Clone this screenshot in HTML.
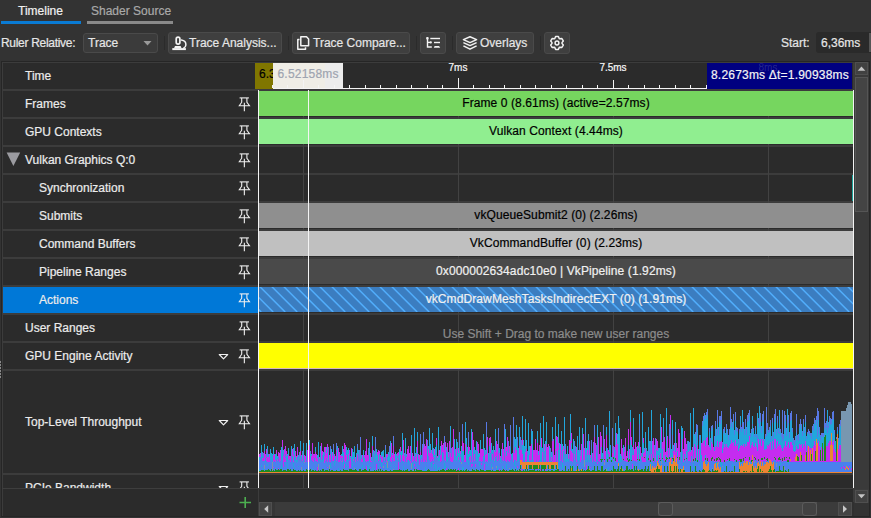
<!DOCTYPE html><html><head><meta charset="utf-8"><style>
*{margin:0;padding:0;box-sizing:border-box}
html,body{width:871px;height:518px;overflow:hidden;background:#333333;font-family:"Liberation Sans", sans-serif;font-size:12px;color:#e6e6e6}
.abs{position:absolute}
.t{position:absolute;white-space:nowrap;line-height:14px;-webkit-text-stroke:0.2px currentColor}
.btn{position:absolute;background:#3f3f3f;border:1px solid #4a4a4a;border-radius:3px}
.sep{position:absolute;width:1px;background:#2b2b2b}
svg{position:absolute;overflow:visible}
</style></head><body>

<div class="t" style="left:18px;top:4px;color:#f0f0f0">Timeline</div>
<div class="abs" style="left:1px;top:21px;width:80px;height:3px;background:#0a7bd4"></div>
<div class="t" style="left:91px;top:4px;color:#a9a9a9">Shader Source</div>
<div class="abs" style="left:87px;top:21px;width:86px;height:3px;background:#8a8a8a"></div>
<div class="t" style="left:1px;top:36px;letter-spacing:-0.3px">Ruler Relative:</div>
<div class="btn" style="left:83px;top:33px;width:75px;height:20px;background:#3b3b3b"></div>
<div class="t" style="left:88px;top:36px">Trace</div>
<svg style="left:0;top:0" width="1" height="1"><path d="M143.5,41 H151.5 L147.5,45.5 Z" fill="#9a9a9a"/></svg>
<div class="sep" style="left:164px;top:36px;height:14px"></div>
<div class="btn" style="left:168px;top:32px;width:114px;height:22px"></div>
<div class="t" style="left:189px;top:36px">Trace Analysis...</div>
<div class="sep" style="left:288px;top:36px;height:14px"></div>
<div class="btn" style="left:292px;top:32px;width:118px;height:22px"></div>
<div class="t" style="left:313px;top:36px">Trace Compare...</div>
<div class="sep" style="left:416px;top:36px;height:14px"></div>
<div class="btn" style="left:420px;top:32px;width:26px;height:22px"></div>
<div class="sep" style="left:452px;top:36px;height:14px"></div>
<div class="btn" style="left:456px;top:32px;width:78px;height:22px"></div>
<div class="t" style="left:480px;top:36px">Overlays</div>
<div class="sep" style="left:540px;top:36px;height:14px"></div>
<div class="btn" style="left:544px;top:32px;width:26px;height:22px"></div>
<div class="t" style="left:781px;top:36px">Start:</div>
<div class="abs" style="left:816px;top:32px;width:60px;height:21px;background:#2a2a2a;border-radius:3px"></div>
<div class="abs" style="left:869px;top:33px;width:2px;height:19px;background:#555"></div>
<div class="t" style="left:821px;top:36px">6,36ms</div>
<svg style="left:0;top:0" width="1" height="1"><g fill="none" stroke="#f4f4f4" stroke-width="1.7"><rect x="176.2" y="37.2" width="3.7" height="7" rx="1.85"/><path d="M181.4,40 C184.3,40.4 186,42.6 185.9,45 C185.8,46.6 184.8,47.6 183.6,48.2" stroke-width="1.5" stroke-linecap="round"/></g><path d="M172.3,48.1 H185.9 V50.1 H172.3 Z" fill="#f4f4f4"/><path d="M175,46 H180.6 L181.6,48.2 H174 Z" fill="#f4f4f4"/><g fill="none" stroke="#f4f4f4" stroke-width="1.5" stroke-linejoin="round"><path d="M300.8,36.8 H306.5 L308.6,39 V45.8 H300.8 Z"/><path d="M299.5,39.5 H297.8 V49.2 H305.5 V47.2"/></g><g fill="none" stroke="#f4f4f4" stroke-width="1.4"><path d="M427.5,37.8 V47 H431.8"/><path d="M427.5,42.4 H431.2"/><path d="M430.3,38.5 H440"/><path d="M434,42.5 H440"/></g><path d="M434.6,46 H439 L440.2,47.8 H433.8 Z" fill="#f4f4f4"/><rect x="426.2" y="36.9" width="2.4" height="2.6" rx="0.8" fill="#f4f4f4"/><circle cx="430.8" cy="42.4" r="1.1" fill="#f4f4f4"/><g fill="none" stroke="#f2f2f2" stroke-width="1.5" stroke-linejoin="round"><path d="M470,36.7 L476.6,39.6 L470,42.6 L463.4,39.6 Z"/><path d="M463.4,42.6 L470,45.6 L476.6,42.6"/><path d="M463.4,45.9 L470,49.2 L476.6,45.9"/></g><g fill="none" stroke="#f2f2f2" stroke-width="1.5" stroke-linejoin="round"><path d="M561.99,43.35 L563.28,45.04 L561.90,47.42 L559.80,47.15 L559.19,47.49 L558.37,49.46 L555.63,49.46 L554.81,47.49 L554.20,47.15 L552.10,47.42 L550.72,45.04 L552.01,43.35 L552.01,42.65 L550.72,40.96 L552.10,38.58 L554.20,38.85 L554.81,38.51 L555.63,36.54 L558.37,36.54 L559.19,38.51 L559.80,38.85 L561.90,38.58 L563.28,40.96 L561.99,42.65 Z"/><circle cx="557" cy="43" r="1.9"/></g></svg>
<div class="abs" style="left:1px;top:61px;width:869px;height:456px;background:#262626"></div>
<div class="abs" style="left:2px;top:62px;width:867px;height:454px;background:#3c3c3c"></div>
<div class="abs" style="left:0;top:0;width:871px;height:518px;">
<div class="abs" style="left:0;top:63px;width:871px;height:425px;overflow:hidden">
<div class="abs" style="left:3px;top:0px;width:255px;height:26px;background:#2b2b2b"></div>
<div class="abs" style="left:259px;top:0px;width:594px;height:26px;background:#2b2b2b"></div>
<div class="t" style="left:25px;top:5.5px;color:#ececec">Time</div>
<div class="abs" style="left:3px;top:28px;width:255px;height:26px;background:#2b2b2b"></div>
<div class="abs" style="left:259px;top:28px;width:594px;height:26px;background:#2b2b2b"></div>
<div class="t" style="left:25px;top:33.5px;color:#ececec">Frames</div>
<div class="abs" style="left:3px;top:56px;width:255px;height:26px;background:#2b2b2b"></div>
<div class="abs" style="left:259px;top:56px;width:594px;height:26px;background:#2b2b2b"></div>
<div class="t" style="left:25px;top:61.5px;color:#ececec">GPU Contexts</div>
<div class="abs" style="left:3px;top:84px;width:255px;height:26px;background:#2b2b2b"></div>
<div class="abs" style="left:259px;top:84px;width:594px;height:26px;background:#2b2b2b"></div>
<div class="t" style="left:25px;top:89.5px;color:#ececec">Vulkan Graphics Q:0</div>
<div class="abs" style="left:3px;top:112px;width:255px;height:26px;background:#2b2b2b"></div>
<div class="abs" style="left:259px;top:112px;width:594px;height:26px;background:#2b2b2b"></div>
<div class="t" style="left:39px;top:117.5px;color:#ececec">Synchronization</div>
<div class="abs" style="left:3px;top:140px;width:255px;height:26px;background:#2b2b2b"></div>
<div class="abs" style="left:259px;top:140px;width:594px;height:26px;background:#2b2b2b"></div>
<div class="t" style="left:39px;top:145.5px;color:#ececec">Submits</div>
<div class="abs" style="left:3px;top:168px;width:255px;height:26px;background:#2b2b2b"></div>
<div class="abs" style="left:259px;top:168px;width:594px;height:26px;background:#2b2b2b"></div>
<div class="t" style="left:39px;top:173.5px;color:#ececec">Command Buffers</div>
<div class="abs" style="left:3px;top:196px;width:255px;height:26px;background:#2b2b2b"></div>
<div class="abs" style="left:259px;top:196px;width:594px;height:26px;background:#2b2b2b"></div>
<div class="t" style="left:39px;top:201.5px;color:#ececec">Pipeline Ranges</div>
<div class="abs" style="left:3px;top:224px;width:255px;height:26px;background:#0078d7"></div>
<div class="abs" style="left:259px;top:224px;width:594px;height:26px;background:#2b2b2b"></div>
<div class="t" style="left:39px;top:229.5px;color:#ececec">Actions</div>
<div class="abs" style="left:3px;top:252px;width:255px;height:26px;background:#2b2b2b"></div>
<div class="abs" style="left:259px;top:252px;width:594px;height:26px;background:#2b2b2b"></div>
<div class="t" style="left:25px;top:257.5px;color:#ececec">User Ranges</div>
<div class="abs" style="left:3px;top:280px;width:255px;height:26px;background:#2b2b2b"></div>
<div class="abs" style="left:259px;top:280px;width:594px;height:26px;background:#2b2b2b"></div>
<div class="t" style="left:25px;top:285.5px;color:#ececec">GPU Engine Activity</div>
<div class="abs" style="left:3px;top:308px;width:255px;height:102px;background:#2b2b2b"></div>
<div class="abs" style="left:259px;top:308px;width:594px;height:102px;background:#2b2b2b"></div>
<div class="t" style="left:25px;top:351.5px;color:#ececec">Top-Level Throughput</div>
<div class="abs" style="left:3px;top:412px;width:255px;height:26px;background:#2b2b2b"></div>
<div class="abs" style="left:259px;top:412px;width:594px;height:26px;background:#2b2b2b"></div>
<div class="t" style="left:25px;top:417.5px;color:#ececec">PCIe Bandwidth</div>
<svg style="left:0;top:0" width="1" height="1"><g transform="translate(238,33.5)" fill="none" stroke="#f0f0f0" stroke-width="1.1"><path d="M1.6,1.4 H10.9"/><path d="M3.7,1.6 V5.7 L1.3,9.3 H11.5 L8.9,5.7 V1.6"/><path d="M6.35,6.2 V14.8"/></g><g transform="translate(238,61.5)" fill="none" stroke="#f0f0f0" stroke-width="1.1"><path d="M1.6,1.4 H10.9"/><path d="M3.7,1.6 V5.7 L1.3,9.3 H11.5 L8.9,5.7 V1.6"/><path d="M6.35,6.2 V14.8"/></g><g transform="translate(238,89.5)" fill="none" stroke="#f0f0f0" stroke-width="1.1"><path d="M1.6,1.4 H10.9"/><path d="M3.7,1.6 V5.7 L1.3,9.3 H11.5 L8.9,5.7 V1.6"/><path d="M6.35,6.2 V14.8"/></g><path d="M6.6,89.4 H20.2 L13.4,103 Z" fill="#9b9ba0"/><g transform="translate(238,117.5)" fill="none" stroke="#f0f0f0" stroke-width="1.1"><path d="M1.6,1.4 H10.9"/><path d="M3.7,1.6 V5.7 L1.3,9.3 H11.5 L8.9,5.7 V1.6"/><path d="M6.35,6.2 V14.8"/></g><g transform="translate(238,145.5)" fill="none" stroke="#f0f0f0" stroke-width="1.1"><path d="M1.6,1.4 H10.9"/><path d="M3.7,1.6 V5.7 L1.3,9.3 H11.5 L8.9,5.7 V1.6"/><path d="M6.35,6.2 V14.8"/></g><g transform="translate(238,173.5)" fill="none" stroke="#f0f0f0" stroke-width="1.1"><path d="M1.6,1.4 H10.9"/><path d="M3.7,1.6 V5.7 L1.3,9.3 H11.5 L8.9,5.7 V1.6"/><path d="M6.35,6.2 V14.8"/></g><g transform="translate(238,201.5)" fill="none" stroke="#f0f0f0" stroke-width="1.1"><path d="M1.6,1.4 H10.9"/><path d="M3.7,1.6 V5.7 L1.3,9.3 H11.5 L8.9,5.7 V1.6"/><path d="M6.35,6.2 V14.8"/></g><g transform="translate(238,229.5)" fill="none" stroke="#f0f0f0" stroke-width="1.1"><path d="M1.6,1.4 H10.9"/><path d="M3.7,1.6 V5.7 L1.3,9.3 H11.5 L8.9,5.7 V1.6"/><path d="M6.35,6.2 V14.8"/></g><g transform="translate(238,257.5)" fill="none" stroke="#f0f0f0" stroke-width="1.1"><path d="M1.6,1.4 H10.9"/><path d="M3.7,1.6 V5.7 L1.3,9.3 H11.5 L8.9,5.7 V1.6"/><path d="M6.35,6.2 V14.8"/></g><g transform="translate(238,285.5)" fill="none" stroke="#f0f0f0" stroke-width="1.1"><path d="M1.6,1.4 H10.9"/><path d="M3.7,1.6 V5.7 L1.3,9.3 H11.5 L8.9,5.7 V1.6"/><path d="M6.35,6.2 V14.8"/></g><path d="M219.3,291.5 H227.7 L223.5,295.8 Z" fill="none" stroke="#f0f0f0" stroke-width="1.2" stroke-linejoin="round"/><g transform="translate(238,351.5)" fill="none" stroke="#f0f0f0" stroke-width="1.1"><path d="M1.6,1.4 H10.9"/><path d="M3.7,1.6 V5.7 L1.3,9.3 H11.5 L8.9,5.7 V1.6"/><path d="M6.35,6.2 V14.8"/></g><path d="M219.3,357.5 H227.7 L223.5,361.8 Z" fill="none" stroke="#f0f0f0" stroke-width="1.2" stroke-linejoin="round"/><g transform="translate(238,417.5)" fill="none" stroke="#f0f0f0" stroke-width="1.1"><path d="M1.6,1.4 H10.9"/><path d="M3.7,1.6 V5.7 L1.3,9.3 H11.5 L8.9,5.7 V1.6"/><path d="M6.35,6.2 V14.8"/></g><path d="M219.3,423.5 H227.7 L223.5,427.8 Z" fill="none" stroke="#f0f0f0" stroke-width="1.2" stroke-linejoin="round"/></svg>
</div>
</div>
<div class="abs" style="left:303px;top:91px;width:1px;height:397px;background:#424242"></div>
<div class="abs" style="left:458px;top:91px;width:1px;height:397px;background:#424242"></div>
<div class="abs" style="left:613px;top:91px;width:1px;height:397px;background:#424242"></div>
<div class="abs" style="left:768px;top:91px;width:1px;height:397px;background:#424242"></div>
<div class="abs" style="left:259px;top:91px;width:594px;height:25px;background:#76d65f;"></div>
<div class="t" style="left:259px;width:594px;text-align:center;top:95.5px;color:#000;letter-spacing:0.1px">Frame 0 (8.61ms) (active=2.57ms)</div>
<div class="abs" style="left:259px;top:119px;width:594px;height:25px;background:#90ee90;"></div>
<div class="t" style="left:259px;width:594px;text-align:center;top:123.5px;color:#000;letter-spacing:0.1px">Vulkan Context (4.44ms)</div>
<div class="abs" style="left:852px;top:175px;width:1px;height:26px;background:#1aa39a"></div>
<div class="abs" style="left:259px;top:203px;width:594px;height:25px;background:#8f8f8f;"></div>
<div class="t" style="left:259px;width:594px;text-align:center;top:207.5px;color:#000;letter-spacing:0.1px">vkQueueSubmit2 (0) (2.26ms)</div>
<div class="abs" style="left:259px;top:231px;width:594px;height:25px;background:#c0c0c0;"></div>
<div class="t" style="left:259px;width:594px;text-align:center;top:235.5px;color:#000;letter-spacing:0.1px">VkCommandBuffer (0) (2.23ms)</div>
<div class="abs" style="left:259px;top:259px;width:594px;height:25px;background:#4a4a4a;"></div>
<div class="t" style="left:259px;width:594px;text-align:center;top:263.5px;color:#f0f0f0;letter-spacing:0.1px">0x000002634adc10e0 | VkPipeline (1.92ms)</div>
<div class="abs" style="left:259px;top:287px;width:594px;height:25px;background:#3b7dc0;"></div>
<svg style="left:259px;top:287px;overflow:hidden" width="594" height="25" viewBox="259 287 594 25"><g stroke="#52aefc" stroke-width="1.5"><path d="M223.7,286.5 L249.2,312" /><path d="M235.7,286.5 L261.2,312" /><path d="M247.7,286.5 L273.2,312" /><path d="M259.7,286.5 L285.2,312" /><path d="M271.7,286.5 L297.2,312" /><path d="M283.7,286.5 L309.2,312" /><path d="M295.7,286.5 L321.2,312" /><path d="M307.7,286.5 L333.2,312" /><path d="M319.7,286.5 L345.2,312" /><path d="M331.7,286.5 L357.2,312" /><path d="M343.7,286.5 L369.2,312" /><path d="M355.7,286.5 L381.2,312" /><path d="M367.7,286.5 L393.2,312" /><path d="M379.7,286.5 L405.2,312" /><path d="M391.7,286.5 L417.2,312" /><path d="M403.7,286.5 L429.2,312" /><path d="M415.7,286.5 L441.2,312" /><path d="M427.7,286.5 L453.2,312" /><path d="M439.7,286.5 L465.2,312" /><path d="M451.7,286.5 L477.2,312" /><path d="M463.7,286.5 L489.2,312" /><path d="M475.7,286.5 L501.2,312" /><path d="M487.7,286.5 L513.2,312" /><path d="M499.7,286.5 L525.2,312" /><path d="M511.7,286.5 L537.2,312" /><path d="M523.7,286.5 L549.2,312" /><path d="M535.7,286.5 L561.2,312" /><path d="M547.7,286.5 L573.2,312" /><path d="M559.7,286.5 L585.2,312" /><path d="M571.7,286.5 L597.2,312" /><path d="M583.7,286.5 L609.2,312" /><path d="M595.7,286.5 L621.2,312" /><path d="M607.7,286.5 L633.2,312" /><path d="M619.7,286.5 L645.2,312" /><path d="M631.7,286.5 L657.2,312" /><path d="M643.7,286.5 L669.2,312" /><path d="M655.7,286.5 L681.2,312" /><path d="M667.7,286.5 L693.2,312" /><path d="M679.7,286.5 L705.2,312" /><path d="M691.7,286.5 L717.2,312" /><path d="M703.7,286.5 L729.2,312" /><path d="M715.7,286.5 L741.2,312" /><path d="M727.7,286.5 L753.2,312" /><path d="M739.7,286.5 L765.2,312" /><path d="M751.7,286.5 L777.2,312" /><path d="M763.7,286.5 L789.2,312" /><path d="M775.7,286.5 L801.2,312" /><path d="M787.7,286.5 L813.2,312" /><path d="M799.7,286.5 L825.2,312" /><path d="M811.7,286.5 L837.2,312" /><path d="M823.7,286.5 L849.2,312" /><path d="M835.7,286.5 L861.2,312" /><path d="M847.7,286.5 L873.2,312" /><path d="M859.7,286.5 L885.2,312" /><path d="M871.7,286.5 L897.2,312" /></g></svg>
<div class="t" style="left:259px;width:594px;text-align:center;top:291.5px;color:#f0f0f0;letter-spacing:0.1px">vkCmdDrawMeshTasksIndirectEXT (0) (1.91ms)</div>
<div class="t" style="left:259px;width:594px;text-align:center;top:326.5px;color:#8c8c8c">Use Shift + Drag to make new user ranges</div>
<div class="abs" style="left:259px;top:343px;width:594px;height:25px;background:#ffff00;"></div>
<div class="abs" style="left:259px;top:368px;width:594px;height:1px;background:#d8b8c0"></div>
<div class="abs" style="left:259px;top:63px;width:594px;height:26px;background:#2b2b2b"></div>
<div class="abs" style="left:255px;top:63px;width:18px;height:26px;background:#807600;overflow:hidden"><div class="t" style="left:4px;top:4.3px;color:#000">6.3</div></div>
<div class="abs" style="left:273px;top:63px;width:52px;height:25px;background:#efede6"></div>
<div class="abs" style="left:325px;top:63px;width:18px;height:25px;background:#ececec"></div>
<div class="t" style="left:277.5px;top:67.3px;color:#9ea4b0;letter-spacing:0.2px">6.52158ms</div>
<div class="abs" style="left:273px;top:88px;width:434px;height:1px;background:#f4f4f4"></div>
<div class="abs" style="left:272px;top:85px;width:1px;height:3px;background:#f4f4f4"></div><div class="abs" style="left:287px;top:85px;width:1px;height:3px;background:#f4f4f4"></div><div class="abs" style="left:303px;top:80px;width:1px;height:8px;background:#f4f4f4"></div><div class="abs" style="left:318px;top:85px;width:1px;height:3px;background:#f4f4f4"></div><div class="abs" style="left:334px;top:85px;width:1px;height:3px;background:#f4f4f4"></div><div class="abs" style="left:349px;top:85px;width:1px;height:3px;background:#f4f4f4"></div><div class="abs" style="left:365px;top:85px;width:1px;height:3px;background:#f4f4f4"></div><div class="abs" style="left:380px;top:85px;width:1px;height:3px;background:#f4f4f4"></div><div class="abs" style="left:396px;top:85px;width:1px;height:3px;background:#f4f4f4"></div><div class="abs" style="left:411px;top:85px;width:1px;height:3px;background:#f4f4f4"></div><div class="abs" style="left:427px;top:85px;width:1px;height:3px;background:#f4f4f4"></div><div class="abs" style="left:442px;top:85px;width:1px;height:3px;background:#f4f4f4"></div><div class="abs" style="left:458px;top:78px;width:1px;height:10px;background:#f4f4f4"></div><div class="abs" style="left:473px;top:85px;width:1px;height:3px;background:#f4f4f4"></div><div class="abs" style="left:489px;top:85px;width:1px;height:3px;background:#f4f4f4"></div><div class="abs" style="left:504px;top:85px;width:1px;height:3px;background:#f4f4f4"></div><div class="abs" style="left:520px;top:85px;width:1px;height:3px;background:#f4f4f4"></div><div class="abs" style="left:535px;top:85px;width:1px;height:3px;background:#f4f4f4"></div><div class="abs" style="left:551px;top:85px;width:1px;height:3px;background:#f4f4f4"></div><div class="abs" style="left:566px;top:85px;width:1px;height:3px;background:#f4f4f4"></div><div class="abs" style="left:582px;top:85px;width:1px;height:3px;background:#f4f4f4"></div><div class="abs" style="left:597px;top:85px;width:1px;height:3px;background:#f4f4f4"></div><div class="abs" style="left:613px;top:80px;width:1px;height:8px;background:#f4f4f4"></div><div class="abs" style="left:628px;top:85px;width:1px;height:3px;background:#f4f4f4"></div><div class="abs" style="left:644px;top:85px;width:1px;height:3px;background:#f4f4f4"></div><div class="abs" style="left:659px;top:85px;width:1px;height:3px;background:#f4f4f4"></div><div class="abs" style="left:675px;top:85px;width:1px;height:3px;background:#f4f4f4"></div><div class="abs" style="left:690px;top:85px;width:1px;height:3px;background:#f4f4f4"></div><div class="abs" style="left:706px;top:85px;width:1px;height:3px;background:#f4f4f4"></div><div class="abs" style="left:721px;top:85px;width:1px;height:3px;background:rgba(255,255,255,0.18)"></div><div class="abs" style="left:737px;top:85px;width:1px;height:3px;background:rgba(255,255,255,0.18)"></div><div class="abs" style="left:752px;top:85px;width:1px;height:3px;background:rgba(255,255,255,0.18)"></div><div class="abs" style="left:768px;top:85px;width:1px;height:3px;background:rgba(255,255,255,0.18)"></div><div class="abs" style="left:783px;top:85px;width:1px;height:3px;background:rgba(255,255,255,0.18)"></div><div class="abs" style="left:799px;top:85px;width:1px;height:3px;background:rgba(255,255,255,0.18)"></div><div class="abs" style="left:814px;top:85px;width:1px;height:3px;background:rgba(255,255,255,0.18)"></div><div class="abs" style="left:830px;top:85px;width:1px;height:3px;background:rgba(255,255,255,0.18)"></div><div class="abs" style="left:845px;top:85px;width:1px;height:3px;background:rgba(255,255,255,0.18)"></div>
<div class="t" style="left:438px;width:40px;text-align:center;top:60.5px;font-size:10px;color:#f8f8f8">7ms</div>
<div class="t" style="left:593px;width:40px;text-align:center;top:60.5px;font-size:10px;color:#f8f8f8">7.5ms</div>
<div class="abs" style="left:707px;top:63px;width:145px;height:26px;background:#000080"></div>
<div class="t" style="left:748px;width:40px;text-align:center;top:60.5px;font-size:10px;color:rgba(255,255,255,0.13)">8ms</div>
<div class="t" style="left:711px;top:67.5px;color:#f4f4f4;letter-spacing:0.2px">8.2673ms Δt=1.90938ms</div>
<svg style="left:0;top:0" width="871" height="518" shape-rendering="crispEdges"><rect x="259" y="472" width="593" height="1" fill="#ec8434"/><rect x="259" y="471" width="1" height="1" fill="#1f8a1f"/><rect x="259" y="460" width="1" height="11" fill="#4a80ee"/><rect x="259" y="469" width="1" height="2" fill="#22a6dc"/><rect x="259" y="457" width="1" height="3" fill="#22a6dc"/><rect x="259" y="454" width="1" height="3" fill="#c42cf0"/><rect x="260" y="471" width="1" height="1" fill="#1f8a1f"/><rect x="260" y="460" width="1" height="11" fill="#4a80ee"/><rect x="260" y="457" width="1" height="3" fill="#5878e4"/><rect x="260" y="453" width="1" height="4" fill="#c42cf0"/><rect x="261" y="470" width="1" height="2" fill="#1f8a1f"/><rect x="261" y="460" width="1" height="10" fill="#4a80ee"/><rect x="261" y="465" width="1" height="2" fill="#22a6dc"/><rect x="261" y="456" width="1" height="4" fill="#22a6dc"/><rect x="261" y="451" width="1" height="5" fill="#22a6dc"/><rect x="261" y="445" width="1" height="6" fill="#22a6dc"/><rect x="262" y="470" width="1" height="2" fill="#1f8a1f"/><rect x="262" y="461" width="1" height="9" fill="#4a80ee"/><rect x="262" y="458" width="1" height="3" fill="#c42cf0"/><rect x="262" y="456" width="1" height="2" fill="#22a6dc"/><rect x="262" y="452" width="1" height="4" fill="#5878e4"/><rect x="263" y="470" width="1" height="2" fill="#1f8a1f"/><rect x="263" y="461" width="1" height="9" fill="#4a80ee"/><rect x="263" y="468" width="1" height="2" fill="#22a6dc"/><rect x="263" y="458" width="1" height="3" fill="#c42cf0"/><rect x="263" y="453" width="1" height="5" fill="#5878e4"/><rect x="264" y="471" width="1" height="1" fill="#1f8a1f"/><rect x="264" y="461" width="1" height="10" fill="#4a80ee"/><rect x="264" y="465" width="1" height="4" fill="#8090a8"/><rect x="264" y="451" width="1" height="10" fill="#c42cf0"/><rect x="264" y="444" width="1" height="7" fill="#22a6dc"/><rect x="265" y="470" width="1" height="2" fill="#1f8a1f"/><rect x="265" y="462" width="1" height="8" fill="#4a80ee"/><rect x="265" y="458" width="1" height="4" fill="#22a6dc"/><rect x="265" y="454" width="1" height="4" fill="#c42cf0"/><rect x="266" y="470" width="1" height="2" fill="#1f8a1f"/><rect x="266" y="461" width="1" height="9" fill="#4a80ee"/><rect x="266" y="458" width="1" height="3" fill="#c42cf0"/><rect x="266" y="453" width="1" height="5" fill="#5878e4"/><rect x="266" y="449" width="1" height="4" fill="#c42cf0"/><rect x="267" y="470" width="1" height="2" fill="#1f8a1f"/><rect x="267" y="462" width="1" height="8" fill="#4a80ee"/><rect x="267" y="464" width="1" height="2" fill="#22a6dc"/><rect x="267" y="457" width="1" height="5" fill="#c42cf0"/><rect x="267" y="451" width="1" height="6" fill="#5878e4"/><rect x="267" y="446" width="1" height="5" fill="#22a6dc"/><rect x="268" y="469" width="1" height="3" fill="#1f8a1f"/><rect x="268" y="462" width="1" height="7" fill="#4a80ee"/><rect x="268" y="457" width="1" height="5" fill="#c42cf0"/><rect x="268" y="454" width="1" height="3" fill="#22a6dc"/><rect x="269" y="470" width="1" height="2" fill="#1f8a1f"/><rect x="269" y="462" width="1" height="8" fill="#4a80ee"/><rect x="269" y="458" width="1" height="4" fill="#c42cf0"/><rect x="269" y="454" width="1" height="4" fill="#c42cf0"/><rect x="270" y="471" width="1" height="1" fill="#1f8a1f"/><rect x="270" y="460" width="1" height="11" fill="#4a80ee"/><rect x="270" y="453" width="1" height="7" fill="#22a6dc"/><rect x="270" y="449" width="1" height="4" fill="#22a6dc"/><rect x="271" y="469" width="1" height="3" fill="#1f8a1f"/><rect x="271" y="460" width="1" height="9" fill="#4a80ee"/><rect x="271" y="458" width="1" height="2" fill="#22a6dc"/><rect x="271" y="453" width="1" height="5" fill="#22a6dc"/><rect x="272" y="471" width="1" height="1" fill="#1f8a1f"/><rect x="272" y="462" width="1" height="9" fill="#4a80ee"/><rect x="272" y="462" width="1" height="9" fill="#8090a8"/><rect x="272" y="454" width="1" height="8" fill="#22a6dc"/><rect x="273" y="470" width="1" height="2" fill="#1f8a1f"/><rect x="273" y="462" width="1" height="8" fill="#4a80ee"/><rect x="273" y="467" width="1" height="1" fill="#c42cf0"/><rect x="273" y="455" width="1" height="7" fill="#c42cf0"/><rect x="273" y="447" width="1" height="8" fill="#22a6dc"/><rect x="274" y="471" width="1" height="1" fill="#1f8a1f"/><rect x="274" y="461" width="1" height="10" fill="#4a80ee"/><rect x="274" y="454" width="1" height="7" fill="#c42cf0"/><rect x="275" y="469" width="1" height="3" fill="#1f8a1f"/><rect x="275" y="462" width="1" height="7" fill="#4a80ee"/><rect x="275" y="460" width="1" height="2" fill="#c42cf0"/><rect x="275" y="457" width="1" height="3" fill="#22a6dc"/><rect x="275" y="454" width="1" height="3" fill="#22a6dc"/><rect x="276" y="470" width="1" height="2" fill="#1f8a1f"/><rect x="276" y="461" width="1" height="9" fill="#4a80ee"/><rect x="276" y="454" width="1" height="7" fill="#22a6dc"/><rect x="276" y="450" width="1" height="4" fill="#c42cf0"/><rect x="277" y="470" width="1" height="2" fill="#1f8a1f"/><rect x="277" y="461" width="1" height="9" fill="#4a80ee"/><rect x="277" y="459" width="1" height="2" fill="#c42cf0"/><rect x="277" y="457" width="1" height="2" fill="#22a6dc"/><rect x="277" y="456" width="1" height="1" fill="#22a6dc"/><rect x="278" y="469" width="1" height="3" fill="#1f8a1f"/><rect x="278" y="461" width="1" height="8" fill="#4a80ee"/><rect x="278" y="468" width="1" height="1" fill="#c42cf0"/><rect x="278" y="457" width="1" height="4" fill="#5878e4"/><rect x="278" y="452" width="1" height="5" fill="#c42cf0"/><rect x="279" y="470" width="1" height="2" fill="#1f8a1f"/><rect x="279" y="462" width="1" height="8" fill="#4a80ee"/><rect x="279" y="453" width="1" height="9" fill="#c42cf0"/><rect x="280" y="469" width="1" height="3" fill="#1f8a1f"/><rect x="280" y="461" width="1" height="8" fill="#4a80ee"/><rect x="280" y="450" width="1" height="11" fill="#c42cf0"/><rect x="281" y="469" width="1" height="3" fill="#1f8a1f"/><rect x="281" y="461" width="1" height="8" fill="#4a80ee"/><rect x="281" y="465" width="1" height="4" fill="#22a6dc"/><rect x="281" y="447" width="1" height="14" fill="#22a6dc"/><rect x="282" y="471" width="1" height="1" fill="#1f8a1f"/><rect x="282" y="460" width="1" height="11" fill="#4a80ee"/><rect x="282" y="453" width="1" height="7" fill="#22a6dc"/><rect x="282" y="447" width="1" height="6" fill="#5878e4"/><rect x="282" y="440" width="1" height="7" fill="#c42cf0"/><rect x="283" y="470" width="1" height="2" fill="#1f8a1f"/><rect x="283" y="460" width="1" height="10" fill="#4a80ee"/><rect x="283" y="460" width="1" height="7" fill="#c42cf0"/><rect x="283" y="456" width="1" height="4" fill="#c42cf0"/><rect x="283" y="453" width="1" height="3" fill="#5878e4"/><rect x="283" y="450" width="1" height="3" fill="#22a6dc"/><rect x="284" y="470" width="1" height="2" fill="#1f8a1f"/><rect x="284" y="462" width="1" height="8" fill="#4a80ee"/><rect x="284" y="462" width="1" height="2" fill="#22a6dc"/><rect x="284" y="455" width="1" height="7" fill="#c42cf0"/><rect x="284" y="449" width="1" height="6" fill="#c42cf0"/><rect x="285" y="470" width="1" height="2" fill="#1f8a1f"/><rect x="285" y="462" width="1" height="8" fill="#4a80ee"/><rect x="285" y="458" width="1" height="4" fill="#c42cf0"/><rect x="285" y="454" width="1" height="4" fill="#5878e4"/><rect x="285" y="446" width="1" height="8" fill="#c42cf0"/><rect x="286" y="471" width="1" height="1" fill="#1f8a1f"/><rect x="286" y="461" width="1" height="10" fill="#4a80ee"/><rect x="286" y="456" width="1" height="5" fill="#22a6dc"/><rect x="286" y="451" width="1" height="5" fill="#c42cf0"/><rect x="287" y="469" width="1" height="3" fill="#1f8a1f"/><rect x="287" y="461" width="1" height="8" fill="#4a80ee"/><rect x="287" y="462" width="1" height="6" fill="#22a6dc"/><rect x="287" y="454" width="1" height="7" fill="#22a6dc"/><rect x="288" y="469" width="1" height="3" fill="#1f8a1f"/><rect x="288" y="460" width="1" height="9" fill="#4a80ee"/><rect x="288" y="455" width="1" height="5" fill="#c42cf0"/><rect x="288" y="448" width="1" height="7" fill="#22a6dc"/><rect x="289" y="470" width="1" height="2" fill="#1f8a1f"/><rect x="289" y="461" width="1" height="9" fill="#4a80ee"/><rect x="289" y="459" width="1" height="2" fill="#5878e4"/><rect x="289" y="456" width="1" height="3" fill="#c42cf0"/><rect x="290" y="469" width="1" height="3" fill="#1f8a1f"/><rect x="290" y="462" width="1" height="7" fill="#4a80ee"/><rect x="290" y="459" width="1" height="3" fill="#c42cf0"/><rect x="290" y="456" width="1" height="3" fill="#c42cf0"/><rect x="291" y="471" width="1" height="1" fill="#1f8a1f"/><rect x="291" y="461" width="1" height="10" fill="#4a80ee"/><rect x="291" y="452" width="1" height="9" fill="#5878e4"/><rect x="291" y="446" width="1" height="6" fill="#22a6dc"/><rect x="292" y="471" width="1" height="1" fill="#1f8a1f"/><rect x="292" y="460" width="1" height="11" fill="#4a80ee"/><rect x="292" y="456" width="1" height="4" fill="#22a6dc"/><rect x="292" y="452" width="1" height="4" fill="#c42cf0"/><rect x="292" y="449" width="1" height="3" fill="#c42cf0"/><rect x="293" y="469" width="1" height="3" fill="#1f8a1f"/><rect x="293" y="462" width="1" height="7" fill="#4a80ee"/><rect x="293" y="463" width="1" height="4" fill="#22a6dc"/><rect x="293" y="455" width="1" height="7" fill="#c42cf0"/><rect x="293" y="448" width="1" height="7" fill="#5878e4"/><rect x="294" y="470" width="1" height="2" fill="#1f8a1f"/><rect x="294" y="461" width="1" height="9" fill="#4a80ee"/><rect x="294" y="467" width="1" height="2" fill="#22a6dc"/><rect x="294" y="454" width="1" height="7" fill="#22a6dc"/><rect x="294" y="444" width="1" height="10" fill="#22a6dc"/><rect x="295" y="470" width="1" height="2" fill="#1f8a1f"/><rect x="295" y="461" width="1" height="9" fill="#4a80ee"/><rect x="295" y="457" width="1" height="4" fill="#22a6dc"/><rect x="295" y="451" width="1" height="6" fill="#c42cf0"/><rect x="296" y="471" width="1" height="1" fill="#1f8a1f"/><rect x="296" y="462" width="1" height="9" fill="#4a80ee"/><rect x="296" y="462" width="1" height="1" fill="#22a6dc"/><rect x="296" y="460" width="1" height="2" fill="#22a6dc"/><rect x="296" y="456" width="1" height="4" fill="#c42cf0"/><rect x="297" y="471" width="1" height="1" fill="#1f8a1f"/><rect x="297" y="462" width="1" height="9" fill="#4a80ee"/><rect x="297" y="457" width="1" height="5" fill="#22a6dc"/><rect x="297" y="453" width="1" height="4" fill="#c42cf0"/><rect x="297" y="447" width="1" height="6" fill="#c42cf0"/><rect x="298" y="470" width="1" height="2" fill="#1f8a1f"/><rect x="298" y="462" width="1" height="8" fill="#4a80ee"/><rect x="298" y="466" width="1" height="1" fill="#22a6dc"/><rect x="298" y="458" width="1" height="4" fill="#5878e4"/><rect x="298" y="455" width="1" height="3" fill="#22a6dc"/><rect x="299" y="471" width="1" height="1" fill="#1f8a1f"/><rect x="299" y="461" width="1" height="10" fill="#4a80ee"/><rect x="299" y="452" width="1" height="9" fill="#5878e4"/><rect x="300" y="470" width="1" height="2" fill="#1f8a1f"/><rect x="300" y="462" width="1" height="8" fill="#4a80ee"/><rect x="300" y="456" width="1" height="6" fill="#5878e4"/><rect x="300" y="451" width="1" height="5" fill="#c42cf0"/><rect x="300" y="441" width="1" height="10" fill="#22a6dc"/><rect x="301" y="471" width="1" height="1" fill="#1f8a1f"/><rect x="301" y="462" width="1" height="9" fill="#4a80ee"/><rect x="301" y="467" width="1" height="3" fill="#8090a8"/><rect x="301" y="459" width="1" height="3" fill="#5878e4"/><rect x="301" y="455" width="1" height="4" fill="#22a6dc"/><rect x="302" y="471" width="1" height="1" fill="#1f8a1f"/><rect x="302" y="461" width="1" height="10" fill="#4a80ee"/><rect x="302" y="464" width="1" height="1" fill="#22a6dc"/><rect x="302" y="457" width="1" height="4" fill="#c42cf0"/><rect x="302" y="455" width="1" height="2" fill="#c42cf0"/><rect x="302" y="451" width="1" height="4" fill="#5878e4"/><rect x="303" y="470" width="1" height="2" fill="#1f8a1f"/><rect x="303" y="461" width="1" height="9" fill="#4a80ee"/><rect x="303" y="469" width="1" height="1" fill="#22a6dc"/><rect x="303" y="447" width="1" height="14" fill="#22a6dc"/><rect x="303" y="443" width="1" height="4" fill="#22a6dc"/><rect x="304" y="471" width="1" height="1" fill="#1f8a1f"/><rect x="304" y="462" width="1" height="9" fill="#4a80ee"/><rect x="304" y="462" width="1" height="1" fill="#8090a8"/><rect x="304" y="460" width="1" height="2" fill="#5878e4"/><rect x="304" y="458" width="1" height="2" fill="#c42cf0"/><rect x="304" y="455" width="1" height="3" fill="#c42cf0"/><rect x="305" y="471" width="1" height="1" fill="#1f8a1f"/><rect x="305" y="462" width="1" height="9" fill="#4a80ee"/><rect x="305" y="460" width="1" height="2" fill="#c42cf0"/><rect x="305" y="456" width="1" height="4" fill="#c42cf0"/><rect x="306" y="469" width="1" height="3" fill="#1f8a1f"/><rect x="306" y="461" width="1" height="8" fill="#4a80ee"/><rect x="306" y="452" width="1" height="9" fill="#22a6dc"/><rect x="306" y="443" width="1" height="9" fill="#22a6dc"/><rect x="307" y="470" width="1" height="2" fill="#1f8a1f"/><rect x="307" y="462" width="1" height="8" fill="#4a80ee"/><rect x="307" y="455" width="1" height="7" fill="#c42cf0"/><rect x="307" y="450" width="1" height="5" fill="#c42cf0"/><rect x="308" y="470" width="1" height="2" fill="#1f8a1f"/><rect x="308" y="462" width="1" height="8" fill="#4a80ee"/><rect x="308" y="466" width="1" height="4" fill="#22a6dc"/><rect x="308" y="458" width="1" height="4" fill="#22a6dc"/><rect x="308" y="455" width="1" height="3" fill="#c42cf0"/><rect x="309" y="470" width="1" height="2" fill="#1f8a1f"/><rect x="309" y="462" width="1" height="8" fill="#4a80ee"/><rect x="309" y="456" width="1" height="6" fill="#c42cf0"/><rect x="309" y="451" width="1" height="5" fill="#c42cf0"/><rect x="309" y="445" width="1" height="6" fill="#c42cf0"/><rect x="309" y="440" width="1" height="5" fill="#22a6dc"/><rect x="310" y="469" width="1" height="3" fill="#1f8a1f"/><rect x="310" y="460" width="1" height="9" fill="#4a80ee"/><rect x="310" y="454" width="1" height="6" fill="#22a6dc"/><rect x="310" y="451" width="1" height="3" fill="#5878e4"/><rect x="311" y="471" width="1" height="1" fill="#1f8a1f"/><rect x="311" y="460" width="1" height="11" fill="#4a80ee"/><rect x="311" y="458" width="1" height="2" fill="#c42cf0"/><rect x="311" y="456" width="1" height="2" fill="#c42cf0"/><rect x="311" y="454" width="1" height="2" fill="#22a6dc"/><rect x="312" y="470" width="1" height="2" fill="#1f8a1f"/><rect x="312" y="461" width="1" height="9" fill="#4a80ee"/><rect x="312" y="469" width="1" height="1" fill="#22a6dc"/><rect x="312" y="443" width="1" height="18" fill="#c42cf0"/><rect x="313" y="470" width="1" height="2" fill="#1f8a1f"/><rect x="313" y="462" width="1" height="8" fill="#4a80ee"/><rect x="313" y="468" width="1" height="1" fill="#22a6dc"/><rect x="313" y="458" width="1" height="4" fill="#c42cf0"/><rect x="313" y="454" width="1" height="4" fill="#c42cf0"/><rect x="314" y="471" width="1" height="1" fill="#1f8a1f"/><rect x="314" y="461" width="1" height="10" fill="#4a80ee"/><rect x="314" y="458" width="1" height="3" fill="#22a6dc"/><rect x="314" y="454" width="1" height="4" fill="#c42cf0"/><rect x="315" y="470" width="1" height="2" fill="#1f8a1f"/><rect x="315" y="461" width="1" height="9" fill="#4a80ee"/><rect x="315" y="458" width="1" height="3" fill="#c42cf0"/><rect x="315" y="452" width="1" height="6" fill="#c42cf0"/><rect x="315" y="447" width="1" height="5" fill="#22a6dc"/><rect x="316" y="471" width="1" height="1" fill="#1f8a1f"/><rect x="316" y="461" width="1" height="10" fill="#4a80ee"/><rect x="316" y="454" width="1" height="7" fill="#c42cf0"/><rect x="317" y="471" width="1" height="1" fill="#1f8a1f"/><rect x="317" y="462" width="1" height="9" fill="#4a80ee"/><rect x="317" y="467" width="1" height="4" fill="#c42cf0"/><rect x="317" y="458" width="1" height="4" fill="#c42cf0"/><rect x="317" y="455" width="1" height="3" fill="#22a6dc"/><rect x="318" y="470" width="1" height="2" fill="#1f8a1f"/><rect x="318" y="461" width="1" height="9" fill="#4a80ee"/><rect x="318" y="464" width="1" height="6" fill="#8090a8"/><rect x="318" y="442" width="1" height="19" fill="#22a6dc"/><rect x="319" y="471" width="1" height="1" fill="#1f8a1f"/><rect x="319" y="461" width="1" height="10" fill="#4a80ee"/><rect x="319" y="459" width="1" height="2" fill="#5878e4"/><rect x="319" y="457" width="1" height="2" fill="#c42cf0"/><rect x="320" y="470" width="1" height="2" fill="#1f8a1f"/><rect x="320" y="462" width="1" height="8" fill="#4a80ee"/><rect x="320" y="446" width="1" height="16" fill="#22a6dc"/><rect x="321" y="471" width="1" height="1" fill="#1f8a1f"/><rect x="321" y="460" width="1" height="11" fill="#4a80ee"/><rect x="321" y="450" width="1" height="10" fill="#c42cf0"/><rect x="321" y="443" width="1" height="7" fill="#c42cf0"/><rect x="322" y="469" width="1" height="3" fill="#1f8a1f"/><rect x="322" y="462" width="1" height="7" fill="#4a80ee"/><rect x="322" y="459" width="1" height="3" fill="#22a6dc"/><rect x="322" y="455" width="1" height="4" fill="#5878e4"/><rect x="322" y="451" width="1" height="4" fill="#c42cf0"/><rect x="323" y="469" width="1" height="3" fill="#1f8a1f"/><rect x="323" y="461" width="1" height="8" fill="#4a80ee"/><rect x="323" y="452" width="1" height="9" fill="#22a6dc"/><rect x="324" y="471" width="1" height="1" fill="#1f8a1f"/><rect x="324" y="461" width="1" height="10" fill="#4a80ee"/><rect x="324" y="461" width="1" height="2" fill="#c42cf0"/><rect x="324" y="456" width="1" height="5" fill="#c42cf0"/><rect x="324" y="452" width="1" height="4" fill="#5878e4"/><rect x="324" y="447" width="1" height="5" fill="#c42cf0"/><rect x="325" y="470" width="1" height="2" fill="#1f8a1f"/><rect x="325" y="461" width="1" height="9" fill="#4a80ee"/><rect x="325" y="455" width="1" height="6" fill="#c42cf0"/><rect x="325" y="447" width="1" height="8" fill="#c42cf0"/><rect x="326" y="470" width="1" height="2" fill="#1f8a1f"/><rect x="326" y="462" width="1" height="8" fill="#4a80ee"/><rect x="326" y="458" width="1" height="4" fill="#5878e4"/><rect x="326" y="453" width="1" height="5" fill="#c42cf0"/><rect x="326" y="447" width="1" height="6" fill="#22a6dc"/><rect x="327" y="470" width="1" height="2" fill="#1f8a1f"/><rect x="327" y="462" width="1" height="8" fill="#4a80ee"/><rect x="327" y="467" width="1" height="1" fill="#c42cf0"/><rect x="327" y="455" width="1" height="7" fill="#c42cf0"/><rect x="327" y="444" width="1" height="11" fill="#c42cf0"/><rect x="328" y="471" width="1" height="1" fill="#1f8a1f"/><rect x="328" y="460" width="1" height="11" fill="#4a80ee"/><rect x="328" y="453" width="1" height="7" fill="#22a6dc"/><rect x="328" y="447" width="1" height="6" fill="#5878e4"/><rect x="329" y="469" width="1" height="3" fill="#1f8a1f"/><rect x="329" y="462" width="1" height="7" fill="#4a80ee"/><rect x="329" y="465" width="1" height="4" fill="#8090a8"/><rect x="329" y="458" width="1" height="4" fill="#c42cf0"/><rect x="329" y="455" width="1" height="3" fill="#c42cf0"/><rect x="330" y="471" width="1" height="1" fill="#1f8a1f"/><rect x="330" y="462" width="1" height="9" fill="#4a80ee"/><rect x="330" y="463" width="1" height="5" fill="#22a6dc"/><rect x="330" y="454" width="1" height="8" fill="#c42cf0"/><rect x="330" y="446" width="1" height="8" fill="#5878e4"/><rect x="331" y="470" width="1" height="2" fill="#1f8a1f"/><rect x="331" y="460" width="1" height="10" fill="#4a80ee"/><rect x="331" y="467" width="1" height="1" fill="#22a6dc"/><rect x="331" y="449" width="1" height="11" fill="#22a6dc"/><rect x="332" y="470" width="1" height="2" fill="#1f8a1f"/><rect x="332" y="461" width="1" height="9" fill="#4a80ee"/><rect x="332" y="457" width="1" height="4" fill="#c42cf0"/><rect x="332" y="454" width="1" height="3" fill="#c42cf0"/><rect x="332" y="452" width="1" height="2" fill="#c42cf0"/><rect x="333" y="471" width="1" height="1" fill="#1f8a1f"/><rect x="333" y="461" width="1" height="10" fill="#4a80ee"/><rect x="333" y="456" width="1" height="5" fill="#c42cf0"/><rect x="333" y="450" width="1" height="6" fill="#22a6dc"/><rect x="333" y="444" width="1" height="6" fill="#5878e4"/><rect x="334" y="471" width="1" height="1" fill="#1f8a1f"/><rect x="334" y="461" width="1" height="10" fill="#4a80ee"/><rect x="334" y="462" width="1" height="4" fill="#22a6dc"/><rect x="334" y="459" width="1" height="2" fill="#5878e4"/><rect x="334" y="454" width="1" height="5" fill="#c42cf0"/><rect x="335" y="471" width="1" height="1" fill="#1f8a1f"/><rect x="335" y="462" width="1" height="9" fill="#4a80ee"/><rect x="335" y="456" width="1" height="6" fill="#22a6dc"/><rect x="336" y="470" width="1" height="2" fill="#1f8a1f"/><rect x="336" y="461" width="1" height="9" fill="#4a80ee"/><rect x="336" y="450" width="1" height="11" fill="#c42cf0"/><rect x="336" y="443" width="1" height="7" fill="#5878e4"/><rect x="337" y="471" width="1" height="1" fill="#1f8a1f"/><rect x="337" y="460" width="1" height="11" fill="#4a80ee"/><rect x="337" y="451" width="1" height="9" fill="#22a6dc"/><rect x="337" y="446" width="1" height="5" fill="#22a6dc"/><rect x="338" y="471" width="1" height="1" fill="#1f8a1f"/><rect x="338" y="462" width="1" height="9" fill="#4a80ee"/><rect x="338" y="468" width="1" height="2" fill="#22a6dc"/><rect x="338" y="448" width="1" height="14" fill="#c42cf0"/><rect x="339" y="471" width="1" height="1" fill="#1f8a1f"/><rect x="339" y="462" width="1" height="9" fill="#4a80ee"/><rect x="339" y="452" width="1" height="10" fill="#c42cf0"/><rect x="340" y="470" width="1" height="2" fill="#1f8a1f"/><rect x="340" y="461" width="1" height="9" fill="#4a80ee"/><rect x="340" y="458" width="1" height="3" fill="#c42cf0"/><rect x="340" y="455" width="1" height="3" fill="#c42cf0"/><rect x="341" y="471" width="1" height="1" fill="#1f8a1f"/><rect x="341" y="461" width="1" height="10" fill="#4a80ee"/><rect x="341" y="461" width="1" height="1" fill="#8090a8"/><rect x="341" y="458" width="1" height="3" fill="#22a6dc"/><rect x="341" y="456" width="1" height="2" fill="#c42cf0"/><rect x="341" y="454" width="1" height="2" fill="#22a6dc"/><rect x="342" y="471" width="1" height="1" fill="#1f8a1f"/><rect x="342" y="462" width="1" height="9" fill="#4a80ee"/><rect x="342" y="456" width="1" height="6" fill="#c42cf0"/><rect x="342" y="452" width="1" height="4" fill="#22a6dc"/><rect x="342" y="446" width="1" height="6" fill="#22a6dc"/><rect x="343" y="469" width="1" height="3" fill="#1f8a1f"/><rect x="343" y="462" width="1" height="7" fill="#4a80ee"/><rect x="343" y="462" width="1" height="4" fill="#22a6dc"/><rect x="343" y="457" width="1" height="5" fill="#22a6dc"/><rect x="343" y="452" width="1" height="5" fill="#22a6dc"/><rect x="343" y="449" width="1" height="3" fill="#c42cf0"/><rect x="344" y="470" width="1" height="2" fill="#1f8a1f"/><rect x="344" y="461" width="1" height="9" fill="#4a80ee"/><rect x="344" y="464" width="1" height="4" fill="#c42cf0"/><rect x="344" y="443" width="1" height="18" fill="#c42cf0"/><rect x="345" y="470" width="1" height="2" fill="#1f8a1f"/><rect x="345" y="462" width="1" height="8" fill="#4a80ee"/><rect x="345" y="464" width="1" height="4" fill="#22a6dc"/><rect x="345" y="445" width="1" height="17" fill="#c42cf0"/><rect x="346" y="470" width="1" height="2" fill="#1f8a1f"/><rect x="346" y="460" width="1" height="10" fill="#4a80ee"/><rect x="346" y="466" width="1" height="1" fill="#22a6dc"/><rect x="346" y="455" width="1" height="5" fill="#c42cf0"/><rect x="346" y="447" width="1" height="8" fill="#22a6dc"/><rect x="347" y="470" width="1" height="2" fill="#1f8a1f"/><rect x="347" y="462" width="1" height="8" fill="#4a80ee"/><rect x="347" y="450" width="1" height="12" fill="#22a6dc"/><rect x="348" y="471" width="1" height="1" fill="#1f8a1f"/><rect x="348" y="460" width="1" height="11" fill="#4a80ee"/><rect x="348" y="466" width="1" height="1" fill="#22a6dc"/><rect x="348" y="454" width="1" height="6" fill="#c42cf0"/><rect x="348" y="448" width="1" height="6" fill="#22a6dc"/><rect x="349" y="469" width="1" height="3" fill="#1f8a1f"/><rect x="349" y="460" width="1" height="9" fill="#4a80ee"/><rect x="349" y="461" width="1" height="7" fill="#c42cf0"/><rect x="349" y="455" width="1" height="5" fill="#22a6dc"/><rect x="349" y="450" width="1" height="5" fill="#c42cf0"/><rect x="350" y="469" width="1" height="3" fill="#1f8a1f"/><rect x="350" y="461" width="1" height="8" fill="#4a80ee"/><rect x="350" y="461" width="1" height="7" fill="#c42cf0"/><rect x="350" y="459" width="1" height="2" fill="#c42cf0"/><rect x="350" y="458" width="1" height="1" fill="#c42cf0"/><rect x="350" y="456" width="1" height="2" fill="#22a6dc"/><rect x="351" y="469" width="1" height="3" fill="#1f8a1f"/><rect x="351" y="461" width="1" height="8" fill="#4a80ee"/><rect x="351" y="457" width="1" height="4" fill="#22a6dc"/><rect x="351" y="448" width="1" height="9" fill="#c42cf0"/><rect x="352" y="470" width="1" height="2" fill="#1f8a1f"/><rect x="352" y="462" width="1" height="8" fill="#4a80ee"/><rect x="352" y="463" width="1" height="3" fill="#22a6dc"/><rect x="352" y="456" width="1" height="6" fill="#22a6dc"/><rect x="352" y="449" width="1" height="7" fill="#22a6dc"/><rect x="353" y="470" width="1" height="2" fill="#1f8a1f"/><rect x="353" y="461" width="1" height="9" fill="#4a80ee"/><rect x="353" y="459" width="1" height="2" fill="#c42cf0"/><rect x="353" y="455" width="1" height="4" fill="#22a6dc"/><rect x="353" y="452" width="1" height="3" fill="#22a6dc"/><rect x="354" y="470" width="1" height="2" fill="#1f8a1f"/><rect x="354" y="462" width="1" height="8" fill="#4a80ee"/><rect x="354" y="468" width="1" height="1" fill="#8090a8"/><rect x="354" y="446" width="1" height="16" fill="#22a6dc"/><rect x="355" y="469" width="1" height="3" fill="#1f8a1f"/><rect x="355" y="462" width="1" height="7" fill="#4a80ee"/><rect x="355" y="467" width="1" height="1" fill="#22a6dc"/><rect x="355" y="459" width="1" height="3" fill="#c42cf0"/><rect x="355" y="457" width="1" height="2" fill="#c42cf0"/><rect x="356" y="470" width="1" height="2" fill="#1f8a1f"/><rect x="356" y="461" width="1" height="9" fill="#4a80ee"/><rect x="356" y="453" width="1" height="8" fill="#22a6dc"/><rect x="357" y="471" width="1" height="1" fill="#1f8a1f"/><rect x="357" y="461" width="1" height="10" fill="#4a80ee"/><rect x="357" y="454" width="1" height="7" fill="#c42cf0"/><rect x="357" y="448" width="1" height="6" fill="#22a6dc"/><rect x="357" y="444" width="1" height="4" fill="#5878e4"/><rect x="358" y="471" width="1" height="1" fill="#1f8a1f"/><rect x="358" y="460" width="1" height="11" fill="#4a80ee"/><rect x="358" y="456" width="1" height="4" fill="#5878e4"/><rect x="358" y="453" width="1" height="3" fill="#22a6dc"/><rect x="358" y="450" width="1" height="3" fill="#22a6dc"/><rect x="359" y="469" width="1" height="3" fill="#1f8a1f"/><rect x="359" y="462" width="1" height="7" fill="#4a80ee"/><rect x="359" y="450" width="1" height="12" fill="#5878e4"/><rect x="360" y="469" width="1" height="3" fill="#1f8a1f"/><rect x="360" y="460" width="1" height="9" fill="#4a80ee"/><rect x="360" y="467" width="1" height="2" fill="#22a6dc"/><rect x="360" y="437" width="1" height="23" fill="#5878e4"/><rect x="361" y="471" width="1" height="1" fill="#1f8a1f"/><rect x="361" y="462" width="1" height="9" fill="#4a80ee"/><rect x="361" y="459" width="1" height="3" fill="#c42cf0"/><rect x="361" y="455" width="1" height="4" fill="#22a6dc"/><rect x="362" y="470" width="1" height="2" fill="#1f8a1f"/><rect x="362" y="462" width="1" height="8" fill="#4a80ee"/><rect x="362" y="465" width="1" height="3" fill="#22a6dc"/><rect x="362" y="458" width="1" height="4" fill="#c42cf0"/><rect x="362" y="455" width="1" height="3" fill="#c42cf0"/><rect x="363" y="470" width="1" height="2" fill="#1f8a1f"/><rect x="363" y="462" width="1" height="8" fill="#4a80ee"/><rect x="363" y="456" width="1" height="6" fill="#22a6dc"/><rect x="363" y="450" width="1" height="6" fill="#22a6dc"/><rect x="364" y="469" width="1" height="3" fill="#1f8a1f"/><rect x="364" y="461" width="1" height="8" fill="#4a80ee"/><rect x="364" y="458" width="1" height="3" fill="#22a6dc"/><rect x="364" y="455" width="1" height="3" fill="#c42cf0"/><rect x="365" y="469" width="1" height="3" fill="#1f8a1f"/><rect x="365" y="461" width="1" height="8" fill="#4a80ee"/><rect x="365" y="455" width="1" height="6" fill="#c42cf0"/><rect x="365" y="451" width="1" height="4" fill="#c42cf0"/><rect x="366" y="470" width="1" height="2" fill="#1f8a1f"/><rect x="366" y="462" width="1" height="8" fill="#4a80ee"/><rect x="366" y="466" width="1" height="4" fill="#c42cf0"/><rect x="366" y="439" width="1" height="23" fill="#c42cf0"/><rect x="367" y="471" width="1" height="1" fill="#1f8a1f"/><rect x="367" y="461" width="1" height="10" fill="#4a80ee"/><rect x="367" y="465" width="1" height="5" fill="#22a6dc"/><rect x="367" y="459" width="1" height="2" fill="#c42cf0"/><rect x="367" y="457" width="1" height="2" fill="#c42cf0"/><rect x="367" y="455" width="1" height="2" fill="#c42cf0"/><rect x="368" y="471" width="1" height="1" fill="#1f8a1f"/><rect x="368" y="461" width="1" height="10" fill="#4a80ee"/><rect x="368" y="466" width="1" height="4" fill="#22a6dc"/><rect x="368" y="458" width="1" height="3" fill="#c42cf0"/><rect x="368" y="455" width="1" height="3" fill="#c42cf0"/><rect x="368" y="448" width="1" height="7" fill="#5878e4"/><rect x="369" y="469" width="1" height="3" fill="#1f8a1f"/><rect x="369" y="462" width="1" height="7" fill="#4a80ee"/><rect x="369" y="465" width="1" height="1" fill="#22a6dc"/><rect x="369" y="442" width="1" height="20" fill="#22a6dc"/><rect x="370" y="471" width="1" height="1" fill="#1f8a1f"/><rect x="370" y="462" width="1" height="9" fill="#4a80ee"/><rect x="370" y="467" width="1" height="1" fill="#c42cf0"/><rect x="370" y="453" width="1" height="9" fill="#c42cf0"/><rect x="371" y="471" width="1" height="1" fill="#1f8a1f"/><rect x="371" y="462" width="1" height="9" fill="#4a80ee"/><rect x="371" y="461" width="1" height="1" fill="#c42cf0"/><rect x="371" y="459" width="1" height="2" fill="#22a6dc"/><rect x="371" y="457" width="1" height="2" fill="#22a6dc"/><rect x="372" y="471" width="1" height="1" fill="#1f8a1f"/><rect x="372" y="461" width="1" height="10" fill="#4a80ee"/><rect x="372" y="453" width="1" height="8" fill="#5878e4"/><rect x="372" y="446" width="1" height="7" fill="#c42cf0"/><rect x="372" y="436" width="1" height="10" fill="#22a6dc"/><rect x="373" y="471" width="1" height="1" fill="#1f8a1f"/><rect x="373" y="461" width="1" height="10" fill="#4a80ee"/><rect x="373" y="468" width="1" height="2" fill="#22a6dc"/><rect x="373" y="456" width="1" height="5" fill="#5878e4"/><rect x="373" y="450" width="1" height="6" fill="#22a6dc"/><rect x="374" y="470" width="1" height="2" fill="#1f8a1f"/><rect x="374" y="462" width="1" height="8" fill="#4a80ee"/><rect x="374" y="457" width="1" height="5" fill="#22a6dc"/><rect x="374" y="451" width="1" height="6" fill="#5878e4"/><rect x="375" y="471" width="1" height="1" fill="#1f8a1f"/><rect x="375" y="462" width="1" height="9" fill="#4a80ee"/><rect x="375" y="458" width="1" height="4" fill="#5878e4"/><rect x="375" y="454" width="1" height="4" fill="#22a6dc"/><rect x="375" y="437" width="1" height="17" fill="#5878e4"/><rect x="376" y="470" width="1" height="2" fill="#1f8a1f"/><rect x="376" y="460" width="1" height="10" fill="#4a80ee"/><rect x="376" y="464" width="1" height="6" fill="#c42cf0"/><rect x="376" y="449" width="1" height="11" fill="#22a6dc"/><rect x="377" y="471" width="1" height="1" fill="#1f8a1f"/><rect x="377" y="461" width="1" height="10" fill="#4a80ee"/><rect x="377" y="458" width="1" height="3" fill="#22a6dc"/><rect x="377" y="455" width="1" height="3" fill="#22a6dc"/><rect x="377" y="452" width="1" height="3" fill="#c42cf0"/><rect x="378" y="469" width="1" height="3" fill="#1f8a1f"/><rect x="378" y="461" width="1" height="8" fill="#4a80ee"/><rect x="378" y="465" width="1" height="2" fill="#22a6dc"/><rect x="378" y="455" width="1" height="6" fill="#c42cf0"/><rect x="378" y="450" width="1" height="5" fill="#c42cf0"/><rect x="379" y="471" width="1" height="1" fill="#1f8a1f"/><rect x="379" y="460" width="1" height="11" fill="#4a80ee"/><rect x="379" y="457" width="1" height="3" fill="#22a6dc"/><rect x="379" y="454" width="1" height="3" fill="#22a6dc"/><rect x="379" y="451" width="1" height="3" fill="#c42cf0"/><rect x="380" y="469" width="1" height="3" fill="#1f8a1f"/><rect x="380" y="462" width="1" height="7" fill="#4a80ee"/><rect x="380" y="467" width="1" height="1" fill="#c42cf0"/><rect x="380" y="460" width="1" height="2" fill="#22a6dc"/><rect x="380" y="458" width="1" height="2" fill="#22a6dc"/><rect x="380" y="455" width="1" height="3" fill="#c42cf0"/><rect x="381" y="471" width="1" height="1" fill="#1f8a1f"/><rect x="381" y="462" width="1" height="9" fill="#4a80ee"/><rect x="381" y="463" width="1" height="4" fill="#22a6dc"/><rect x="381" y="457" width="1" height="5" fill="#c42cf0"/><rect x="381" y="452" width="1" height="5" fill="#22a6dc"/><rect x="382" y="470" width="1" height="2" fill="#1f8a1f"/><rect x="382" y="462" width="1" height="8" fill="#4a80ee"/><rect x="382" y="456" width="1" height="6" fill="#c42cf0"/><rect x="382" y="451" width="1" height="5" fill="#22a6dc"/><rect x="383" y="471" width="1" height="1" fill="#1f8a1f"/><rect x="383" y="462" width="1" height="9" fill="#4a80ee"/><rect x="383" y="466" width="1" height="2" fill="#8090a8"/><rect x="383" y="456" width="1" height="6" fill="#22a6dc"/><rect x="383" y="450" width="1" height="6" fill="#22a6dc"/><rect x="384" y="471" width="1" height="1" fill="#1f8a1f"/><rect x="384" y="461" width="1" height="10" fill="#4a80ee"/><rect x="384" y="460" width="1" height="1" fill="#c42cf0"/><rect x="384" y="458" width="1" height="2" fill="#c42cf0"/><rect x="384" y="457" width="1" height="1" fill="#22a6dc"/><rect x="385" y="470" width="1" height="2" fill="#1f8a1f"/><rect x="385" y="462" width="1" height="8" fill="#4a80ee"/><rect x="385" y="463" width="1" height="1" fill="#c42cf0"/><rect x="385" y="455" width="1" height="7" fill="#22a6dc"/><rect x="385" y="449" width="1" height="6" fill="#22a6dc"/><rect x="385" y="445" width="1" height="4" fill="#5878e4"/><rect x="386" y="470" width="1" height="2" fill="#1f8a1f"/><rect x="386" y="462" width="1" height="8" fill="#4a80ee"/><rect x="386" y="463" width="1" height="6" fill="#22a6dc"/><rect x="386" y="454" width="1" height="8" fill="#c42cf0"/><rect x="387" y="471" width="1" height="1" fill="#1f8a1f"/><rect x="387" y="461" width="1" height="10" fill="#4a80ee"/><rect x="387" y="461" width="1" height="7" fill="#8090a8"/><rect x="387" y="457" width="1" height="4" fill="#22a6dc"/><rect x="387" y="454" width="1" height="3" fill="#c42cf0"/><rect x="388" y="471" width="1" height="1" fill="#1f8a1f"/><rect x="388" y="461" width="1" height="10" fill="#4a80ee"/><rect x="388" y="468" width="1" height="1" fill="#22a6dc"/><rect x="388" y="452" width="1" height="9" fill="#22a6dc"/><rect x="389" y="471" width="1" height="1" fill="#1f8a1f"/><rect x="389" y="461" width="1" height="10" fill="#4a80ee"/><rect x="389" y="456" width="1" height="5" fill="#22a6dc"/><rect x="389" y="451" width="1" height="5" fill="#5878e4"/><rect x="389" y="446" width="1" height="5" fill="#5878e4"/><rect x="390" y="470" width="1" height="2" fill="#1f8a1f"/><rect x="390" y="461" width="1" height="9" fill="#4a80ee"/><rect x="390" y="465" width="1" height="1" fill="#22a6dc"/><rect x="390" y="457" width="1" height="4" fill="#c42cf0"/><rect x="390" y="452" width="1" height="5" fill="#22a6dc"/><rect x="390" y="441" width="1" height="11" fill="#22a6dc"/><rect x="391" y="471" width="1" height="1" fill="#1f8a1f"/><rect x="391" y="462" width="1" height="9" fill="#4a80ee"/><rect x="391" y="468" width="1" height="1" fill="#22a6dc"/><rect x="391" y="455" width="1" height="7" fill="#c42cf0"/><rect x="391" y="448" width="1" height="7" fill="#c42cf0"/><rect x="391" y="443" width="1" height="5" fill="#c42cf0"/><rect x="392" y="471" width="1" height="1" fill="#1f8a1f"/><rect x="392" y="460" width="1" height="11" fill="#4a80ee"/><rect x="392" y="458" width="1" height="2" fill="#22a6dc"/><rect x="392" y="455" width="1" height="3" fill="#c42cf0"/><rect x="392" y="453" width="1" height="2" fill="#22a6dc"/><rect x="393" y="470" width="1" height="2" fill="#1f8a1f"/><rect x="393" y="461" width="1" height="9" fill="#4a80ee"/><rect x="393" y="469" width="1" height="1" fill="#8090a8"/><rect x="393" y="446" width="1" height="15" fill="#c42cf0"/><rect x="393" y="436" width="1" height="10" fill="#5878e4"/><rect x="394" y="470" width="1" height="2" fill="#1f8a1f"/><rect x="394" y="461" width="1" height="9" fill="#4a80ee"/><rect x="394" y="466" width="1" height="1" fill="#22a6dc"/><rect x="394" y="458" width="1" height="3" fill="#c42cf0"/><rect x="394" y="454" width="1" height="4" fill="#c42cf0"/><rect x="395" y="470" width="1" height="2" fill="#1f8a1f"/><rect x="395" y="460" width="1" height="10" fill="#4a80ee"/><rect x="395" y="452" width="1" height="8" fill="#22a6dc"/><rect x="396" y="470" width="1" height="2" fill="#1f8a1f"/><rect x="396" y="461" width="1" height="9" fill="#4a80ee"/><rect x="396" y="456" width="1" height="5" fill="#22a6dc"/><rect x="396" y="454" width="1" height="2" fill="#5878e4"/><rect x="397" y="470" width="1" height="2" fill="#1f8a1f"/><rect x="397" y="460" width="1" height="10" fill="#4a80ee"/><rect x="397" y="458" width="1" height="2" fill="#c42cf0"/><rect x="397" y="456" width="1" height="2" fill="#5878e4"/><rect x="397" y="453" width="1" height="3" fill="#c42cf0"/><rect x="398" y="470" width="1" height="2" fill="#1f8a1f"/><rect x="398" y="461" width="1" height="9" fill="#4a80ee"/><rect x="398" y="462" width="1" height="8" fill="#c42cf0"/><rect x="398" y="459" width="1" height="2" fill="#5878e4"/><rect x="398" y="455" width="1" height="4" fill="#5878e4"/><rect x="398" y="452" width="1" height="3" fill="#c42cf0"/><rect x="399" y="469" width="1" height="3" fill="#1f8a1f"/><rect x="399" y="461" width="1" height="8" fill="#4a80ee"/><rect x="399" y="457" width="1" height="4" fill="#22a6dc"/><rect x="399" y="453" width="1" height="4" fill="#22a6dc"/><rect x="399" y="449" width="1" height="4" fill="#22a6dc"/><rect x="400" y="470" width="1" height="2" fill="#1f8a1f"/><rect x="400" y="462" width="1" height="8" fill="#4a80ee"/><rect x="400" y="455" width="1" height="7" fill="#c42cf0"/><rect x="400" y="452" width="1" height="3" fill="#22a6dc"/><rect x="400" y="447" width="1" height="5" fill="#c42cf0"/><rect x="401" y="470" width="1" height="2" fill="#1f8a1f"/><rect x="401" y="461" width="1" height="9" fill="#4a80ee"/><rect x="401" y="451" width="1" height="10" fill="#22a6dc"/><rect x="402" y="471" width="1" height="1" fill="#1f8a1f"/><rect x="402" y="461" width="1" height="10" fill="#4a80ee"/><rect x="402" y="462" width="1" height="1" fill="#22a6dc"/><rect x="402" y="455" width="1" height="6" fill="#c42cf0"/><rect x="402" y="433" width="1" height="22" fill="#22a6dc"/><rect x="403" y="470" width="1" height="2" fill="#1f8a1f"/><rect x="403" y="461" width="1" height="9" fill="#4a80ee"/><rect x="403" y="466" width="1" height="4" fill="#22a6dc"/><rect x="403" y="453" width="1" height="8" fill="#c42cf0"/><rect x="403" y="448" width="1" height="5" fill="#c42cf0"/><rect x="403" y="440" width="1" height="8" fill="#c42cf0"/><rect x="404" y="471" width="1" height="1" fill="#1f8a1f"/><rect x="404" y="462" width="1" height="9" fill="#4a80ee"/><rect x="404" y="456" width="1" height="6" fill="#c42cf0"/><rect x="404" y="453" width="1" height="3" fill="#22a6dc"/><rect x="405" y="470" width="1" height="2" fill="#1f8a1f"/><rect x="405" y="461" width="1" height="9" fill="#4a80ee"/><rect x="405" y="469" width="1" height="1" fill="#22a6dc"/><rect x="405" y="457" width="1" height="4" fill="#22a6dc"/><rect x="405" y="453" width="1" height="4" fill="#5878e4"/><rect x="405" y="438" width="1" height="15" fill="#22a6dc"/><rect x="406" y="470" width="1" height="2" fill="#1f8a1f"/><rect x="406" y="462" width="1" height="8" fill="#4a80ee"/><rect x="406" y="460" width="1" height="2" fill="#c42cf0"/><rect x="406" y="457" width="1" height="3" fill="#c42cf0"/><rect x="406" y="454" width="1" height="3" fill="#22a6dc"/><rect x="407" y="469" width="1" height="3" fill="#1f8a1f"/><rect x="407" y="460" width="1" height="9" fill="#4a80ee"/><rect x="407" y="456" width="1" height="4" fill="#c42cf0"/><rect x="407" y="449" width="1" height="7" fill="#c42cf0"/><rect x="408" y="471" width="1" height="1" fill="#1f8a1f"/><rect x="408" y="460" width="1" height="11" fill="#4a80ee"/><rect x="408" y="460" width="1" height="5" fill="#22a6dc"/><rect x="408" y="456" width="1" height="4" fill="#c42cf0"/><rect x="408" y="446" width="1" height="10" fill="#c42cf0"/><rect x="409" y="471" width="1" height="1" fill="#1f8a1f"/><rect x="409" y="461" width="1" height="10" fill="#4a80ee"/><rect x="409" y="453" width="1" height="8" fill="#c42cf0"/><rect x="410" y="470" width="1" height="2" fill="#1f8a1f"/><rect x="410" y="460" width="1" height="10" fill="#4a80ee"/><rect x="410" y="461" width="1" height="2" fill="#c42cf0"/><rect x="410" y="452" width="1" height="8" fill="#c42cf0"/><rect x="410" y="446" width="1" height="6" fill="#c42cf0"/><rect x="411" y="470" width="1" height="2" fill="#1f8a1f"/><rect x="411" y="460" width="1" height="10" fill="#4a80ee"/><rect x="411" y="463" width="1" height="6" fill="#8090a8"/><rect x="411" y="435" width="1" height="25" fill="#22a6dc"/><rect x="412" y="471" width="1" height="1" fill="#1f8a1f"/><rect x="412" y="462" width="1" height="9" fill="#4a80ee"/><rect x="412" y="463" width="1" height="5" fill="#22a6dc"/><rect x="412" y="458" width="1" height="4" fill="#c42cf0"/><rect x="412" y="453" width="1" height="5" fill="#c42cf0"/><rect x="413" y="471" width="1" height="1" fill="#1f8a1f"/><rect x="413" y="461" width="1" height="10" fill="#4a80ee"/><rect x="413" y="470" width="1" height="1" fill="#8090a8"/><rect x="413" y="456" width="1" height="5" fill="#c42cf0"/><rect x="414" y="469" width="1" height="3" fill="#1f8a1f"/><rect x="414" y="462" width="1" height="7" fill="#4a80ee"/><rect x="414" y="464" width="1" height="2" fill="#c42cf0"/><rect x="414" y="453" width="1" height="9" fill="#5878e4"/><rect x="414" y="447" width="1" height="6" fill="#22a6dc"/><rect x="414" y="428" width="1" height="19" fill="#22a6dc"/><rect x="415" y="471" width="1" height="1" fill="#1f8a1f"/><rect x="415" y="461" width="1" height="10" fill="#4a80ee"/><rect x="415" y="467" width="1" height="2" fill="#c42cf0"/><rect x="415" y="457" width="1" height="4" fill="#c42cf0"/><rect x="415" y="453" width="1" height="4" fill="#22a6dc"/><rect x="416" y="469" width="1" height="3" fill="#1f8a1f"/><rect x="416" y="462" width="1" height="7" fill="#4a80ee"/><rect x="416" y="454" width="1" height="8" fill="#c42cf0"/><rect x="416" y="447" width="1" height="7" fill="#22a6dc"/><rect x="417" y="470" width="1" height="2" fill="#1f8a1f"/><rect x="417" y="462" width="1" height="8" fill="#4a80ee"/><rect x="417" y="453" width="1" height="9" fill="#22a6dc"/><rect x="417" y="441" width="1" height="12" fill="#c42cf0"/><rect x="417" y="432" width="1" height="9" fill="#22a6dc"/><rect x="418" y="470" width="1" height="2" fill="#1f8a1f"/><rect x="418" y="462" width="1" height="8" fill="#4a80ee"/><rect x="418" y="469" width="1" height="1" fill="#c42cf0"/><rect x="418" y="459" width="1" height="3" fill="#5878e4"/><rect x="418" y="457" width="1" height="2" fill="#c42cf0"/><rect x="418" y="454" width="1" height="3" fill="#c42cf0"/><rect x="419" y="470" width="1" height="2" fill="#1f8a1f"/><rect x="419" y="461" width="1" height="9" fill="#4a80ee"/><rect x="419" y="461" width="1" height="4" fill="#c42cf0"/><rect x="419" y="458" width="1" height="3" fill="#c42cf0"/><rect x="419" y="455" width="1" height="3" fill="#c42cf0"/><rect x="420" y="470" width="1" height="2" fill="#1f8a1f"/><rect x="420" y="460" width="1" height="10" fill="#4a80ee"/><rect x="420" y="455" width="1" height="5" fill="#22a6dc"/><rect x="420" y="452" width="1" height="3" fill="#c42cf0"/><rect x="420" y="434" width="1" height="18" fill="#5878e4"/><rect x="421" y="470" width="1" height="2" fill="#1f8a1f"/><rect x="421" y="462" width="1" height="8" fill="#4a80ee"/><rect x="421" y="459" width="1" height="3" fill="#c42cf0"/><rect x="421" y="457" width="1" height="2" fill="#5878e4"/><rect x="421" y="455" width="1" height="2" fill="#22a6dc"/><rect x="422" y="471" width="1" height="1" fill="#1f8a1f"/><rect x="422" y="461" width="1" height="10" fill="#4a80ee"/><rect x="422" y="452" width="1" height="9" fill="#5878e4"/><rect x="422" y="444" width="1" height="8" fill="#5878e4"/><rect x="423" y="471" width="1" height="1" fill="#1f8a1f"/><rect x="423" y="462" width="1" height="9" fill="#4a80ee"/><rect x="423" y="448" width="1" height="14" fill="#c42cf0"/><rect x="423" y="432" width="1" height="16" fill="#5878e4"/><rect x="424" y="471" width="1" height="1" fill="#1f8a1f"/><rect x="424" y="462" width="1" height="9" fill="#4a80ee"/><rect x="424" y="452" width="1" height="10" fill="#c42cf0"/><rect x="424" y="444" width="1" height="8" fill="#c42cf0"/><rect x="425" y="471" width="1" height="1" fill="#1f8a1f"/><rect x="425" y="460" width="1" height="11" fill="#4a80ee"/><rect x="425" y="467" width="1" height="4" fill="#22a6dc"/><rect x="425" y="446" width="1" height="14" fill="#c42cf0"/><rect x="426" y="471" width="1" height="1" fill="#1f8a1f"/><rect x="426" y="462" width="1" height="9" fill="#4a80ee"/><rect x="426" y="450" width="1" height="12" fill="#c42cf0"/><rect x="426" y="439" width="1" height="11" fill="#c42cf0"/><rect x="427" y="470" width="1" height="2" fill="#1f8a1f"/><rect x="427" y="461" width="1" height="9" fill="#4a80ee"/><rect x="427" y="450" width="1" height="11" fill="#22a6dc"/><rect x="427" y="440" width="1" height="10" fill="#5878e4"/><rect x="428" y="469" width="1" height="3" fill="#1f8a1f"/><rect x="428" y="461" width="1" height="8" fill="#4a80ee"/><rect x="428" y="456" width="1" height="5" fill="#5878e4"/><rect x="428" y="449" width="1" height="7" fill="#c42cf0"/><rect x="428" y="446" width="1" height="3" fill="#22a6dc"/><rect x="429" y="470" width="1" height="2" fill="#1f8a1f"/><rect x="429" y="460" width="1" height="10" fill="#4a80ee"/><rect x="429" y="456" width="1" height="4" fill="#c42cf0"/><rect x="429" y="453" width="1" height="3" fill="#c42cf0"/><rect x="429" y="428" width="1" height="25" fill="#22a6dc"/><rect x="430" y="471" width="1" height="1" fill="#1f8a1f"/><rect x="430" y="462" width="1" height="9" fill="#4a80ee"/><rect x="430" y="453" width="1" height="9" fill="#c42cf0"/><rect x="430" y="444" width="1" height="9" fill="#22a6dc"/><rect x="431" y="471" width="1" height="1" fill="#1f8a1f"/><rect x="431" y="461" width="1" height="10" fill="#4a80ee"/><rect x="431" y="463" width="1" height="4" fill="#22a6dc"/><rect x="431" y="455" width="1" height="6" fill="#c42cf0"/><rect x="431" y="450" width="1" height="5" fill="#c42cf0"/><rect x="432" y="471" width="1" height="1" fill="#1f8a1f"/><rect x="432" y="462" width="1" height="9" fill="#4a80ee"/><rect x="432" y="459" width="1" height="3" fill="#5878e4"/><rect x="432" y="454" width="1" height="5" fill="#c42cf0"/><rect x="432" y="433" width="1" height="21" fill="#22a6dc"/><rect x="433" y="471" width="1" height="1" fill="#1f8a1f"/><rect x="433" y="461" width="1" height="10" fill="#4a80ee"/><rect x="433" y="463" width="1" height="1" fill="#c42cf0"/><rect x="433" y="457" width="1" height="4" fill="#c42cf0"/><rect x="433" y="453" width="1" height="4" fill="#22a6dc"/><rect x="433" y="448" width="1" height="5" fill="#5878e4"/><rect x="434" y="471" width="1" height="1" fill="#1f8a1f"/><rect x="434" y="460" width="1" height="11" fill="#4a80ee"/><rect x="434" y="464" width="1" height="5" fill="#22a6dc"/><rect x="434" y="455" width="1" height="5" fill="#22a6dc"/><rect x="434" y="449" width="1" height="6" fill="#c42cf0"/><rect x="435" y="471" width="1" height="1" fill="#1f8a1f"/><rect x="435" y="462" width="1" height="9" fill="#4a80ee"/><rect x="435" y="457" width="1" height="5" fill="#5878e4"/><rect x="435" y="450" width="1" height="7" fill="#22a6dc"/><rect x="435" y="447" width="1" height="3" fill="#22a6dc"/><rect x="436" y="471" width="1" height="1" fill="#1f8a1f"/><rect x="436" y="462" width="1" height="9" fill="#4a80ee"/><rect x="436" y="465" width="1" height="6" fill="#22a6dc"/><rect x="436" y="454" width="1" height="8" fill="#5878e4"/><rect x="436" y="445" width="1" height="9" fill="#22a6dc"/><rect x="436" y="438" width="1" height="7" fill="#c42cf0"/><rect x="437" y="471" width="1" height="1" fill="#1f8a1f"/><rect x="437" y="461" width="1" height="10" fill="#4a80ee"/><rect x="437" y="459" width="1" height="2" fill="#5878e4"/><rect x="437" y="458" width="1" height="1" fill="#22a6dc"/><rect x="437" y="456" width="1" height="2" fill="#c42cf0"/><rect x="438" y="470" width="1" height="2" fill="#1f8a1f"/><rect x="438" y="461" width="1" height="9" fill="#4a80ee"/><rect x="438" y="468" width="1" height="2" fill="#22a6dc"/><rect x="438" y="457" width="1" height="4" fill="#22a6dc"/><rect x="438" y="451" width="1" height="6" fill="#5878e4"/><rect x="438" y="427" width="1" height="24" fill="#22a6dc"/><rect x="439" y="471" width="1" height="1" fill="#1f8a1f"/><rect x="439" y="461" width="1" height="10" fill="#4a80ee"/><rect x="439" y="467" width="1" height="2" fill="#22a6dc"/><rect x="439" y="455" width="1" height="6" fill="#22a6dc"/><rect x="439" y="450" width="1" height="5" fill="#c42cf0"/><rect x="440" y="470" width="1" height="2" fill="#1f8a1f"/><rect x="440" y="462" width="1" height="8" fill="#4a80ee"/><rect x="440" y="455" width="1" height="7" fill="#c42cf0"/><rect x="440" y="450" width="1" height="5" fill="#22a6dc"/><rect x="440" y="446" width="1" height="4" fill="#22a6dc"/><rect x="441" y="470" width="1" height="2" fill="#1f8a1f"/><rect x="441" y="461" width="1" height="9" fill="#4a80ee"/><rect x="441" y="454" width="1" height="7" fill="#c42cf0"/><rect x="441" y="441" width="1" height="13" fill="#c42cf0"/><rect x="442" y="469" width="1" height="3" fill="#1f8a1f"/><rect x="442" y="460" width="1" height="9" fill="#4a80ee"/><rect x="442" y="452" width="1" height="8" fill="#22a6dc"/><rect x="442" y="445" width="1" height="7" fill="#c42cf0"/><rect x="443" y="469" width="1" height="3" fill="#1f8a1f"/><rect x="443" y="461" width="1" height="8" fill="#4a80ee"/><rect x="443" y="453" width="1" height="8" fill="#5878e4"/><rect x="443" y="443" width="1" height="10" fill="#c42cf0"/><rect x="444" y="470" width="1" height="2" fill="#1f8a1f"/><rect x="444" y="460" width="1" height="10" fill="#4a80ee"/><rect x="444" y="463" width="1" height="6" fill="#22a6dc"/><rect x="444" y="455" width="1" height="5" fill="#c42cf0"/><rect x="444" y="450" width="1" height="5" fill="#c42cf0"/><rect x="444" y="446" width="1" height="4" fill="#22a6dc"/><rect x="444" y="436" width="1" height="10" fill="#5878e4"/><rect x="445" y="471" width="1" height="1" fill="#1f8a1f"/><rect x="445" y="461" width="1" height="10" fill="#4a80ee"/><rect x="445" y="466" width="1" height="3" fill="#22a6dc"/><rect x="445" y="451" width="1" height="10" fill="#c42cf0"/><rect x="445" y="442" width="1" height="9" fill="#c42cf0"/><rect x="446" y="470" width="1" height="2" fill="#1f8a1f"/><rect x="446" y="461" width="1" height="9" fill="#4a80ee"/><rect x="446" y="468" width="1" height="2" fill="#c42cf0"/><rect x="446" y="447" width="1" height="14" fill="#22a6dc"/><rect x="447" y="470" width="1" height="2" fill="#1f8a1f"/><rect x="447" y="462" width="1" height="8" fill="#4a80ee"/><rect x="447" y="452" width="1" height="10" fill="#22a6dc"/><rect x="447" y="443" width="1" height="9" fill="#c42cf0"/><rect x="448" y="469" width="1" height="3" fill="#1f8a1f"/><rect x="448" y="462" width="1" height="7" fill="#4a80ee"/><rect x="448" y="468" width="1" height="1" fill="#22a6dc"/><rect x="448" y="457" width="1" height="5" fill="#5878e4"/><rect x="448" y="452" width="1" height="5" fill="#c42cf0"/><rect x="449" y="470" width="1" height="2" fill="#1f8a1f"/><rect x="449" y="460" width="1" height="10" fill="#4a80ee"/><rect x="449" y="450" width="1" height="10" fill="#5878e4"/><rect x="449" y="441" width="1" height="9" fill="#c42cf0"/><rect x="450" y="469" width="1" height="3" fill="#1f8a1f"/><rect x="450" y="461" width="1" height="8" fill="#4a80ee"/><rect x="450" y="453" width="1" height="8" fill="#c42cf0"/><rect x="450" y="442" width="1" height="11" fill="#5878e4"/><rect x="450" y="426" width="1" height="16" fill="#22a6dc"/><rect x="451" y="469" width="1" height="3" fill="#1f8a1f"/><rect x="451" y="462" width="1" height="7" fill="#4a80ee"/><rect x="451" y="457" width="1" height="5" fill="#c42cf0"/><rect x="451" y="448" width="1" height="9" fill="#5878e4"/><rect x="452" y="470" width="1" height="2" fill="#1f8a1f"/><rect x="452" y="462" width="1" height="8" fill="#4a80ee"/><rect x="452" y="456" width="1" height="6" fill="#c42cf0"/><rect x="452" y="447" width="1" height="9" fill="#c42cf0"/><rect x="453" y="469" width="1" height="3" fill="#1f8a1f"/><rect x="453" y="460" width="1" height="9" fill="#4a80ee"/><rect x="453" y="429" width="1" height="31" fill="#c42cf0"/><rect x="454" y="470" width="1" height="2" fill="#1f8a1f"/><rect x="454" y="461" width="1" height="9" fill="#4a80ee"/><rect x="454" y="439" width="1" height="22" fill="#22a6dc"/><rect x="455" y="469" width="1" height="3" fill="#1f8a1f"/><rect x="455" y="461" width="1" height="8" fill="#4a80ee"/><rect x="455" y="449" width="1" height="12" fill="#5878e4"/><rect x="456" y="471" width="1" height="1" fill="#1f8a1f"/><rect x="456" y="461" width="1" height="10" fill="#4a80ee"/><rect x="456" y="470" width="1" height="1" fill="#c42cf0"/><rect x="456" y="456" width="1" height="5" fill="#22a6dc"/><rect x="456" y="448" width="1" height="8" fill="#c42cf0"/><rect x="456" y="439" width="1" height="9" fill="#22a6dc"/><rect x="457" y="470" width="1" height="2" fill="#1f8a1f"/><rect x="457" y="460" width="1" height="10" fill="#4a80ee"/><rect x="457" y="468" width="1" height="1" fill="#22a6dc"/><rect x="457" y="451" width="1" height="9" fill="#22a6dc"/><rect x="457" y="442" width="1" height="9" fill="#22a6dc"/><rect x="458" y="470" width="1" height="2" fill="#1f8a1f"/><rect x="458" y="460" width="1" height="10" fill="#4a80ee"/><rect x="458" y="468" width="1" height="2" fill="#c42cf0"/><rect x="458" y="457" width="1" height="3" fill="#c42cf0"/><rect x="458" y="453" width="1" height="4" fill="#22a6dc"/><rect x="458" y="448" width="1" height="5" fill="#c42cf0"/><rect x="459" y="471" width="1" height="1" fill="#1f8a1f"/><rect x="459" y="462" width="1" height="9" fill="#4a80ee"/><rect x="459" y="454" width="1" height="8" fill="#22a6dc"/><rect x="459" y="446" width="1" height="8" fill="#22a6dc"/><rect x="459" y="432" width="1" height="14" fill="#5878e4"/><rect x="460" y="470" width="1" height="2" fill="#1f8a1f"/><rect x="460" y="462" width="1" height="8" fill="#4a80ee"/><rect x="460" y="462" width="1" height="1" fill="#22a6dc"/><rect x="460" y="457" width="1" height="5" fill="#c42cf0"/><rect x="460" y="454" width="1" height="3" fill="#5878e4"/><rect x="460" y="451" width="1" height="3" fill="#c42cf0"/><rect x="461" y="470" width="1" height="2" fill="#1f8a1f"/><rect x="461" y="461" width="1" height="9" fill="#4a80ee"/><rect x="461" y="462" width="1" height="2" fill="#8090a8"/><rect x="461" y="446" width="1" height="15" fill="#22a6dc"/><rect x="462" y="471" width="1" height="1" fill="#1f8a1f"/><rect x="462" y="460" width="1" height="11" fill="#4a80ee"/><rect x="462" y="467" width="1" height="4" fill="#22a6dc"/><rect x="462" y="451" width="1" height="9" fill="#22a6dc"/><rect x="462" y="441" width="1" height="10" fill="#c42cf0"/><rect x="462" y="424" width="1" height="17" fill="#5878e4"/><rect x="463" y="470" width="1" height="2" fill="#1f8a1f"/><rect x="463" y="461" width="1" height="9" fill="#4a80ee"/><rect x="463" y="467" width="1" height="3" fill="#22a6dc"/><rect x="463" y="451" width="1" height="10" fill="#22a6dc"/><rect x="463" y="443" width="1" height="8" fill="#c42cf0"/><rect x="464" y="471" width="1" height="1" fill="#1f8a1f"/><rect x="464" y="462" width="1" height="9" fill="#4a80ee"/><rect x="464" y="455" width="1" height="7" fill="#c42cf0"/><rect x="465" y="470" width="1" height="2" fill="#1f8a1f"/><rect x="465" y="462" width="1" height="8" fill="#4a80ee"/><rect x="465" y="444" width="1" height="18" fill="#c42cf0"/><rect x="465" y="422" width="1" height="22" fill="#22a6dc"/><rect x="466" y="469" width="1" height="3" fill="#1f8a1f"/><rect x="466" y="460" width="1" height="9" fill="#4a80ee"/><rect x="466" y="438" width="1" height="22" fill="#22a6dc"/><rect x="467" y="471" width="1" height="1" fill="#1f8a1f"/><rect x="467" y="462" width="1" height="9" fill="#4a80ee"/><rect x="467" y="447" width="1" height="15" fill="#22a6dc"/><rect x="468" y="470" width="1" height="2" fill="#1f8a1f"/><rect x="468" y="460" width="1" height="10" fill="#4a80ee"/><rect x="468" y="461" width="1" height="4" fill="#22a6dc"/><rect x="468" y="454" width="1" height="6" fill="#22a6dc"/><rect x="468" y="446" width="1" height="8" fill="#c42cf0"/><rect x="468" y="432" width="1" height="14" fill="#5878e4"/><rect x="469" y="471" width="1" height="1" fill="#1f8a1f"/><rect x="469" y="460" width="1" height="11" fill="#4a80ee"/><rect x="469" y="457" width="1" height="3" fill="#c42cf0"/><rect x="469" y="451" width="1" height="6" fill="#22a6dc"/><rect x="469" y="447" width="1" height="4" fill="#c42cf0"/><rect x="470" y="471" width="1" height="1" fill="#1f8a1f"/><rect x="470" y="462" width="1" height="9" fill="#4a80ee"/><rect x="470" y="456" width="1" height="6" fill="#c42cf0"/><rect x="470" y="450" width="1" height="6" fill="#22a6dc"/><rect x="471" y="471" width="1" height="1" fill="#1f8a1f"/><rect x="471" y="461" width="1" height="10" fill="#4a80ee"/><rect x="471" y="464" width="1" height="3" fill="#c42cf0"/><rect x="471" y="454" width="1" height="7" fill="#22a6dc"/><rect x="471" y="442" width="1" height="12" fill="#22a6dc"/><rect x="471" y="429" width="1" height="13" fill="#22a6dc"/><rect x="472" y="469" width="1" height="3" fill="#1f8a1f"/><rect x="472" y="462" width="1" height="7" fill="#4a80ee"/><rect x="472" y="464" width="1" height="2" fill="#c42cf0"/><rect x="472" y="451" width="1" height="11" fill="#c42cf0"/><rect x="472" y="442" width="1" height="9" fill="#c42cf0"/><rect x="472" y="432" width="1" height="10" fill="#c42cf0"/><rect x="473" y="470" width="1" height="2" fill="#1f8a1f"/><rect x="473" y="460" width="1" height="10" fill="#4a80ee"/><rect x="473" y="450" width="1" height="10" fill="#22a6dc"/><rect x="473" y="440" width="1" height="10" fill="#c42cf0"/><rect x="474" y="470" width="1" height="2" fill="#1f8a1f"/><rect x="474" y="461" width="1" height="9" fill="#4a80ee"/><rect x="474" y="454" width="1" height="7" fill="#c42cf0"/><rect x="474" y="447" width="1" height="7" fill="#22a6dc"/><rect x="475" y="471" width="1" height="1" fill="#1f8a1f"/><rect x="475" y="461" width="1" height="10" fill="#4a80ee"/><rect x="475" y="464" width="1" height="3" fill="#c42cf0"/><rect x="475" y="450" width="1" height="11" fill="#5878e4"/><rect x="476" y="469" width="1" height="3" fill="#1f8a1f"/><rect x="476" y="461" width="1" height="8" fill="#4a80ee"/><rect x="476" y="441" width="1" height="20" fill="#22a6dc"/><rect x="477" y="470" width="1" height="2" fill="#1f8a1f"/><rect x="477" y="462" width="1" height="8" fill="#4a80ee"/><rect x="477" y="451" width="1" height="11" fill="#22a6dc"/><rect x="477" y="442" width="1" height="9" fill="#c42cf0"/><rect x="478" y="470" width="1" height="2" fill="#1f8a1f"/><rect x="478" y="460" width="1" height="10" fill="#4a80ee"/><rect x="478" y="454" width="1" height="6" fill="#22a6dc"/><rect x="478" y="447" width="1" height="7" fill="#c42cf0"/><rect x="478" y="444" width="1" height="3" fill="#c42cf0"/><rect x="479" y="471" width="1" height="1" fill="#1f8a1f"/><rect x="479" y="461" width="1" height="10" fill="#4a80ee"/><rect x="479" y="462" width="1" height="4" fill="#22a6dc"/><rect x="479" y="457" width="1" height="4" fill="#c42cf0"/><rect x="479" y="453" width="1" height="4" fill="#22a6dc"/><rect x="480" y="469" width="1" height="3" fill="#1f8a1f"/><rect x="480" y="461" width="1" height="8" fill="#4a80ee"/><rect x="480" y="449" width="1" height="12" fill="#c42cf0"/><rect x="480" y="440" width="1" height="9" fill="#22a6dc"/><rect x="481" y="470" width="1" height="2" fill="#1f8a1f"/><rect x="481" y="462" width="1" height="8" fill="#4a80ee"/><rect x="481" y="463" width="1" height="2" fill="#c42cf0"/><rect x="481" y="455" width="1" height="7" fill="#c42cf0"/><rect x="481" y="449" width="1" height="6" fill="#c42cf0"/><rect x="482" y="470" width="1" height="2" fill="#1f8a1f"/><rect x="482" y="461" width="1" height="9" fill="#4a80ee"/><rect x="482" y="457" width="1" height="4" fill="#c42cf0"/><rect x="482" y="453" width="1" height="4" fill="#c42cf0"/><rect x="482" y="449" width="1" height="4" fill="#c42cf0"/><rect x="483" y="470" width="1" height="2" fill="#1f8a1f"/><rect x="483" y="460" width="1" height="10" fill="#4a80ee"/><rect x="483" y="456" width="1" height="4" fill="#22a6dc"/><rect x="483" y="450" width="1" height="6" fill="#c42cf0"/><rect x="483" y="443" width="1" height="7" fill="#22a6dc"/><rect x="483" y="434" width="1" height="9" fill="#22a6dc"/><rect x="484" y="471" width="1" height="1" fill="#1f8a1f"/><rect x="484" y="461" width="1" height="10" fill="#4a80ee"/><rect x="484" y="464" width="1" height="6" fill="#c42cf0"/><rect x="484" y="448" width="1" height="13" fill="#22a6dc"/><rect x="485" y="471" width="1" height="1" fill="#1f8a1f"/><rect x="485" y="462" width="1" height="9" fill="#4a80ee"/><rect x="485" y="455" width="1" height="7" fill="#c42cf0"/><rect x="485" y="450" width="1" height="5" fill="#5878e4"/><rect x="486" y="470" width="1" height="2" fill="#1f8a1f"/><rect x="486" y="461" width="1" height="9" fill="#4a80ee"/><rect x="486" y="454" width="1" height="7" fill="#c42cf0"/><rect x="486" y="450" width="1" height="4" fill="#22a6dc"/><rect x="486" y="422" width="1" height="28" fill="#5878e4"/><rect x="487" y="470" width="1" height="2" fill="#1f8a1f"/><rect x="487" y="462" width="1" height="8" fill="#4a80ee"/><rect x="487" y="464" width="1" height="2" fill="#22a6dc"/><rect x="487" y="450" width="1" height="12" fill="#c42cf0"/><rect x="487" y="437" width="1" height="13" fill="#c42cf0"/><rect x="488" y="470" width="1" height="2" fill="#1f8a1f"/><rect x="488" y="462" width="1" height="8" fill="#4a80ee"/><rect x="488" y="453" width="1" height="9" fill="#22a6dc"/><rect x="489" y="470" width="1" height="2" fill="#1f8a1f"/><rect x="489" y="461" width="1" height="9" fill="#4a80ee"/><rect x="489" y="451" width="1" height="10" fill="#5878e4"/><rect x="489" y="446" width="1" height="5" fill="#22a6dc"/><rect x="489" y="438" width="1" height="8" fill="#c42cf0"/><rect x="490" y="470" width="1" height="2" fill="#1f8a1f"/><rect x="490" y="461" width="1" height="9" fill="#4a80ee"/><rect x="490" y="453" width="1" height="8" fill="#22a6dc"/><rect x="490" y="447" width="1" height="6" fill="#c42cf0"/><rect x="490" y="437" width="1" height="10" fill="#c42cf0"/><rect x="491" y="471" width="1" height="1" fill="#1f8a1f"/><rect x="491" y="460" width="1" height="11" fill="#4a80ee"/><rect x="491" y="464" width="1" height="4" fill="#22a6dc"/><rect x="491" y="453" width="1" height="7" fill="#5878e4"/><rect x="491" y="443" width="1" height="10" fill="#22a6dc"/><rect x="492" y="470" width="1" height="2" fill="#1f8a1f"/><rect x="492" y="460" width="1" height="10" fill="#4a80ee"/><rect x="492" y="467" width="1" height="2" fill="#8090a8"/><rect x="492" y="457" width="1" height="3" fill="#c42cf0"/><rect x="492" y="454" width="1" height="3" fill="#c42cf0"/><rect x="492" y="450" width="1" height="4" fill="#22a6dc"/><rect x="493" y="471" width="1" height="1" fill="#1f8a1f"/><rect x="493" y="462" width="1" height="9" fill="#4a80ee"/><rect x="493" y="459" width="1" height="3" fill="#22a6dc"/><rect x="493" y="452" width="1" height="7" fill="#5878e4"/><rect x="493" y="446" width="1" height="6" fill="#22a6dc"/><rect x="494" y="471" width="1" height="1" fill="#1f8a1f"/><rect x="494" y="461" width="1" height="10" fill="#4a80ee"/><rect x="494" y="456" width="1" height="5" fill="#c42cf0"/><rect x="494" y="450" width="1" height="6" fill="#c42cf0"/><rect x="495" y="471" width="1" height="1" fill="#1f8a1f"/><rect x="495" y="462" width="1" height="9" fill="#4a80ee"/><rect x="495" y="457" width="1" height="5" fill="#22a6dc"/><rect x="495" y="452" width="1" height="5" fill="#c42cf0"/><rect x="495" y="429" width="1" height="23" fill="#22a6dc"/><rect x="496" y="470" width="1" height="2" fill="#1f8a1f"/><rect x="496" y="461" width="1" height="9" fill="#4a80ee"/><rect x="496" y="466" width="1" height="2" fill="#8090a8"/><rect x="496" y="456" width="1" height="5" fill="#5878e4"/><rect x="496" y="450" width="1" height="6" fill="#c42cf0"/><rect x="496" y="441" width="1" height="9" fill="#c42cf0"/><rect x="497" y="470" width="1" height="2" fill="#1f8a1f"/><rect x="497" y="461" width="1" height="9" fill="#4a80ee"/><rect x="497" y="466" width="1" height="4" fill="#22a6dc"/><rect x="497" y="451" width="1" height="10" fill="#c42cf0"/><rect x="497" y="444" width="1" height="7" fill="#c42cf0"/><rect x="498" y="470" width="1" height="2" fill="#1f8a1f"/><rect x="498" y="461" width="1" height="9" fill="#4a80ee"/><rect x="498" y="435" width="1" height="26" fill="#5878e4"/><rect x="498" y="428" width="1" height="7" fill="#5878e4"/><rect x="499" y="471" width="1" height="1" fill="#1f8a1f"/><rect x="499" y="460" width="1" height="11" fill="#4a80ee"/><rect x="499" y="469" width="1" height="2" fill="#c42cf0"/><rect x="499" y="457" width="1" height="3" fill="#c42cf0"/><rect x="499" y="453" width="1" height="4" fill="#c42cf0"/><rect x="499" y="448" width="1" height="5" fill="#22a6dc"/><rect x="500" y="470" width="1" height="2" fill="#1f8a1f"/><rect x="500" y="462" width="1" height="8" fill="#4a80ee"/><rect x="500" y="458" width="1" height="4" fill="#22a6dc"/><rect x="500" y="456" width="1" height="2" fill="#c42cf0"/><rect x="501" y="471" width="1" height="1" fill="#1f8a1f"/><rect x="501" y="462" width="1" height="9" fill="#4a80ee"/><rect x="501" y="462" width="1" height="1" fill="#22a6dc"/><rect x="501" y="457" width="1" height="5" fill="#5878e4"/><rect x="501" y="453" width="1" height="4" fill="#22a6dc"/><rect x="501" y="449" width="1" height="4" fill="#22a6dc"/><rect x="502" y="470" width="1" height="2" fill="#1f8a1f"/><rect x="502" y="460" width="1" height="10" fill="#4a80ee"/><rect x="502" y="466" width="1" height="3" fill="#22a6dc"/><rect x="502" y="452" width="1" height="8" fill="#c42cf0"/><rect x="502" y="443" width="1" height="9" fill="#c42cf0"/><rect x="503" y="469" width="1" height="3" fill="#1f8a1f"/><rect x="503" y="461" width="1" height="8" fill="#4a80ee"/><rect x="503" y="455" width="1" height="6" fill="#c42cf0"/><rect x="503" y="449" width="1" height="6" fill="#c42cf0"/><rect x="504" y="470" width="1" height="2" fill="#1f8a1f"/><rect x="504" y="461" width="1" height="9" fill="#4a80ee"/><rect x="504" y="452" width="1" height="9" fill="#5878e4"/><rect x="504" y="440" width="1" height="12" fill="#22a6dc"/><rect x="504" y="424" width="1" height="16" fill="#5878e4"/><rect x="505" y="471" width="1" height="1" fill="#1f8a1f"/><rect x="505" y="461" width="1" height="10" fill="#4a80ee"/><rect x="505" y="470" width="1" height="1" fill="#c42cf0"/><rect x="505" y="447" width="1" height="14" fill="#c42cf0"/><rect x="505" y="429" width="1" height="18" fill="#22a6dc"/><rect x="506" y="470" width="1" height="2" fill="#1f8a1f"/><rect x="506" y="462" width="1" height="8" fill="#4a80ee"/><rect x="506" y="464" width="1" height="5" fill="#22a6dc"/><rect x="506" y="456" width="1" height="6" fill="#c42cf0"/><rect x="506" y="451" width="1" height="5" fill="#22a6dc"/><rect x="506" y="447" width="1" height="4" fill="#c42cf0"/><rect x="507" y="471" width="1" height="1" fill="#1f8a1f"/><rect x="507" y="460" width="1" height="11" fill="#4a80ee"/><rect x="507" y="452" width="1" height="8" fill="#c42cf0"/><rect x="507" y="437" width="1" height="15" fill="#c42cf0"/><rect x="508" y="471" width="1" height="1" fill="#1f8a1f"/><rect x="508" y="461" width="1" height="10" fill="#4a80ee"/><rect x="508" y="453" width="1" height="8" fill="#c42cf0"/><rect x="508" y="447" width="1" height="6" fill="#5878e4"/><rect x="508" y="441" width="1" height="6" fill="#5878e4"/><rect x="509" y="470" width="1" height="2" fill="#1f8a1f"/><rect x="509" y="462" width="1" height="8" fill="#4a80ee"/><rect x="509" y="468" width="1" height="1" fill="#8090a8"/><rect x="509" y="446" width="1" height="16" fill="#c42cf0"/><rect x="510" y="470" width="1" height="2" fill="#1f8a1f"/><rect x="510" y="460" width="1" height="10" fill="#4a80ee"/><rect x="510" y="454" width="1" height="6" fill="#c42cf0"/><rect x="510" y="447" width="1" height="7" fill="#22a6dc"/><rect x="510" y="425" width="1" height="22" fill="#5878e4"/><rect x="511" y="470" width="1" height="2" fill="#1f8a1f"/><rect x="511" y="461" width="1" height="9" fill="#4a80ee"/><rect x="511" y="468" width="1" height="2" fill="#22a6dc"/><rect x="511" y="457" width="1" height="4" fill="#5878e4"/><rect x="511" y="454" width="1" height="3" fill="#22a6dc"/><rect x="512" y="469" width="1" height="3" fill="#1f8a1f"/><rect x="512" y="460" width="1" height="9" fill="#4a80ee"/><rect x="512" y="468" width="1" height="1" fill="#22a6dc"/><rect x="512" y="453" width="1" height="7" fill="#22a6dc"/><rect x="513" y="470" width="1" height="2" fill="#1f8a1f"/><rect x="513" y="462" width="1" height="8" fill="#4a80ee"/><rect x="513" y="450" width="1" height="12" fill="#c42cf0"/><rect x="513" y="417" width="1" height="33" fill="#5878e4"/><rect x="514" y="471" width="1" height="1" fill="#1f8a1f"/><rect x="514" y="460" width="1" height="11" fill="#4a80ee"/><rect x="514" y="460" width="1" height="6" fill="#22a6dc"/><rect x="514" y="453" width="1" height="7" fill="#c42cf0"/><rect x="514" y="445" width="1" height="8" fill="#22a6dc"/><rect x="514" y="437" width="1" height="8" fill="#22a6dc"/><rect x="515" y="469" width="1" height="3" fill="#1f8a1f"/><rect x="515" y="460" width="1" height="9" fill="#4a80ee"/><rect x="515" y="465" width="1" height="2" fill="#22a6dc"/><rect x="515" y="447" width="1" height="13" fill="#c42cf0"/><rect x="515" y="439" width="1" height="8" fill="#22a6dc"/><rect x="516" y="471" width="1" height="1" fill="#1f8a1f"/><rect x="516" y="461" width="1" height="10" fill="#4a80ee"/><rect x="516" y="467" width="1" height="2" fill="#22a6dc"/><rect x="516" y="450" width="1" height="11" fill="#c42cf0"/><rect x="516" y="442" width="1" height="8" fill="#22a6dc"/><rect x="516" y="425" width="1" height="17" fill="#22a6dc"/><rect x="517" y="470" width="1" height="2" fill="#1f8a1f"/><rect x="517" y="462" width="1" height="8" fill="#4a80ee"/><rect x="517" y="466" width="1" height="2" fill="#c42cf0"/><rect x="517" y="446" width="1" height="16" fill="#22a6dc"/><rect x="517" y="437" width="1" height="9" fill="#5878e4"/><rect x="518" y="471" width="1" height="1" fill="#1f8a1f"/><rect x="518" y="461" width="1" height="10" fill="#4a80ee"/><rect x="518" y="470" width="1" height="1" fill="#8090a8"/><rect x="518" y="457" width="1" height="4" fill="#22a6dc"/><rect x="518" y="452" width="1" height="5" fill="#22a6dc"/><rect x="518" y="448" width="1" height="4" fill="#22a6dc"/><rect x="519" y="469" width="1" height="3" fill="#1f8a1f"/><rect x="519" y="462" width="1" height="7" fill="#4a80ee"/><rect x="519" y="454" width="1" height="8" fill="#5878e4"/><rect x="519" y="446" width="1" height="8" fill="#c42cf0"/><rect x="519" y="427" width="1" height="19" fill="#22a6dc"/><rect x="520" y="470" width="1" height="2" fill="#1f8a1f"/><rect x="520" y="460" width="1" height="10" fill="#4a80ee"/><rect x="520" y="450" width="1" height="10" fill="#c42cf0"/><rect x="520" y="437" width="1" height="13" fill="#5878e4"/><rect x="521" y="471" width="1" height="1" fill="#1f8a1f"/><rect x="521" y="461" width="1" height="10" fill="#4a80ee"/><rect x="521" y="463" width="1" height="8" fill="#c42cf0"/><rect x="521" y="450" width="1" height="11" fill="#c42cf0"/><rect x="521" y="440" width="1" height="10" fill="#5878e4"/><rect x="522" y="471" width="1" height="1" fill="#1f8a1f"/><rect x="522" y="462" width="1" height="9" fill="#4a80ee"/><rect x="522" y="454" width="1" height="8" fill="#c42cf0"/><rect x="522" y="445" width="1" height="9" fill="#22a6dc"/><rect x="522" y="439" width="1" height="6" fill="#c42cf0"/><rect x="522" y="416" width="1" height="23" fill="#22a6dc"/><rect x="523" y="470" width="1" height="2" fill="#1f8a1f"/><rect x="523" y="461" width="1" height="9" fill="#4a80ee"/><rect x="523" y="453" width="1" height="8" fill="#22a6dc"/><rect x="523" y="440" width="1" height="13" fill="#22a6dc"/><rect x="524" y="471" width="1" height="1" fill="#1f8a1f"/><rect x="524" y="462" width="1" height="9" fill="#4a80ee"/><rect x="524" y="446" width="1" height="16" fill="#22a6dc"/><rect x="525" y="469" width="1" height="3" fill="#1f8a1f"/><rect x="525" y="462" width="1" height="7" fill="#4a80ee"/><rect x="525" y="452" width="1" height="10" fill="#c42cf0"/><rect x="525" y="419" width="1" height="33" fill="#22a6dc"/><rect x="526" y="471" width="1" height="1" fill="#1f8a1f"/><rect x="526" y="461" width="1" height="10" fill="#4a80ee"/><rect x="526" y="449" width="1" height="12" fill="#c42cf0"/><rect x="526" y="440" width="1" height="9" fill="#22a6dc"/><rect x="527" y="469" width="1" height="3" fill="#1f8a1f"/><rect x="527" y="462" width="1" height="7" fill="#4a80ee"/><rect x="527" y="456" width="1" height="6" fill="#22a6dc"/><rect x="527" y="451" width="1" height="5" fill="#5878e4"/><rect x="528" y="471" width="1" height="1" fill="#1f8a1f"/><rect x="528" y="462" width="1" height="9" fill="#4a80ee"/><rect x="528" y="437" width="1" height="25" fill="#22a6dc"/><rect x="528" y="423" width="1" height="14" fill="#22a6dc"/><rect x="529" y="470" width="1" height="2" fill="#1f8a1f"/><rect x="529" y="461" width="1" height="9" fill="#4a80ee"/><rect x="529" y="455" width="1" height="6" fill="#c42cf0"/><rect x="529" y="451" width="1" height="4" fill="#22a6dc"/><rect x="529" y="446" width="1" height="5" fill="#22a6dc"/><rect x="530" y="470" width="1" height="2" fill="#1f8a1f"/><rect x="530" y="460" width="1" height="10" fill="#4a80ee"/><rect x="530" y="461" width="1" height="1" fill="#22a6dc"/><rect x="530" y="446" width="1" height="14" fill="#c42cf0"/><rect x="531" y="470" width="1" height="2" fill="#1f8a1f"/><rect x="531" y="460" width="1" height="10" fill="#4a80ee"/><rect x="531" y="464" width="1" height="1" fill="#c42cf0"/><rect x="531" y="444" width="1" height="16" fill="#c42cf0"/><rect x="531" y="431" width="1" height="13" fill="#22a6dc"/><rect x="531" y="429" width="1" height="2" fill="#5878e4"/><rect x="532" y="470" width="1" height="2" fill="#1f8a1f"/><rect x="532" y="462" width="1" height="8" fill="#4a80ee"/><rect x="532" y="431" width="1" height="31" fill="#22a6dc"/><rect x="533" y="470" width="1" height="2" fill="#1f8a1f"/><rect x="533" y="460" width="1" height="10" fill="#4a80ee"/><rect x="533" y="455" width="1" height="5" fill="#c42cf0"/><rect x="533" y="450" width="1" height="5" fill="#c42cf0"/><rect x="534" y="469" width="1" height="3" fill="#1f8a1f"/><rect x="534" y="462" width="1" height="7" fill="#4a80ee"/><rect x="534" y="450" width="1" height="12" fill="#c42cf0"/><rect x="535" y="471" width="1" height="1" fill="#1f8a1f"/><rect x="535" y="462" width="1" height="9" fill="#4a80ee"/><rect x="535" y="439" width="1" height="23" fill="#c42cf0"/><rect x="536" y="471" width="1" height="1" fill="#1f8a1f"/><rect x="536" y="460" width="1" height="11" fill="#4a80ee"/><rect x="536" y="465" width="1" height="5" fill="#c42cf0"/><rect x="536" y="450" width="1" height="10" fill="#c42cf0"/><rect x="537" y="470" width="1" height="2" fill="#1f8a1f"/><rect x="537" y="462" width="1" height="8" fill="#4a80ee"/><rect x="537" y="463" width="1" height="6" fill="#c42cf0"/><rect x="537" y="457" width="1" height="5" fill="#c42cf0"/><rect x="537" y="447" width="1" height="10" fill="#c42cf0"/><rect x="537" y="443" width="1" height="4" fill="#c42cf0"/><rect x="537" y="431" width="1" height="12" fill="#22a6dc"/><rect x="538" y="471" width="1" height="1" fill="#1f8a1f"/><rect x="538" y="461" width="1" height="10" fill="#4a80ee"/><rect x="538" y="455" width="1" height="6" fill="#c42cf0"/><rect x="538" y="451" width="1" height="4" fill="#22a6dc"/><rect x="539" y="470" width="1" height="2" fill="#1f8a1f"/><rect x="539" y="460" width="1" height="10" fill="#4a80ee"/><rect x="539" y="445" width="1" height="15" fill="#c42cf0"/><rect x="540" y="471" width="1" height="1" fill="#1f8a1f"/><rect x="540" y="461" width="1" height="10" fill="#4a80ee"/><rect x="540" y="465" width="1" height="6" fill="#c42cf0"/><rect x="540" y="456" width="1" height="5" fill="#22a6dc"/><rect x="540" y="451" width="1" height="5" fill="#22a6dc"/><rect x="540" y="423" width="1" height="28" fill="#22a6dc"/><rect x="541" y="469" width="1" height="3" fill="#1f8a1f"/><rect x="541" y="461" width="1" height="8" fill="#4a80ee"/><rect x="541" y="461" width="1" height="4" fill="#22a6dc"/><rect x="541" y="447" width="1" height="14" fill="#22a6dc"/><rect x="541" y="438" width="1" height="9" fill="#c42cf0"/><rect x="542" y="471" width="1" height="1" fill="#1f8a1f"/><rect x="542" y="462" width="1" height="9" fill="#4a80ee"/><rect x="542" y="456" width="1" height="6" fill="#c42cf0"/><rect x="542" y="452" width="1" height="4" fill="#c42cf0"/><rect x="542" y="448" width="1" height="4" fill="#5878e4"/><rect x="543" y="471" width="1" height="1" fill="#1f8a1f"/><rect x="543" y="462" width="1" height="9" fill="#4a80ee"/><rect x="543" y="452" width="1" height="10" fill="#5878e4"/><rect x="543" y="416" width="1" height="36" fill="#22a6dc"/><rect x="544" y="469" width="1" height="3" fill="#1f8a1f"/><rect x="544" y="460" width="1" height="9" fill="#4a80ee"/><rect x="544" y="451" width="1" height="9" fill="#5878e4"/><rect x="544" y="444" width="1" height="7" fill="#c42cf0"/><rect x="545" y="471" width="1" height="1" fill="#1f8a1f"/><rect x="545" y="462" width="1" height="9" fill="#4a80ee"/><rect x="545" y="469" width="1" height="2" fill="#c42cf0"/><rect x="545" y="451" width="1" height="11" fill="#22a6dc"/><rect x="545" y="441" width="1" height="10" fill="#22a6dc"/><rect x="546" y="471" width="1" height="1" fill="#1f8a1f"/><rect x="546" y="462" width="1" height="9" fill="#4a80ee"/><rect x="546" y="467" width="1" height="1" fill="#c42cf0"/><rect x="546" y="444" width="1" height="18" fill="#c42cf0"/><rect x="546" y="427" width="1" height="17" fill="#22a6dc"/><rect x="546" y="422" width="1" height="5" fill="#22a6dc"/><rect x="547" y="471" width="1" height="1" fill="#1f8a1f"/><rect x="547" y="461" width="1" height="10" fill="#4a80ee"/><rect x="547" y="463" width="1" height="1" fill="#c42cf0"/><rect x="547" y="447" width="1" height="14" fill="#c42cf0"/><rect x="548" y="470" width="1" height="2" fill="#1f8a1f"/><rect x="548" y="462" width="1" height="8" fill="#4a80ee"/><rect x="548" y="456" width="1" height="6" fill="#c42cf0"/><rect x="548" y="448" width="1" height="8" fill="#c42cf0"/><rect x="548" y="444" width="1" height="4" fill="#c42cf0"/><rect x="549" y="471" width="1" height="1" fill="#1f8a1f"/><rect x="549" y="462" width="1" height="9" fill="#4a80ee"/><rect x="549" y="446" width="1" height="16" fill="#22a6dc"/><rect x="550" y="471" width="1" height="1" fill="#1f8a1f"/><rect x="550" y="461" width="1" height="10" fill="#4a80ee"/><rect x="550" y="466" width="1" height="1" fill="#c42cf0"/><rect x="550" y="448" width="1" height="13" fill="#5878e4"/><rect x="551" y="470" width="1" height="2" fill="#1f8a1f"/><rect x="551" y="461" width="1" height="9" fill="#4a80ee"/><rect x="551" y="461" width="1" height="4" fill="#22a6dc"/><rect x="551" y="457" width="1" height="4" fill="#c42cf0"/><rect x="551" y="452" width="1" height="5" fill="#22a6dc"/><rect x="552" y="470" width="1" height="2" fill="#1f8a1f"/><rect x="552" y="461" width="1" height="9" fill="#4a80ee"/><rect x="552" y="461" width="1" height="6" fill="#c42cf0"/><rect x="552" y="451" width="1" height="10" fill="#5878e4"/><rect x="552" y="441" width="1" height="10" fill="#c42cf0"/><rect x="552" y="427" width="1" height="14" fill="#22a6dc"/><rect x="553" y="471" width="1" height="1" fill="#1f8a1f"/><rect x="553" y="462" width="1" height="9" fill="#4a80ee"/><rect x="553" y="466" width="1" height="4" fill="#22a6dc"/><rect x="553" y="455" width="1" height="7" fill="#c42cf0"/><rect x="553" y="447" width="1" height="8" fill="#c42cf0"/><rect x="553" y="439" width="1" height="8" fill="#c42cf0"/><rect x="554" y="471" width="1" height="1" fill="#1f8a1f"/><rect x="554" y="462" width="1" height="9" fill="#4a80ee"/><rect x="554" y="469" width="1" height="2" fill="#22a6dc"/><rect x="554" y="455" width="1" height="7" fill="#c42cf0"/><rect x="555" y="470" width="1" height="2" fill="#1f8a1f"/><rect x="555" y="462" width="1" height="8" fill="#4a80ee"/><rect x="555" y="466" width="1" height="1" fill="#22a6dc"/><rect x="555" y="449" width="1" height="13" fill="#c42cf0"/><rect x="555" y="417" width="1" height="32" fill="#22a6dc"/><rect x="556" y="470" width="1" height="2" fill="#1f8a1f"/><rect x="556" y="460" width="1" height="10" fill="#4a80ee"/><rect x="556" y="451" width="1" height="9" fill="#5878e4"/><rect x="556" y="436" width="1" height="15" fill="#c42cf0"/><rect x="557" y="469" width="1" height="3" fill="#1f8a1f"/><rect x="557" y="462" width="1" height="7" fill="#4a80ee"/><rect x="557" y="466" width="1" height="2" fill="#c42cf0"/><rect x="557" y="437" width="1" height="25" fill="#c42cf0"/><rect x="558" y="469" width="1" height="3" fill="#1f8a1f"/><rect x="558" y="461" width="1" height="8" fill="#4a80ee"/><rect x="558" y="463" width="1" height="6" fill="#22a6dc"/><rect x="558" y="450" width="1" height="11" fill="#22a6dc"/><rect x="558" y="443" width="1" height="7" fill="#c42cf0"/><rect x="558" y="424" width="1" height="19" fill="#22a6dc"/><rect x="559" y="471" width="1" height="1" fill="#1f8a1f"/><rect x="559" y="462" width="1" height="9" fill="#4a80ee"/><rect x="559" y="470" width="1" height="1" fill="#c42cf0"/><rect x="559" y="443" width="1" height="19" fill="#22a6dc"/><rect x="560" y="471" width="1" height="1" fill="#1f8a1f"/><rect x="560" y="461" width="1" height="10" fill="#4a80ee"/><rect x="560" y="467" width="1" height="2" fill="#22a6dc"/><rect x="560" y="444" width="1" height="17" fill="#c42cf0"/><rect x="561" y="471" width="1" height="1" fill="#1f8a1f"/><rect x="561" y="460" width="1" height="11" fill="#4a80ee"/><rect x="561" y="451" width="1" height="9" fill="#5878e4"/><rect x="561" y="441" width="1" height="10" fill="#22a6dc"/><rect x="561" y="431" width="1" height="10" fill="#22a6dc"/><rect x="562" y="470" width="1" height="2" fill="#1f8a1f"/><rect x="562" y="462" width="1" height="8" fill="#4a80ee"/><rect x="562" y="463" width="1" height="6" fill="#22a6dc"/><rect x="562" y="454" width="1" height="8" fill="#c42cf0"/><rect x="562" y="450" width="1" height="4" fill="#c42cf0"/><rect x="562" y="444" width="1" height="6" fill="#22a6dc"/><rect x="563" y="471" width="1" height="1" fill="#1f8a1f"/><rect x="563" y="461" width="1" height="10" fill="#4a80ee"/><rect x="563" y="465" width="1" height="2" fill="#22a6dc"/><rect x="563" y="451" width="1" height="10" fill="#22a6dc"/><rect x="563" y="446" width="1" height="5" fill="#c42cf0"/><rect x="564" y="471" width="1" height="1" fill="#1f8a1f"/><rect x="564" y="462" width="1" height="9" fill="#4a80ee"/><rect x="564" y="450" width="1" height="12" fill="#5878e4"/><rect x="564" y="417" width="1" height="33" fill="#22a6dc"/><rect x="565" y="466" width="1" height="6" fill="#1f8a1f"/><rect x="565" y="462" width="1" height="4" fill="#4a80ee"/><rect x="565" y="454" width="1" height="8" fill="#22a6dc"/><rect x="565" y="449" width="1" height="5" fill="#c42cf0"/><rect x="565" y="444" width="1" height="5" fill="#5878e4"/><rect x="566" y="471" width="1" height="1" fill="#1f8a1f"/><rect x="566" y="462" width="1" height="9" fill="#4a80ee"/><rect x="566" y="459" width="1" height="3" fill="#22a6dc"/><rect x="566" y="454" width="1" height="5" fill="#5878e4"/><rect x="567" y="471" width="1" height="1" fill="#1f8a1f"/><rect x="567" y="461" width="1" height="10" fill="#4a80ee"/><rect x="567" y="458" width="1" height="3" fill="#22a6dc"/><rect x="567" y="452" width="1" height="6" fill="#22a6dc"/><rect x="567" y="446" width="1" height="6" fill="#22a6dc"/><rect x="568" y="469" width="1" height="3" fill="#1f8a1f"/><rect x="568" y="462" width="1" height="7" fill="#4a80ee"/><rect x="568" y="459" width="1" height="3" fill="#22a6dc"/><rect x="568" y="454" width="1" height="5" fill="#c42cf0"/><rect x="569" y="471" width="1" height="1" fill="#1f8a1f"/><rect x="569" y="461" width="1" height="10" fill="#4a80ee"/><rect x="569" y="453" width="1" height="8" fill="#5878e4"/><rect x="569" y="444" width="1" height="9" fill="#c42cf0"/><rect x="569" y="440" width="1" height="4" fill="#c42cf0"/><rect x="570" y="466" width="1" height="6" fill="#1f8a1f"/><rect x="570" y="461" width="1" height="5" fill="#4a80ee"/><rect x="570" y="465" width="1" height="1" fill="#22a6dc"/><rect x="570" y="455" width="1" height="6" fill="#c42cf0"/><rect x="570" y="448" width="1" height="7" fill="#c42cf0"/><rect x="570" y="441" width="1" height="7" fill="#c42cf0"/><rect x="570" y="414" width="1" height="27" fill="#22a6dc"/><rect x="571" y="471" width="1" height="1" fill="#1f8a1f"/><rect x="571" y="468" width="1" height="3" fill="#ec8434"/><rect x="571" y="461" width="1" height="7" fill="#4a80ee"/><rect x="571" y="467" width="1" height="1" fill="#22a6dc"/><rect x="571" y="451" width="1" height="10" fill="#c42cf0"/><rect x="571" y="443" width="1" height="8" fill="#22a6dc"/><rect x="571" y="433" width="1" height="10" fill="#c42cf0"/><rect x="572" y="466" width="1" height="6" fill="#1f8a1f"/><rect x="572" y="462" width="1" height="4" fill="#4a80ee"/><rect x="572" y="453" width="1" height="9" fill="#c42cf0"/><rect x="572" y="449" width="1" height="4" fill="#22a6dc"/><rect x="573" y="471" width="1" height="1" fill="#1f8a1f"/><rect x="573" y="461" width="1" height="10" fill="#4a80ee"/><rect x="573" y="465" width="1" height="5" fill="#22a6dc"/><rect x="573" y="450" width="1" height="11" fill="#5878e4"/><rect x="573" y="439" width="1" height="11" fill="#22a6dc"/><rect x="574" y="471" width="1" height="1" fill="#1f8a1f"/><rect x="574" y="460" width="1" height="11" fill="#4a80ee"/><rect x="574" y="454" width="1" height="6" fill="#c42cf0"/><rect x="574" y="448" width="1" height="6" fill="#5878e4"/><rect x="574" y="441" width="1" height="7" fill="#5878e4"/><rect x="575" y="471" width="1" height="1" fill="#1f8a1f"/><rect x="575" y="462" width="1" height="9" fill="#4a80ee"/><rect x="575" y="446" width="1" height="16" fill="#22a6dc"/><rect x="576" y="471" width="1" height="1" fill="#1f8a1f"/><rect x="576" y="470" width="1" height="1" fill="#ec8434"/><rect x="576" y="462" width="1" height="8" fill="#4a80ee"/><rect x="576" y="447" width="1" height="15" fill="#c42cf0"/><rect x="577" y="466" width="1" height="6" fill="#1f8a1f"/><rect x="577" y="460" width="1" height="6" fill="#4a80ee"/><rect x="577" y="464" width="1" height="2" fill="#c42cf0"/><rect x="577" y="450" width="1" height="10" fill="#22a6dc"/><rect x="577" y="436" width="1" height="14" fill="#22a6dc"/><rect x="578" y="471" width="1" height="1" fill="#1f8a1f"/><rect x="578" y="469" width="1" height="2" fill="#ec8434"/><rect x="578" y="461" width="1" height="8" fill="#4a80ee"/><rect x="578" y="465" width="1" height="1" fill="#22a6dc"/><rect x="578" y="456" width="1" height="5" fill="#22a6dc"/><rect x="578" y="450" width="1" height="6" fill="#22a6dc"/><rect x="579" y="471" width="1" height="1" fill="#1f8a1f"/><rect x="579" y="460" width="1" height="11" fill="#4a80ee"/><rect x="579" y="452" width="1" height="8" fill="#22a6dc"/><rect x="579" y="444" width="1" height="8" fill="#5878e4"/><rect x="579" y="427" width="1" height="17" fill="#22a6dc"/><rect x="580" y="470" width="1" height="2" fill="#1f8a1f"/><rect x="580" y="462" width="1" height="8" fill="#4a80ee"/><rect x="580" y="468" width="1" height="1" fill="#22a6dc"/><rect x="580" y="456" width="1" height="6" fill="#c42cf0"/><rect x="580" y="450" width="1" height="6" fill="#5878e4"/><rect x="581" y="471" width="1" height="1" fill="#1f8a1f"/><rect x="581" y="469" width="1" height="2" fill="#ec8434"/><rect x="581" y="460" width="1" height="9" fill="#4a80ee"/><rect x="581" y="455" width="1" height="5" fill="#c42cf0"/><rect x="581" y="450" width="1" height="5" fill="#c42cf0"/><rect x="581" y="444" width="1" height="6" fill="#c42cf0"/><rect x="582" y="469" width="1" height="3" fill="#1f8a1f"/><rect x="582" y="460" width="1" height="9" fill="#4a80ee"/><rect x="582" y="448" width="1" height="12" fill="#22a6dc"/><rect x="582" y="435" width="1" height="13" fill="#22a6dc"/><rect x="582" y="428" width="1" height="7" fill="#22a6dc"/><rect x="583" y="471" width="1" height="1" fill="#1f8a1f"/><rect x="583" y="460" width="1" height="11" fill="#4a80ee"/><rect x="583" y="464" width="1" height="2" fill="#22a6dc"/><rect x="583" y="449" width="1" height="11" fill="#c42cf0"/><rect x="583" y="443" width="1" height="6" fill="#c42cf0"/><rect x="583" y="434" width="1" height="9" fill="#c42cf0"/><rect x="584" y="470" width="1" height="2" fill="#1f8a1f"/><rect x="584" y="460" width="1" height="10" fill="#4a80ee"/><rect x="584" y="460" width="1" height="7" fill="#8090a8"/><rect x="584" y="453" width="1" height="7" fill="#c42cf0"/><rect x="584" y="448" width="1" height="5" fill="#c42cf0"/><rect x="585" y="471" width="1" height="1" fill="#1f8a1f"/><rect x="585" y="462" width="1" height="9" fill="#4a80ee"/><rect x="585" y="446" width="1" height="16" fill="#22a6dc"/><rect x="585" y="432" width="1" height="14" fill="#5878e4"/><rect x="585" y="418" width="1" height="14" fill="#22a6dc"/><rect x="586" y="470" width="1" height="2" fill="#1f8a1f"/><rect x="586" y="460" width="1" height="10" fill="#4a80ee"/><rect x="586" y="465" width="1" height="5" fill="#c42cf0"/><rect x="586" y="453" width="1" height="7" fill="#5878e4"/><rect x="586" y="448" width="1" height="5" fill="#22a6dc"/><rect x="587" y="469" width="1" height="3" fill="#1f8a1f"/><rect x="587" y="462" width="1" height="7" fill="#4a80ee"/><rect x="587" y="466" width="1" height="3" fill="#22a6dc"/><rect x="587" y="455" width="1" height="7" fill="#22a6dc"/><rect x="587" y="450" width="1" height="5" fill="#c42cf0"/><rect x="587" y="441" width="1" height="9" fill="#22a6dc"/><rect x="588" y="466" width="1" height="6" fill="#1f8a1f"/><rect x="588" y="461" width="1" height="5" fill="#4a80ee"/><rect x="588" y="450" width="1" height="11" fill="#5878e4"/><rect x="588" y="434" width="1" height="16" fill="#22a6dc"/><rect x="589" y="470" width="1" height="2" fill="#1f8a1f"/><rect x="589" y="469" width="1" height="1" fill="#ec8434"/><rect x="589" y="462" width="1" height="7" fill="#4a80ee"/><rect x="589" y="455" width="1" height="7" fill="#22a6dc"/><rect x="589" y="448" width="1" height="7" fill="#c42cf0"/><rect x="589" y="441" width="1" height="7" fill="#c42cf0"/><rect x="590" y="471" width="1" height="1" fill="#1f8a1f"/><rect x="590" y="461" width="1" height="10" fill="#4a80ee"/><rect x="590" y="467" width="1" height="1" fill="#c42cf0"/><rect x="590" y="458" width="1" height="3" fill="#5878e4"/><rect x="590" y="455" width="1" height="3" fill="#c42cf0"/><rect x="591" y="471" width="1" height="1" fill="#1f8a1f"/><rect x="591" y="462" width="1" height="9" fill="#4a80ee"/><rect x="591" y="451" width="1" height="11" fill="#22a6dc"/><rect x="591" y="440" width="1" height="11" fill="#5878e4"/><rect x="592" y="470" width="1" height="2" fill="#1f8a1f"/><rect x="592" y="462" width="1" height="8" fill="#4a80ee"/><rect x="592" y="468" width="1" height="1" fill="#22a6dc"/><rect x="592" y="453" width="1" height="9" fill="#c42cf0"/><rect x="593" y="470" width="1" height="2" fill="#1f8a1f"/><rect x="593" y="461" width="1" height="9" fill="#4a80ee"/><rect x="593" y="442" width="1" height="19" fill="#5878e4"/><rect x="594" y="466" width="1" height="6" fill="#1f8a1f"/><rect x="594" y="461" width="1" height="5" fill="#4a80ee"/><rect x="594" y="452" width="1" height="9" fill="#c42cf0"/><rect x="594" y="437" width="1" height="15" fill="#c42cf0"/><rect x="594" y="425" width="1" height="12" fill="#5878e4"/><rect x="595" y="471" width="1" height="1" fill="#1f8a1f"/><rect x="595" y="462" width="1" height="9" fill="#4a80ee"/><rect x="595" y="462" width="1" height="1" fill="#22a6dc"/><rect x="595" y="455" width="1" height="7" fill="#c42cf0"/><rect x="595" y="449" width="1" height="6" fill="#c42cf0"/><rect x="595" y="443" width="1" height="6" fill="#c42cf0"/><rect x="596" y="471" width="1" height="1" fill="#1f8a1f"/><rect x="596" y="461" width="1" height="10" fill="#4a80ee"/><rect x="596" y="453" width="1" height="8" fill="#22a6dc"/><rect x="596" y="445" width="1" height="8" fill="#5878e4"/><rect x="597" y="466" width="1" height="6" fill="#1f8a1f"/><rect x="597" y="461" width="1" height="5" fill="#4a80ee"/><rect x="597" y="462" width="1" height="2" fill="#c42cf0"/><rect x="597" y="444" width="1" height="17" fill="#5878e4"/><rect x="597" y="425" width="1" height="19" fill="#22a6dc"/><rect x="598" y="470" width="1" height="2" fill="#1f8a1f"/><rect x="598" y="461" width="1" height="9" fill="#4a80ee"/><rect x="598" y="437" width="1" height="24" fill="#c42cf0"/><rect x="599" y="470" width="1" height="2" fill="#1f8a1f"/><rect x="599" y="462" width="1" height="8" fill="#4a80ee"/><rect x="599" y="458" width="1" height="4" fill="#c42cf0"/><rect x="599" y="454" width="1" height="4" fill="#c42cf0"/><rect x="600" y="471" width="1" height="1" fill="#1f8a1f"/><rect x="600" y="460" width="1" height="11" fill="#4a80ee"/><rect x="600" y="451" width="1" height="9" fill="#c42cf0"/><rect x="600" y="432" width="1" height="19" fill="#c42cf0"/><rect x="601" y="466" width="1" height="6" fill="#1f8a1f"/><rect x="601" y="460" width="1" height="6" fill="#4a80ee"/><rect x="601" y="447" width="1" height="13" fill="#22a6dc"/><rect x="601" y="436" width="1" height="11" fill="#c42cf0"/><rect x="602" y="466" width="1" height="6" fill="#1f8a1f"/><rect x="602" y="462" width="1" height="4" fill="#4a80ee"/><rect x="602" y="463" width="1" height="3" fill="#22a6dc"/><rect x="602" y="457" width="1" height="5" fill="#5878e4"/><rect x="602" y="453" width="1" height="4" fill="#22a6dc"/><rect x="603" y="471" width="1" height="1" fill="#1f8a1f"/><rect x="603" y="462" width="1" height="9" fill="#4a80ee"/><rect x="603" y="447" width="1" height="15" fill="#5878e4"/><rect x="603" y="425" width="1" height="22" fill="#5878e4"/><rect x="604" y="470" width="1" height="2" fill="#1f8a1f"/><rect x="604" y="462" width="1" height="8" fill="#4a80ee"/><rect x="604" y="462" width="1" height="3" fill="#8090a8"/><rect x="604" y="454" width="1" height="8" fill="#c42cf0"/><rect x="604" y="439" width="1" height="15" fill="#c42cf0"/><rect x="605" y="469" width="1" height="3" fill="#1f8a1f"/><rect x="605" y="460" width="1" height="9" fill="#4a80ee"/><rect x="605" y="451" width="1" height="9" fill="#c42cf0"/><rect x="606" y="471" width="1" height="1" fill="#1f8a1f"/><rect x="606" y="461" width="1" height="10" fill="#4a80ee"/><rect x="606" y="469" width="1" height="2" fill="#8090a8"/><rect x="606" y="448" width="1" height="13" fill="#22a6dc"/><rect x="606" y="435" width="1" height="13" fill="#c42cf0"/><rect x="606" y="427" width="1" height="8" fill="#22a6dc"/><rect x="607" y="471" width="1" height="1" fill="#1f8a1f"/><rect x="607" y="462" width="1" height="9" fill="#4a80ee"/><rect x="607" y="468" width="1" height="3" fill="#22a6dc"/><rect x="607" y="454" width="1" height="8" fill="#22a6dc"/><rect x="607" y="448" width="1" height="6" fill="#5878e4"/><rect x="608" y="471" width="1" height="1" fill="#1f8a1f"/><rect x="608" y="461" width="1" height="10" fill="#4a80ee"/><rect x="608" y="467" width="1" height="2" fill="#22a6dc"/><rect x="608" y="454" width="1" height="7" fill="#5878e4"/><rect x="608" y="450" width="1" height="4" fill="#c42cf0"/><rect x="609" y="471" width="1" height="1" fill="#1f8a1f"/><rect x="609" y="461" width="1" height="10" fill="#4a80ee"/><rect x="609" y="452" width="1" height="9" fill="#c42cf0"/><rect x="609" y="442" width="1" height="10" fill="#22a6dc"/><rect x="609" y="435" width="1" height="7" fill="#22a6dc"/><rect x="609" y="411" width="1" height="24" fill="#22a6dc"/><rect x="610" y="471" width="1" height="1" fill="#1f8a1f"/><rect x="610" y="461" width="1" height="10" fill="#4a80ee"/><rect x="610" y="445" width="1" height="16" fill="#22a6dc"/><rect x="611" y="470" width="1" height="2" fill="#1f8a1f"/><rect x="611" y="462" width="1" height="8" fill="#4a80ee"/><rect x="611" y="457" width="1" height="5" fill="#22a6dc"/><rect x="612" y="471" width="1" height="1" fill="#1f8a1f"/><rect x="612" y="462" width="1" height="9" fill="#4a80ee"/><rect x="612" y="467" width="1" height="3" fill="#22a6dc"/><rect x="612" y="460" width="1" height="2" fill="#22a6dc"/><rect x="612" y="457" width="1" height="3" fill="#5878e4"/><rect x="612" y="453" width="1" height="4" fill="#c42cf0"/><rect x="612" y="428" width="1" height="25" fill="#5878e4"/><rect x="613" y="466" width="1" height="6" fill="#1f8a1f"/><rect x="613" y="461" width="1" height="5" fill="#4a80ee"/><rect x="613" y="446" width="1" height="15" fill="#c42cf0"/><rect x="614" y="469" width="1" height="3" fill="#1f8a1f"/><rect x="614" y="461" width="1" height="8" fill="#4a80ee"/><rect x="614" y="452" width="1" height="9" fill="#22a6dc"/><rect x="614" y="447" width="1" height="5" fill="#22a6dc"/><rect x="615" y="469" width="1" height="3" fill="#1f8a1f"/><rect x="615" y="460" width="1" height="9" fill="#4a80ee"/><rect x="615" y="456" width="1" height="4" fill="#c42cf0"/><rect x="615" y="450" width="1" height="6" fill="#5878e4"/><rect x="615" y="445" width="1" height="5" fill="#c42cf0"/><rect x="615" y="423" width="1" height="22" fill="#22a6dc"/><rect x="616" y="471" width="1" height="1" fill="#1f8a1f"/><rect x="616" y="462" width="1" height="9" fill="#4a80ee"/><rect x="616" y="444" width="1" height="18" fill="#c42cf0"/><rect x="616" y="433" width="1" height="11" fill="#c42cf0"/><rect x="617" y="469" width="1" height="3" fill="#1f8a1f"/><rect x="617" y="462" width="1" height="7" fill="#4a80ee"/><rect x="617" y="453" width="1" height="9" fill="#c42cf0"/><rect x="617" y="444" width="1" height="9" fill="#c42cf0"/><rect x="617" y="434" width="1" height="10" fill="#22a6dc"/><rect x="618" y="466" width="1" height="6" fill="#1f8a1f"/><rect x="618" y="463" width="1" height="3" fill="#ec8434"/><rect x="618" y="462" width="1" height="1" fill="#4a80ee"/><rect x="618" y="455" width="1" height="7" fill="#22a6dc"/><rect x="618" y="446" width="1" height="9" fill="#22a6dc"/><rect x="618" y="416" width="1" height="30" fill="#22a6dc"/><rect x="619" y="471" width="1" height="1" fill="#1f8a1f"/><rect x="619" y="461" width="1" height="10" fill="#4a80ee"/><rect x="619" y="463" width="1" height="2" fill="#22a6dc"/><rect x="619" y="428" width="1" height="33" fill="#22a6dc"/><rect x="620" y="469" width="1" height="3" fill="#1f8a1f"/><rect x="620" y="468" width="1" height="1" fill="#ec8434"/><rect x="620" y="462" width="1" height="6" fill="#4a80ee"/><rect x="620" y="454" width="1" height="8" fill="#22a6dc"/><rect x="621" y="466" width="1" height="6" fill="#1f8a1f"/><rect x="621" y="462" width="1" height="4" fill="#4a80ee"/><rect x="621" y="456" width="1" height="6" fill="#22a6dc"/><rect x="621" y="447" width="1" height="9" fill="#c42cf0"/><rect x="621" y="439" width="1" height="8" fill="#c42cf0"/><rect x="622" y="471" width="1" height="1" fill="#1f8a1f"/><rect x="622" y="469" width="1" height="2" fill="#ec8434"/><rect x="622" y="460" width="1" height="9" fill="#4a80ee"/><rect x="622" y="465" width="1" height="1" fill="#22a6dc"/><rect x="622" y="448" width="1" height="12" fill="#c42cf0"/><rect x="623" y="471" width="1" height="1" fill="#1f8a1f"/><rect x="623" y="462" width="1" height="9" fill="#4a80ee"/><rect x="623" y="468" width="1" height="3" fill="#22a6dc"/><rect x="623" y="457" width="1" height="5" fill="#5878e4"/><rect x="623" y="452" width="1" height="5" fill="#5878e4"/><rect x="623" y="445" width="1" height="7" fill="#22a6dc"/><rect x="624" y="471" width="1" height="1" fill="#1f8a1f"/><rect x="624" y="461" width="1" height="10" fill="#4a80ee"/><rect x="624" y="457" width="1" height="4" fill="#c42cf0"/><rect x="624" y="452" width="1" height="5" fill="#c42cf0"/><rect x="624" y="447" width="1" height="5" fill="#5878e4"/><rect x="625" y="470" width="1" height="2" fill="#1f8a1f"/><rect x="625" y="461" width="1" height="9" fill="#4a80ee"/><rect x="625" y="469" width="1" height="1" fill="#c42cf0"/><rect x="625" y="438" width="1" height="23" fill="#c42cf0"/><rect x="626" y="466" width="1" height="6" fill="#1f8a1f"/><rect x="626" y="462" width="1" height="4" fill="#4a80ee"/><rect x="626" y="456" width="1" height="6" fill="#c42cf0"/><rect x="627" y="466" width="1" height="6" fill="#1f8a1f"/><rect x="627" y="462" width="1" height="4" fill="#4a80ee"/><rect x="627" y="462" width="1" height="1" fill="#22a6dc"/><rect x="627" y="451" width="1" height="11" fill="#c42cf0"/><rect x="628" y="470" width="1" height="2" fill="#1f8a1f"/><rect x="628" y="461" width="1" height="9" fill="#4a80ee"/><rect x="628" y="445" width="1" height="16" fill="#22a6dc"/><rect x="628" y="429" width="1" height="16" fill="#c42cf0"/><rect x="629" y="469" width="1" height="3" fill="#1f8a1f"/><rect x="629" y="462" width="1" height="7" fill="#4a80ee"/><rect x="629" y="454" width="1" height="8" fill="#c42cf0"/><rect x="629" y="449" width="1" height="5" fill="#c42cf0"/><rect x="630" y="470" width="1" height="2" fill="#1f8a1f"/><rect x="630" y="461" width="1" height="9" fill="#4a80ee"/><rect x="630" y="440" width="1" height="21" fill="#22a6dc"/><rect x="630" y="422" width="1" height="18" fill="#c42cf0"/><rect x="630" y="410" width="1" height="12" fill="#22a6dc"/><rect x="631" y="469" width="1" height="3" fill="#1f8a1f"/><rect x="631" y="461" width="1" height="8" fill="#4a80ee"/><rect x="631" y="445" width="1" height="16" fill="#22a6dc"/><rect x="631" y="437" width="1" height="8" fill="#c42cf0"/><rect x="632" y="469" width="1" height="3" fill="#1f8a1f"/><rect x="632" y="461" width="1" height="8" fill="#4a80ee"/><rect x="632" y="464" width="1" height="5" fill="#c42cf0"/><rect x="632" y="455" width="1" height="6" fill="#c42cf0"/><rect x="632" y="447" width="1" height="8" fill="#5878e4"/><rect x="633" y="471" width="1" height="1" fill="#1f8a1f"/><rect x="633" y="460" width="1" height="11" fill="#4a80ee"/><rect x="633" y="468" width="1" height="1" fill="#22a6dc"/><rect x="633" y="455" width="1" height="5" fill="#c42cf0"/><rect x="633" y="450" width="1" height="5" fill="#22a6dc"/><rect x="633" y="445" width="1" height="5" fill="#c42cf0"/><rect x="633" y="418" width="1" height="27" fill="#22a6dc"/><rect x="634" y="466" width="1" height="6" fill="#1f8a1f"/><rect x="634" y="461" width="1" height="5" fill="#4a80ee"/><rect x="634" y="457" width="1" height="4" fill="#c42cf0"/><rect x="634" y="452" width="1" height="5" fill="#c42cf0"/><rect x="634" y="449" width="1" height="3" fill="#c42cf0"/><rect x="635" y="470" width="1" height="2" fill="#1f8a1f"/><rect x="635" y="461" width="1" height="9" fill="#4a80ee"/><rect x="635" y="453" width="1" height="8" fill="#c42cf0"/><rect x="635" y="442" width="1" height="11" fill="#c42cf0"/><rect x="636" y="466" width="1" height="6" fill="#1f8a1f"/><rect x="636" y="462" width="1" height="4" fill="#4a80ee"/><rect x="636" y="455" width="1" height="7" fill="#c42cf0"/><rect x="636" y="447" width="1" height="8" fill="#c42cf0"/><rect x="637" y="470" width="1" height="2" fill="#1f8a1f"/><rect x="637" y="460" width="1" height="10" fill="#4a80ee"/><rect x="637" y="455" width="1" height="5" fill="#22a6dc"/><rect x="637" y="451" width="1" height="4" fill="#22a6dc"/><rect x="637" y="446" width="1" height="5" fill="#22a6dc"/><rect x="638" y="471" width="1" height="1" fill="#1f8a1f"/><rect x="638" y="469" width="1" height="2" fill="#ec8434"/><rect x="638" y="460" width="1" height="9" fill="#4a80ee"/><rect x="638" y="460" width="1" height="2" fill="#22a6dc"/><rect x="638" y="454" width="1" height="6" fill="#c42cf0"/><rect x="638" y="448" width="1" height="6" fill="#5878e4"/><rect x="638" y="442" width="1" height="6" fill="#c42cf0"/><rect x="639" y="470" width="1" height="2" fill="#1f8a1f"/><rect x="639" y="461" width="1" height="9" fill="#4a80ee"/><rect x="639" y="464" width="1" height="3" fill="#22a6dc"/><rect x="639" y="440" width="1" height="21" fill="#22a6dc"/><rect x="639" y="424" width="1" height="16" fill="#5878e4"/><rect x="639" y="414" width="1" height="10" fill="#22a6dc"/><rect x="640" y="470" width="1" height="2" fill="#1f8a1f"/><rect x="640" y="461" width="1" height="9" fill="#4a80ee"/><rect x="640" y="456" width="1" height="5" fill="#22a6dc"/><rect x="640" y="452" width="1" height="4" fill="#c42cf0"/><rect x="640" y="447" width="1" height="5" fill="#c42cf0"/><rect x="641" y="469" width="1" height="3" fill="#1f8a1f"/><rect x="641" y="460" width="1" height="9" fill="#4a80ee"/><rect x="641" y="456" width="1" height="4" fill="#c42cf0"/><rect x="641" y="453" width="1" height="3" fill="#5878e4"/><rect x="642" y="469" width="1" height="3" fill="#1f8a1f"/><rect x="642" y="462" width="1" height="7" fill="#4a80ee"/><rect x="642" y="457" width="1" height="5" fill="#c42cf0"/><rect x="642" y="448" width="1" height="9" fill="#22a6dc"/><rect x="642" y="412" width="1" height="36" fill="#22a6dc"/><rect x="643" y="471" width="1" height="1" fill="#1f8a1f"/><rect x="643" y="462" width="1" height="9" fill="#4a80ee"/><rect x="643" y="453" width="1" height="9" fill="#c42cf0"/><rect x="643" y="443" width="1" height="10" fill="#22a6dc"/><rect x="643" y="438" width="1" height="5" fill="#c42cf0"/><rect x="644" y="469" width="1" height="3" fill="#1f8a1f"/><rect x="644" y="462" width="1" height="7" fill="#4a80ee"/><rect x="644" y="457" width="1" height="5" fill="#c42cf0"/><rect x="644" y="452" width="1" height="5" fill="#c42cf0"/><rect x="644" y="448" width="1" height="4" fill="#5878e4"/><rect x="645" y="466" width="1" height="6" fill="#1f8a1f"/><rect x="645" y="462" width="1" height="4" fill="#4a80ee"/><rect x="645" y="449" width="1" height="13" fill="#c42cf0"/><rect x="645" y="432" width="1" height="17" fill="#22a6dc"/><rect x="646" y="471" width="1" height="1" fill="#1f8a1f"/><rect x="646" y="461" width="1" height="10" fill="#4a80ee"/><rect x="646" y="457" width="1" height="4" fill="#22a6dc"/><rect x="646" y="451" width="1" height="6" fill="#22a6dc"/><rect x="646" y="448" width="1" height="3" fill="#22a6dc"/><rect x="647" y="469" width="1" height="3" fill="#1f8a1f"/><rect x="647" y="460" width="1" height="9" fill="#4a80ee"/><rect x="647" y="456" width="1" height="4" fill="#22a6dc"/><rect x="647" y="451" width="1" height="5" fill="#5878e4"/><rect x="648" y="466" width="1" height="6" fill="#1f8a1f"/><rect x="648" y="462" width="1" height="4" fill="#4a80ee"/><rect x="648" y="456" width="1" height="6" fill="#5878e4"/><rect x="648" y="451" width="1" height="5" fill="#22a6dc"/><rect x="648" y="427" width="1" height="24" fill="#22a6dc"/><rect x="649" y="471" width="1" height="1" fill="#1f8a1f"/><rect x="649" y="461" width="1" height="10" fill="#4a80ee"/><rect x="649" y="455" width="1" height="6" fill="#c42cf0"/><rect x="649" y="449" width="1" height="6" fill="#5878e4"/><rect x="649" y="441" width="1" height="8" fill="#22a6dc"/><rect x="650" y="471" width="1" height="1" fill="#1f8a1f"/><rect x="650" y="464" width="1" height="7" fill="#ec8434"/><rect x="650" y="462" width="1" height="2" fill="#4a80ee"/><rect x="650" y="454" width="1" height="8" fill="#5878e4"/><rect x="650" y="447" width="1" height="7" fill="#5878e4"/><rect x="650" y="441" width="1" height="6" fill="#5878e4"/><rect x="651" y="469" width="1" height="3" fill="#ec8434"/><rect x="651" y="461" width="1" height="8" fill="#4a80ee"/><rect x="651" y="462" width="1" height="7" fill="#22a6dc"/><rect x="651" y="454" width="1" height="7" fill="#c42cf0"/><rect x="651" y="449" width="1" height="5" fill="#22a6dc"/><rect x="651" y="410" width="1" height="39" fill="#22a6dc"/><rect x="652" y="466" width="1" height="6" fill="#ec8434"/><rect x="652" y="462" width="1" height="4" fill="#4a80ee"/><rect x="652" y="454" width="1" height="8" fill="#5878e4"/><rect x="652" y="441" width="1" height="13" fill="#c42cf0"/><rect x="653" y="468" width="1" height="4" fill="#ec8434"/><rect x="653" y="461" width="1" height="7" fill="#4a80ee"/><rect x="653" y="461" width="1" height="1" fill="#c42cf0"/><rect x="653" y="451" width="1" height="10" fill="#c42cf0"/><rect x="653" y="438" width="1" height="13" fill="#c42cf0"/><rect x="654" y="470" width="1" height="2" fill="#1f8a1f"/><rect x="654" y="467" width="1" height="3" fill="#ec8434"/><rect x="654" y="462" width="1" height="5" fill="#4a80ee"/><rect x="654" y="466" width="1" height="1" fill="#c42cf0"/><rect x="654" y="445" width="1" height="17" fill="#5878e4"/><rect x="655" y="468" width="1" height="4" fill="#ec8434"/><rect x="655" y="462" width="1" height="6" fill="#4a80ee"/><rect x="655" y="449" width="1" height="13" fill="#c42cf0"/><rect x="655" y="438" width="1" height="11" fill="#5878e4"/><rect x="656" y="469" width="1" height="3" fill="#1f8a1f"/><rect x="656" y="466" width="1" height="3" fill="#ec8434"/><rect x="656" y="461" width="1" height="5" fill="#4a80ee"/><rect x="656" y="450" width="1" height="11" fill="#22a6dc"/><rect x="656" y="439" width="1" height="11" fill="#c42cf0"/><rect x="657" y="466" width="1" height="6" fill="#1f8a1f"/><rect x="657" y="461" width="1" height="5" fill="#ec8434"/><rect x="657" y="451" width="1" height="10" fill="#22a6dc"/><rect x="657" y="445" width="1" height="6" fill="#c42cf0"/><rect x="657" y="441" width="1" height="4" fill="#c42cf0"/><rect x="658" y="469" width="1" height="3" fill="#1f8a1f"/><rect x="658" y="463" width="1" height="6" fill="#ec8434"/><rect x="658" y="462" width="1" height="1" fill="#4a80ee"/><rect x="658" y="455" width="1" height="7" fill="#c42cf0"/><rect x="658" y="448" width="1" height="7" fill="#22a6dc"/><rect x="659" y="469" width="1" height="3" fill="#1f8a1f"/><rect x="659" y="465" width="1" height="4" fill="#ec8434"/><rect x="659" y="462" width="1" height="3" fill="#4a80ee"/><rect x="659" y="448" width="1" height="14" fill="#22a6dc"/><rect x="660" y="466" width="1" height="6" fill="#ec8434"/><rect x="660" y="461" width="1" height="5" fill="#4a80ee"/><rect x="660" y="464" width="1" height="2" fill="#22a6dc"/><rect x="660" y="453" width="1" height="8" fill="#c42cf0"/><rect x="660" y="447" width="1" height="6" fill="#22a6dc"/><rect x="660" y="414" width="1" height="33" fill="#22a6dc"/><rect x="661" y="465" width="1" height="7" fill="#ec8434"/><rect x="661" y="461" width="1" height="4" fill="#4a80ee"/><rect x="661" y="461" width="1" height="3" fill="#8090a8"/><rect x="661" y="455" width="1" height="6" fill="#5878e4"/><rect x="661" y="440" width="1" height="15" fill="#5878e4"/><rect x="661" y="427" width="1" height="13" fill="#c42cf0"/><rect x="662" y="461" width="1" height="11" fill="#4a80ee"/><rect x="662" y="461" width="1" height="2" fill="#22a6dc"/><rect x="662" y="449" width="1" height="12" fill="#22a6dc"/><rect x="662" y="442" width="1" height="7" fill="#c42cf0"/><rect x="663" y="460" width="1" height="12" fill="#4a80ee"/><rect x="663" y="450" width="1" height="10" fill="#c42cf0"/><rect x="663" y="441" width="1" height="9" fill="#c42cf0"/><rect x="663" y="432" width="1" height="9" fill="#5878e4"/><rect x="663" y="418" width="1" height="14" fill="#22a6dc"/><rect x="664" y="466" width="1" height="6" fill="#1f8a1f"/><rect x="664" y="461" width="1" height="5" fill="#4a80ee"/><rect x="664" y="447" width="1" height="14" fill="#c42cf0"/><rect x="664" y="437" width="1" height="10" fill="#c42cf0"/><rect x="665" y="462" width="1" height="10" fill="#4a80ee"/><rect x="665" y="459" width="1" height="3" fill="#c42cf0"/><rect x="665" y="455" width="1" height="4" fill="#22a6dc"/><rect x="665" y="452" width="1" height="3" fill="#c42cf0"/><rect x="666" y="460" width="1" height="12" fill="#4a80ee"/><rect x="666" y="451" width="1" height="9" fill="#c42cf0"/><rect x="666" y="443" width="1" height="8" fill="#22a6dc"/><rect x="666" y="408" width="1" height="35" fill="#22a6dc"/><rect x="667" y="466" width="1" height="6" fill="#1f8a1f"/><rect x="667" y="462" width="1" height="4" fill="#4a80ee"/><rect x="667" y="448" width="1" height="14" fill="#c42cf0"/><rect x="667" y="436" width="1" height="12" fill="#c42cf0"/><rect x="668" y="471" width="1" height="1" fill="#1f8a1f"/><rect x="668" y="461" width="1" height="10" fill="#4a80ee"/><rect x="668" y="448" width="1" height="13" fill="#5878e4"/><rect x="669" y="462" width="1" height="10" fill="#ec8434"/><rect x="669" y="460" width="1" height="2" fill="#4a80ee"/><rect x="669" y="448" width="1" height="12" fill="#c42cf0"/><rect x="669" y="439" width="1" height="9" fill="#c42cf0"/><rect x="669" y="424" width="1" height="15" fill="#5878e4"/><rect x="670" y="466" width="1" height="6" fill="#1f8a1f"/><rect x="670" y="458" width="1" height="8" fill="#ec8434"/><rect x="670" y="444" width="1" height="14" fill="#22a6dc"/><rect x="670" y="429" width="1" height="15" fill="#5878e4"/><rect x="670" y="415" width="1" height="14" fill="#c42cf0"/><rect x="671" y="471" width="1" height="1" fill="#1f8a1f"/><rect x="671" y="464" width="1" height="7" fill="#ec8434"/><rect x="671" y="462" width="1" height="2" fill="#4a80ee"/><rect x="671" y="462" width="1" height="2" fill="#22a6dc"/><rect x="671" y="457" width="1" height="5" fill="#c42cf0"/><rect x="671" y="449" width="1" height="8" fill="#22a6dc"/><rect x="672" y="464" width="1" height="8" fill="#ec8434"/><rect x="672" y="461" width="1" height="3" fill="#4a80ee"/><rect x="672" y="462" width="1" height="1" fill="#8090a8"/><rect x="672" y="453" width="1" height="8" fill="#22a6dc"/><rect x="672" y="435" width="1" height="18" fill="#5878e4"/><rect x="672" y="420" width="1" height="15" fill="#22a6dc"/><rect x="673" y="471" width="1" height="1" fill="#1f8a1f"/><rect x="673" y="460" width="1" height="11" fill="#ec8434"/><rect x="673" y="451" width="1" height="9" fill="#c42cf0"/><rect x="673" y="445" width="1" height="6" fill="#22a6dc"/><rect x="674" y="466" width="1" height="6" fill="#1f8a1f"/><rect x="674" y="455" width="1" height="11" fill="#ec8434"/><rect x="674" y="443" width="1" height="12" fill="#c42cf0"/><rect x="675" y="462" width="1" height="10" fill="#ec8434"/><rect x="675" y="461" width="1" height="1" fill="#4a80ee"/><rect x="675" y="457" width="1" height="4" fill="#c42cf0"/><rect x="675" y="452" width="1" height="5" fill="#c42cf0"/><rect x="675" y="422" width="1" height="30" fill="#22a6dc"/><rect x="676" y="466" width="1" height="6" fill="#1f8a1f"/><rect x="676" y="458" width="1" height="8" fill="#ec8434"/><rect x="676" y="443" width="1" height="15" fill="#c42cf0"/><rect x="677" y="464" width="1" height="8" fill="#ec8434"/><rect x="677" y="460" width="1" height="4" fill="#4a80ee"/><rect x="677" y="456" width="1" height="4" fill="#5878e4"/><rect x="677" y="451" width="1" height="5" fill="#22a6dc"/><rect x="677" y="448" width="1" height="3" fill="#c42cf0"/><rect x="678" y="469" width="1" height="3" fill="#1f8a1f"/><rect x="678" y="461" width="1" height="8" fill="#4a80ee"/><rect x="678" y="429" width="1" height="32" fill="#c42cf0"/><rect x="679" y="460" width="1" height="12" fill="#4a80ee"/><rect x="679" y="468" width="1" height="1" fill="#22a6dc"/><rect x="679" y="433" width="1" height="27" fill="#c42cf0"/><rect x="680" y="469" width="1" height="3" fill="#1f8a1f"/><rect x="680" y="462" width="1" height="7" fill="#4a80ee"/><rect x="680" y="468" width="1" height="1" fill="#8090a8"/><rect x="680" y="452" width="1" height="10" fill="#5878e4"/><rect x="681" y="469" width="1" height="3" fill="#ec8434"/><rect x="681" y="462" width="1" height="7" fill="#4a80ee"/><rect x="681" y="445" width="1" height="17" fill="#22a6dc"/><rect x="681" y="426" width="1" height="19" fill="#22a6dc"/><rect x="682" y="469" width="1" height="3" fill="#ec8434"/><rect x="682" y="460" width="1" height="9" fill="#4a80ee"/><rect x="682" y="467" width="1" height="2" fill="#22a6dc"/><rect x="682" y="451" width="1" height="9" fill="#5878e4"/><rect x="682" y="439" width="1" height="12" fill="#c42cf0"/><rect x="682" y="428" width="1" height="11" fill="#22a6dc"/><rect x="683" y="470" width="1" height="2" fill="#1f8a1f"/><rect x="683" y="466" width="1" height="4" fill="#ec8434"/><rect x="683" y="462" width="1" height="4" fill="#4a80ee"/><rect x="683" y="463" width="1" height="2" fill="#22a6dc"/><rect x="683" y="456" width="1" height="6" fill="#c42cf0"/><rect x="683" y="452" width="1" height="4" fill="#c42cf0"/><rect x="683" y="449" width="1" height="3" fill="#c42cf0"/><rect x="684" y="470" width="1" height="2" fill="#1f8a1f"/><rect x="684" y="461" width="1" height="9" fill="#4a80ee"/><rect x="684" y="469" width="1" height="1" fill="#22a6dc"/><rect x="684" y="454" width="1" height="7" fill="#22a6dc"/><rect x="684" y="443" width="1" height="11" fill="#c42cf0"/><rect x="684" y="431" width="1" height="12" fill="#c42cf0"/><rect x="685" y="461" width="1" height="11" fill="#4a80ee"/><rect x="685" y="449" width="1" height="12" fill="#c42cf0"/><rect x="685" y="438" width="1" height="11" fill="#c42cf0"/><rect x="686" y="461" width="1" height="11" fill="#4a80ee"/><rect x="686" y="451" width="1" height="10" fill="#22a6dc"/><rect x="686" y="444" width="1" height="7" fill="#c42cf0"/><rect x="687" y="460" width="1" height="12" fill="#4a80ee"/><rect x="687" y="441" width="1" height="19" fill="#5878e4"/><rect x="688" y="461" width="1" height="11" fill="#4a80ee"/><rect x="688" y="452" width="1" height="9" fill="#c42cf0"/><rect x="688" y="441" width="1" height="11" fill="#22a6dc"/><rect x="689" y="461" width="1" height="11" fill="#4a80ee"/><rect x="689" y="451" width="1" height="10" fill="#c42cf0"/><rect x="689" y="442" width="1" height="9" fill="#5878e4"/><rect x="690" y="466" width="1" height="6" fill="#1f8a1f"/><rect x="690" y="462" width="1" height="4" fill="#4a80ee"/><rect x="690" y="452" width="1" height="10" fill="#c42cf0"/><rect x="690" y="413" width="1" height="39" fill="#22a6dc"/><rect x="691" y="461" width="1" height="11" fill="#4a80ee"/><rect x="691" y="456" width="1" height="5" fill="#22a6dc"/><rect x="691" y="450" width="1" height="6" fill="#c42cf0"/><rect x="692" y="471" width="1" height="1" fill="#1f8a1f"/><rect x="692" y="461" width="1" height="10" fill="#4a80ee"/><rect x="692" y="461" width="1" height="1" fill="#8090a8"/><rect x="692" y="452" width="1" height="9" fill="#c42cf0"/><rect x="692" y="447" width="1" height="5" fill="#c42cf0"/><rect x="693" y="462" width="1" height="10" fill="#4a80ee"/><rect x="693" y="463" width="1" height="5" fill="#22a6dc"/><rect x="693" y="451" width="1" height="11" fill="#5878e4"/><rect x="693" y="436" width="1" height="15" fill="#22a6dc"/><rect x="693" y="408" width="1" height="28" fill="#22a6dc"/><rect x="694" y="460" width="1" height="12" fill="#4a80ee"/><rect x="694" y="467" width="1" height="4" fill="#22a6dc"/><rect x="694" y="444" width="1" height="16" fill="#c42cf0"/><rect x="694" y="435" width="1" height="9" fill="#22a6dc"/><rect x="694" y="434" width="1" height="1" fill="#5878e4"/><rect x="695" y="466" width="1" height="6" fill="#1f8a1f"/><rect x="695" y="461" width="1" height="5" fill="#4a80ee"/><rect x="695" y="447" width="1" height="14" fill="#c42cf0"/><rect x="695" y="434" width="1" height="13" fill="#22a6dc"/><rect x="695" y="432" width="1" height="2" fill="#5878e4"/><rect x="696" y="471" width="1" height="1" fill="#1f8a1f"/><rect x="696" y="462" width="1" height="9" fill="#4a80ee"/><rect x="696" y="444" width="1" height="18" fill="#22a6dc"/><rect x="696" y="424" width="1" height="20" fill="#5878e4"/><rect x="697" y="461" width="1" height="11" fill="#4a80ee"/><rect x="697" y="445" width="1" height="16" fill="#c42cf0"/><rect x="697" y="429" width="1" height="16" fill="#22a6dc"/><rect x="697" y="425" width="1" height="4" fill="#5878e4"/><rect x="698" y="461" width="1" height="11" fill="#4a80ee"/><rect x="698" y="449" width="1" height="12" fill="#22a6dc"/><rect x="699" y="470" width="1" height="2" fill="#1f8a1f"/><rect x="699" y="461" width="1" height="9" fill="#4a80ee"/><rect x="699" y="464" width="1" height="2" fill="#22a6dc"/><rect x="699" y="450" width="1" height="11" fill="#c42cf0"/><rect x="699" y="441" width="1" height="9" fill="#22a6dc"/><rect x="699" y="435" width="1" height="6" fill="#5878e4"/><rect x="700" y="471" width="1" height="1" fill="#1f8a1f"/><rect x="700" y="460" width="1" height="11" fill="#4a80ee"/><rect x="700" y="462" width="1" height="6" fill="#22a6dc"/><rect x="700" y="435" width="1" height="25" fill="#22a6dc"/><rect x="701" y="462" width="1" height="10" fill="#4a80ee"/><rect x="701" y="455" width="1" height="7" fill="#22a6dc"/><rect x="701" y="443" width="1" height="12" fill="#c42cf0"/><rect x="702" y="470" width="1" height="2" fill="#1f8a1f"/><rect x="702" y="461" width="1" height="9" fill="#4a80ee"/><rect x="702" y="443" width="1" height="18" fill="#c42cf0"/><rect x="702" y="426" width="1" height="17" fill="#22a6dc"/><rect x="702" y="421" width="1" height="5" fill="#5878e4"/><rect x="703" y="469" width="1" height="3" fill="#1f8a1f"/><rect x="703" y="462" width="1" height="7" fill="#ec8434"/><rect x="703" y="441" width="1" height="21" fill="#c42cf0"/><rect x="703" y="421" width="1" height="20" fill="#22a6dc"/><rect x="703" y="416" width="1" height="5" fill="#5878e4"/><rect x="704" y="470" width="1" height="2" fill="#1f8a1f"/><rect x="704" y="461" width="1" height="9" fill="#ec8434"/><rect x="704" y="440" width="1" height="21" fill="#c42cf0"/><rect x="704" y="419" width="1" height="21" fill="#22a6dc"/><rect x="704" y="413" width="1" height="6" fill="#5878e4"/><rect x="705" y="464" width="1" height="8" fill="#ec8434"/><rect x="705" y="462" width="1" height="2" fill="#4a80ee"/><rect x="705" y="463" width="1" height="1" fill="#22a6dc"/><rect x="705" y="455" width="1" height="7" fill="#22a6dc"/><rect x="705" y="446" width="1" height="9" fill="#c42cf0"/><rect x="705" y="440" width="1" height="6" fill="#22a6dc"/><rect x="705" y="415" width="1" height="25" fill="#22a6dc"/><rect x="706" y="466" width="1" height="6" fill="#ec8434"/><rect x="706" y="460" width="1" height="6" fill="#4a80ee"/><rect x="706" y="438" width="1" height="22" fill="#c42cf0"/><rect x="706" y="419" width="1" height="19" fill="#22a6dc"/><rect x="706" y="412" width="1" height="7" fill="#5878e4"/><rect x="707" y="464" width="1" height="8" fill="#ec8434"/><rect x="707" y="461" width="1" height="3" fill="#4a80ee"/><rect x="707" y="437" width="1" height="24" fill="#c42cf0"/><rect x="707" y="415" width="1" height="22" fill="#22a6dc"/><rect x="707" y="409" width="1" height="6" fill="#5878e4"/><rect x="708" y="471" width="1" height="1" fill="#1f8a1f"/><rect x="708" y="462" width="1" height="9" fill="#ec8434"/><rect x="708" y="461" width="1" height="1" fill="#4a80ee"/><rect x="708" y="455" width="1" height="6" fill="#c42cf0"/><rect x="708" y="450" width="1" height="5" fill="#c42cf0"/><rect x="708" y="445" width="1" height="5" fill="#c42cf0"/><rect x="709" y="470" width="1" height="2" fill="#1f8a1f"/><rect x="709" y="462" width="1" height="8" fill="#4a80ee"/><rect x="709" y="447" width="1" height="15" fill="#c42cf0"/><rect x="709" y="432" width="1" height="15" fill="#22a6dc"/><rect x="709" y="428" width="1" height="4" fill="#5878e4"/><rect x="710" y="471" width="1" height="1" fill="#1f8a1f"/><rect x="710" y="461" width="1" height="10" fill="#4a80ee"/><rect x="710" y="450" width="1" height="11" fill="#c42cf0"/><rect x="710" y="442" width="1" height="8" fill="#22a6dc"/><rect x="710" y="438" width="1" height="4" fill="#5878e4"/><rect x="711" y="461" width="1" height="11" fill="#4a80ee"/><rect x="711" y="442" width="1" height="19" fill="#c42cf0"/><rect x="711" y="431" width="1" height="11" fill="#22a6dc"/><rect x="711" y="426" width="1" height="5" fill="#5878e4"/><rect x="712" y="469" width="1" height="3" fill="#1f8a1f"/><rect x="712" y="461" width="1" height="8" fill="#4a80ee"/><rect x="712" y="468" width="1" height="1" fill="#8090a8"/><rect x="712" y="444" width="1" height="17" fill="#c42cf0"/><rect x="712" y="428" width="1" height="16" fill="#22a6dc"/><rect x="712" y="425" width="1" height="3" fill="#5878e4"/><rect x="713" y="471" width="1" height="1" fill="#1f8a1f"/><rect x="713" y="461" width="1" height="10" fill="#4a80ee"/><rect x="713" y="455" width="1" height="6" fill="#c42cf0"/><rect x="713" y="452" width="1" height="3" fill="#c42cf0"/><rect x="713" y="447" width="1" height="5" fill="#c42cf0"/><rect x="714" y="471" width="1" height="1" fill="#1f8a1f"/><rect x="714" y="464" width="1" height="7" fill="#ec8434"/><rect x="714" y="462" width="1" height="2" fill="#4a80ee"/><rect x="714" y="451" width="1" height="11" fill="#c42cf0"/><rect x="714" y="442" width="1" height="9" fill="#22a6dc"/><rect x="714" y="436" width="1" height="6" fill="#5878e4"/><rect x="715" y="470" width="1" height="2" fill="#1f8a1f"/><rect x="715" y="463" width="1" height="7" fill="#ec8434"/><rect x="715" y="462" width="1" height="1" fill="#4a80ee"/><rect x="715" y="446" width="1" height="16" fill="#c42cf0"/><rect x="715" y="428" width="1" height="18" fill="#22a6dc"/><rect x="715" y="421" width="1" height="7" fill="#5878e4"/><rect x="716" y="471" width="1" height="1" fill="#1f8a1f"/><rect x="716" y="468" width="1" height="3" fill="#ec8434"/><rect x="716" y="461" width="1" height="7" fill="#4a80ee"/><rect x="716" y="462" width="1" height="4" fill="#22a6dc"/><rect x="716" y="447" width="1" height="14" fill="#c42cf0"/><rect x="716" y="436" width="1" height="11" fill="#22a6dc"/><rect x="716" y="429" width="1" height="7" fill="#5878e4"/><rect x="717" y="470" width="1" height="2" fill="#1f8a1f"/><rect x="717" y="463" width="1" height="7" fill="#ec8434"/><rect x="717" y="462" width="1" height="1" fill="#4a80ee"/><rect x="717" y="441" width="1" height="21" fill="#c42cf0"/><rect x="717" y="424" width="1" height="17" fill="#22a6dc"/><rect x="717" y="418" width="1" height="6" fill="#5878e4"/><rect x="717" y="410" width="1" height="8" fill="#5878e4"/><rect x="718" y="467" width="1" height="5" fill="#ec8434"/><rect x="718" y="461" width="1" height="6" fill="#4a80ee"/><rect x="718" y="461" width="1" height="3" fill="#8090a8"/><rect x="718" y="447" width="1" height="14" fill="#c42cf0"/><rect x="718" y="435" width="1" height="12" fill="#22a6dc"/><rect x="718" y="427" width="1" height="8" fill="#5878e4"/><rect x="719" y="469" width="1" height="3" fill="#ec8434"/><rect x="719" y="462" width="1" height="7" fill="#4a80ee"/><rect x="719" y="442" width="1" height="20" fill="#c42cf0"/><rect x="719" y="422" width="1" height="20" fill="#22a6dc"/><rect x="719" y="416" width="1" height="6" fill="#5878e4"/><rect x="720" y="467" width="1" height="5" fill="#ec8434"/><rect x="720" y="461" width="1" height="6" fill="#4a80ee"/><rect x="720" y="462" width="1" height="3" fill="#22a6dc"/><rect x="720" y="442" width="1" height="19" fill="#c42cf0"/><rect x="720" y="424" width="1" height="18" fill="#22a6dc"/><rect x="720" y="416" width="1" height="8" fill="#5878e4"/><rect x="721" y="462" width="1" height="10" fill="#4a80ee"/><rect x="721" y="463" width="1" height="7" fill="#22a6dc"/><rect x="721" y="441" width="1" height="21" fill="#c42cf0"/><rect x="721" y="420" width="1" height="21" fill="#22a6dc"/><rect x="721" y="411" width="1" height="9" fill="#5878e4"/><rect x="722" y="462" width="1" height="10" fill="#4a80ee"/><rect x="722" y="466" width="1" height="1" fill="#8090a8"/><rect x="722" y="453" width="1" height="9" fill="#c42cf0"/><rect x="722" y="446" width="1" height="7" fill="#22a6dc"/><rect x="722" y="442" width="1" height="4" fill="#5878e4"/><rect x="723" y="462" width="1" height="10" fill="#4a80ee"/><rect x="723" y="448" width="1" height="14" fill="#c42cf0"/><rect x="723" y="433" width="1" height="15" fill="#22a6dc"/><rect x="723" y="429" width="1" height="4" fill="#5878e4"/><rect x="724" y="471" width="1" height="1" fill="#1f8a1f"/><rect x="724" y="460" width="1" height="11" fill="#4a80ee"/><rect x="724" y="464" width="1" height="7" fill="#22a6dc"/><rect x="724" y="444" width="1" height="16" fill="#c42cf0"/><rect x="724" y="431" width="1" height="13" fill="#22a6dc"/><rect x="724" y="427" width="1" height="4" fill="#5878e4"/><rect x="725" y="462" width="1" height="10" fill="#4a80ee"/><rect x="725" y="471" width="1" height="1" fill="#22a6dc"/><rect x="725" y="447" width="1" height="15" fill="#c42cf0"/><rect x="725" y="435" width="1" height="12" fill="#22a6dc"/><rect x="725" y="433" width="1" height="2" fill="#5878e4"/><rect x="726" y="466" width="1" height="6" fill="#1f8a1f"/><rect x="726" y="461" width="1" height="5" fill="#4a80ee"/><rect x="726" y="444" width="1" height="17" fill="#c42cf0"/><rect x="726" y="429" width="1" height="15" fill="#22a6dc"/><rect x="726" y="424" width="1" height="5" fill="#5878e4"/><rect x="727" y="461" width="1" height="11" fill="#4a80ee"/><rect x="727" y="447" width="1" height="14" fill="#c42cf0"/><rect x="727" y="434" width="1" height="13" fill="#22a6dc"/><rect x="727" y="429" width="1" height="5" fill="#5878e4"/><rect x="728" y="460" width="1" height="12" fill="#4a80ee"/><rect x="728" y="461" width="1" height="1" fill="#22a6dc"/><rect x="728" y="448" width="1" height="12" fill="#c42cf0"/><rect x="728" y="440" width="1" height="8" fill="#22a6dc"/><rect x="728" y="435" width="1" height="5" fill="#5878e4"/><rect x="729" y="471" width="1" height="1" fill="#1f8a1f"/><rect x="729" y="460" width="1" height="11" fill="#4a80ee"/><rect x="729" y="446" width="1" height="14" fill="#c42cf0"/><rect x="729" y="435" width="1" height="11" fill="#22a6dc"/><rect x="729" y="429" width="1" height="6" fill="#5878e4"/><rect x="730" y="461" width="1" height="11" fill="#4a80ee"/><rect x="730" y="444" width="1" height="17" fill="#c42cf0"/><rect x="730" y="427" width="1" height="17" fill="#22a6dc"/><rect x="730" y="421" width="1" height="6" fill="#5878e4"/><rect x="730" y="407" width="1" height="14" fill="#5878e4"/><rect x="731" y="471" width="1" height="1" fill="#1f8a1f"/><rect x="731" y="461" width="1" height="10" fill="#4a80ee"/><rect x="731" y="440" width="1" height="21" fill="#c42cf0"/><rect x="731" y="423" width="1" height="17" fill="#22a6dc"/><rect x="731" y="419" width="1" height="4" fill="#5878e4"/><rect x="732" y="471" width="1" height="1" fill="#1f8a1f"/><rect x="732" y="461" width="1" height="10" fill="#4a80ee"/><rect x="732" y="464" width="1" height="3" fill="#22a6dc"/><rect x="732" y="443" width="1" height="18" fill="#c42cf0"/><rect x="732" y="428" width="1" height="15" fill="#22a6dc"/><rect x="732" y="422" width="1" height="6" fill="#5878e4"/><rect x="733" y="462" width="1" height="10" fill="#4a80ee"/><rect x="733" y="442" width="1" height="20" fill="#c42cf0"/><rect x="733" y="421" width="1" height="21" fill="#22a6dc"/><rect x="733" y="414" width="1" height="7" fill="#5878e4"/><rect x="734" y="466" width="1" height="6" fill="#1f8a1f"/><rect x="734" y="461" width="1" height="5" fill="#4a80ee"/><rect x="734" y="465" width="1" height="1" fill="#22a6dc"/><rect x="734" y="446" width="1" height="15" fill="#c42cf0"/><rect x="734" y="435" width="1" height="11" fill="#22a6dc"/><rect x="734" y="430" width="1" height="5" fill="#5878e4"/><rect x="735" y="460" width="1" height="12" fill="#4a80ee"/><rect x="735" y="469" width="1" height="2" fill="#22a6dc"/><rect x="735" y="440" width="1" height="20" fill="#c42cf0"/><rect x="735" y="421" width="1" height="19" fill="#22a6dc"/><rect x="735" y="412" width="1" height="9" fill="#5878e4"/><rect x="736" y="461" width="1" height="11" fill="#4a80ee"/><rect x="736" y="446" width="1" height="15" fill="#c42cf0"/><rect x="736" y="431" width="1" height="15" fill="#22a6dc"/><rect x="736" y="427" width="1" height="4" fill="#5878e4"/><rect x="737" y="461" width="1" height="11" fill="#4a80ee"/><rect x="737" y="444" width="1" height="17" fill="#c42cf0"/><rect x="737" y="432" width="1" height="12" fill="#22a6dc"/><rect x="737" y="428" width="1" height="4" fill="#5878e4"/><rect x="738" y="461" width="1" height="11" fill="#4a80ee"/><rect x="738" y="451" width="1" height="10" fill="#c42cf0"/><rect x="738" y="445" width="1" height="6" fill="#22a6dc"/><rect x="738" y="439" width="1" height="6" fill="#5878e4"/><rect x="739" y="469" width="1" height="3" fill="#1f8a1f"/><rect x="739" y="462" width="1" height="7" fill="#ec8434"/><rect x="739" y="461" width="1" height="1" fill="#4a80ee"/><rect x="739" y="448" width="1" height="13" fill="#c42cf0"/><rect x="739" y="434" width="1" height="14" fill="#22a6dc"/><rect x="739" y="429" width="1" height="5" fill="#5878e4"/><rect x="740" y="466" width="1" height="6" fill="#ec8434"/><rect x="740" y="462" width="1" height="4" fill="#4a80ee"/><rect x="740" y="462" width="1" height="3" fill="#22a6dc"/><rect x="740" y="446" width="1" height="16" fill="#c42cf0"/><rect x="740" y="429" width="1" height="17" fill="#22a6dc"/><rect x="740" y="425" width="1" height="4" fill="#5878e4"/><rect x="740" y="416" width="1" height="9" fill="#22a6dc"/><rect x="741" y="464" width="1" height="8" fill="#ec8434"/><rect x="741" y="460" width="1" height="4" fill="#4a80ee"/><rect x="741" y="445" width="1" height="15" fill="#c42cf0"/><rect x="741" y="432" width="1" height="13" fill="#22a6dc"/><rect x="741" y="427" width="1" height="5" fill="#5878e4"/><rect x="742" y="466" width="1" height="6" fill="#ec8434"/><rect x="742" y="461" width="1" height="5" fill="#4a80ee"/><rect x="742" y="446" width="1" height="15" fill="#c42cf0"/><rect x="742" y="429" width="1" height="17" fill="#22a6dc"/><rect x="742" y="423" width="1" height="6" fill="#5878e4"/><rect x="742" y="410" width="1" height="13" fill="#22a6dc"/><rect x="743" y="471" width="1" height="1" fill="#1f8a1f"/><rect x="743" y="463" width="1" height="8" fill="#ec8434"/><rect x="743" y="460" width="1" height="3" fill="#4a80ee"/><rect x="743" y="444" width="1" height="16" fill="#c42cf0"/><rect x="743" y="429" width="1" height="15" fill="#22a6dc"/><rect x="743" y="422" width="1" height="7" fill="#5878e4"/><rect x="744" y="471" width="1" height="1" fill="#1f8a1f"/><rect x="744" y="461" width="1" height="10" fill="#ec8434"/><rect x="744" y="447" width="1" height="14" fill="#c42cf0"/><rect x="744" y="435" width="1" height="12" fill="#22a6dc"/><rect x="744" y="429" width="1" height="6" fill="#5878e4"/><rect x="745" y="463" width="1" height="9" fill="#ec8434"/><rect x="745" y="462" width="1" height="1" fill="#4a80ee"/><rect x="745" y="444" width="1" height="18" fill="#c42cf0"/><rect x="745" y="426" width="1" height="18" fill="#22a6dc"/><rect x="745" y="419" width="1" height="7" fill="#5878e4"/><rect x="746" y="471" width="1" height="1" fill="#1f8a1f"/><rect x="746" y="461" width="1" height="10" fill="#ec8434"/><rect x="746" y="446" width="1" height="15" fill="#c42cf0"/><rect x="746" y="435" width="1" height="11" fill="#22a6dc"/><rect x="746" y="427" width="1" height="8" fill="#5878e4"/><rect x="747" y="461" width="1" height="11" fill="#ec8434"/><rect x="747" y="442" width="1" height="19" fill="#c42cf0"/><rect x="747" y="422" width="1" height="20" fill="#22a6dc"/><rect x="747" y="415" width="1" height="7" fill="#5878e4"/><rect x="748" y="465" width="1" height="7" fill="#ec8434"/><rect x="748" y="462" width="1" height="3" fill="#4a80ee"/><rect x="748" y="442" width="1" height="20" fill="#c42cf0"/><rect x="748" y="421" width="1" height="21" fill="#22a6dc"/><rect x="748" y="413" width="1" height="8" fill="#5878e4"/><rect x="749" y="462" width="1" height="10" fill="#ec8434"/><rect x="749" y="460" width="1" height="2" fill="#4a80ee"/><rect x="749" y="436" width="1" height="24" fill="#c42cf0"/><rect x="749" y="416" width="1" height="20" fill="#22a6dc"/><rect x="749" y="410" width="1" height="6" fill="#5878e4"/><rect x="750" y="471" width="1" height="1" fill="#1f8a1f"/><rect x="750" y="464" width="1" height="7" fill="#ec8434"/><rect x="750" y="461" width="1" height="3" fill="#4a80ee"/><rect x="750" y="448" width="1" height="13" fill="#c42cf0"/><rect x="750" y="437" width="1" height="11" fill="#22a6dc"/><rect x="750" y="433" width="1" height="4" fill="#5878e4"/><rect x="751" y="464" width="1" height="8" fill="#ec8434"/><rect x="751" y="461" width="1" height="3" fill="#4a80ee"/><rect x="751" y="463" width="1" height="1" fill="#22a6dc"/><rect x="751" y="445" width="1" height="16" fill="#c42cf0"/><rect x="751" y="433" width="1" height="12" fill="#22a6dc"/><rect x="751" y="429" width="1" height="4" fill="#5878e4"/><rect x="752" y="466" width="1" height="6" fill="#1f8a1f"/><rect x="752" y="455" width="1" height="11" fill="#ec8434"/><rect x="752" y="442" width="1" height="13" fill="#c42cf0"/><rect x="752" y="426" width="1" height="16" fill="#22a6dc"/><rect x="752" y="424" width="1" height="2" fill="#5878e4"/><rect x="752" y="416" width="1" height="8" fill="#22a6dc"/><rect x="753" y="471" width="1" height="1" fill="#1f8a1f"/><rect x="753" y="466" width="1" height="5" fill="#ec8434"/><rect x="753" y="462" width="1" height="4" fill="#4a80ee"/><rect x="753" y="446" width="1" height="16" fill="#c42cf0"/><rect x="753" y="432" width="1" height="14" fill="#22a6dc"/><rect x="753" y="428" width="1" height="4" fill="#5878e4"/><rect x="754" y="468" width="1" height="4" fill="#ec8434"/><rect x="754" y="460" width="1" height="8" fill="#4a80ee"/><rect x="754" y="461" width="1" height="2" fill="#8090a8"/><rect x="754" y="447" width="1" height="13" fill="#c42cf0"/><rect x="754" y="437" width="1" height="10" fill="#22a6dc"/><rect x="754" y="434" width="1" height="3" fill="#5878e4"/><rect x="755" y="466" width="1" height="6" fill="#ec8434"/><rect x="755" y="460" width="1" height="6" fill="#4a80ee"/><rect x="755" y="443" width="1" height="17" fill="#c42cf0"/><rect x="755" y="430" width="1" height="13" fill="#22a6dc"/><rect x="755" y="426" width="1" height="4" fill="#5878e4"/><rect x="756" y="468" width="1" height="4" fill="#ec8434"/><rect x="756" y="460" width="1" height="8" fill="#4a80ee"/><rect x="756" y="447" width="1" height="13" fill="#c42cf0"/><rect x="756" y="437" width="1" height="10" fill="#22a6dc"/><rect x="756" y="434" width="1" height="3" fill="#5878e4"/><rect x="757" y="469" width="1" height="3" fill="#1f8a1f"/><rect x="757" y="463" width="1" height="6" fill="#ec8434"/><rect x="757" y="462" width="1" height="1" fill="#4a80ee"/><rect x="757" y="451" width="1" height="11" fill="#c42cf0"/><rect x="757" y="443" width="1" height="8" fill="#22a6dc"/><rect x="757" y="436" width="1" height="7" fill="#5878e4"/><rect x="757" y="413" width="1" height="23" fill="#22a6dc"/><rect x="758" y="466" width="1" height="6" fill="#1f8a1f"/><rect x="758" y="462" width="1" height="4" fill="#ec8434"/><rect x="758" y="460" width="1" height="2" fill="#4a80ee"/><rect x="758" y="439" width="1" height="21" fill="#c42cf0"/><rect x="758" y="423" width="1" height="16" fill="#22a6dc"/><rect x="758" y="418" width="1" height="5" fill="#5878e4"/><rect x="759" y="464" width="1" height="8" fill="#ec8434"/><rect x="759" y="461" width="1" height="3" fill="#4a80ee"/><rect x="759" y="461" width="1" height="1" fill="#8090a8"/><rect x="759" y="444" width="1" height="17" fill="#c42cf0"/><rect x="759" y="427" width="1" height="17" fill="#22a6dc"/><rect x="759" y="419" width="1" height="8" fill="#5878e4"/><rect x="759" y="406" width="1" height="13" fill="#22a6dc"/><rect x="760" y="469" width="1" height="3" fill="#1f8a1f"/><rect x="760" y="461" width="1" height="8" fill="#ec8434"/><rect x="760" y="439" width="1" height="22" fill="#c42cf0"/><rect x="760" y="422" width="1" height="17" fill="#22a6dc"/><rect x="760" y="413" width="1" height="9" fill="#5878e4"/><rect x="761" y="466" width="1" height="6" fill="#ec8434"/><rect x="761" y="462" width="1" height="4" fill="#4a80ee"/><rect x="761" y="446" width="1" height="16" fill="#c42cf0"/><rect x="761" y="433" width="1" height="13" fill="#22a6dc"/><rect x="761" y="426" width="1" height="7" fill="#5878e4"/><rect x="762" y="471" width="1" height="1" fill="#1f8a1f"/><rect x="762" y="462" width="1" height="9" fill="#ec8434"/><rect x="762" y="439" width="1" height="23" fill="#c42cf0"/><rect x="762" y="422" width="1" height="17" fill="#22a6dc"/><rect x="762" y="414" width="1" height="8" fill="#5878e4"/><rect x="763" y="466" width="1" height="6" fill="#ec8434"/><rect x="763" y="461" width="1" height="5" fill="#4a80ee"/><rect x="763" y="441" width="1" height="20" fill="#c42cf0"/><rect x="763" y="420" width="1" height="21" fill="#22a6dc"/><rect x="763" y="411" width="1" height="9" fill="#5878e4"/><rect x="764" y="465" width="1" height="7" fill="#ec8434"/><rect x="764" y="461" width="1" height="4" fill="#4a80ee"/><rect x="764" y="464" width="1" height="1" fill="#8090a8"/><rect x="764" y="450" width="1" height="11" fill="#c42cf0"/><rect x="764" y="441" width="1" height="9" fill="#22a6dc"/><rect x="764" y="439" width="1" height="2" fill="#5878e4"/><rect x="765" y="464" width="1" height="8" fill="#ec8434"/><rect x="765" y="462" width="1" height="2" fill="#4a80ee"/><rect x="765" y="462" width="1" height="1" fill="#8090a8"/><rect x="765" y="449" width="1" height="13" fill="#c42cf0"/><rect x="765" y="437" width="1" height="12" fill="#22a6dc"/><rect x="765" y="434" width="1" height="3" fill="#5878e4"/><rect x="766" y="462" width="1" height="10" fill="#ec8434"/><rect x="766" y="461" width="1" height="1" fill="#4a80ee"/><rect x="766" y="449" width="1" height="12" fill="#c42cf0"/><rect x="766" y="436" width="1" height="13" fill="#22a6dc"/><rect x="766" y="432" width="1" height="4" fill="#5878e4"/><rect x="766" y="407" width="1" height="25" fill="#5878e4"/><rect x="767" y="462" width="1" height="10" fill="#ec8434"/><rect x="767" y="461" width="1" height="1" fill="#4a80ee"/><rect x="767" y="445" width="1" height="16" fill="#c42cf0"/><rect x="767" y="429" width="1" height="16" fill="#22a6dc"/><rect x="767" y="423" width="1" height="6" fill="#5878e4"/><rect x="768" y="471" width="1" height="1" fill="#1f8a1f"/><rect x="768" y="463" width="1" height="8" fill="#ec8434"/><rect x="768" y="460" width="1" height="3" fill="#4a80ee"/><rect x="768" y="446" width="1" height="14" fill="#c42cf0"/><rect x="768" y="433" width="1" height="13" fill="#22a6dc"/><rect x="768" y="430" width="1" height="3" fill="#5878e4"/><rect x="769" y="469" width="1" height="3" fill="#1f8a1f"/><rect x="769" y="459" width="1" height="10" fill="#ec8434"/><rect x="769" y="444" width="1" height="15" fill="#c42cf0"/><rect x="769" y="432" width="1" height="12" fill="#22a6dc"/><rect x="769" y="427" width="1" height="5" fill="#5878e4"/><rect x="770" y="466" width="1" height="6" fill="#1f8a1f"/><rect x="770" y="460" width="1" height="6" fill="#ec8434"/><rect x="770" y="442" width="1" height="18" fill="#c42cf0"/><rect x="770" y="426" width="1" height="16" fill="#22a6dc"/><rect x="770" y="420" width="1" height="6" fill="#5878e4"/><rect x="771" y="470" width="1" height="2" fill="#1f8a1f"/><rect x="771" y="462" width="1" height="8" fill="#ec8434"/><rect x="771" y="450" width="1" height="12" fill="#c42cf0"/><rect x="771" y="441" width="1" height="9" fill="#22a6dc"/><rect x="771" y="436" width="1" height="5" fill="#5878e4"/><rect x="772" y="464" width="1" height="8" fill="#ec8434"/><rect x="772" y="461" width="1" height="3" fill="#4a80ee"/><rect x="772" y="463" width="1" height="1" fill="#22a6dc"/><rect x="772" y="441" width="1" height="20" fill="#c42cf0"/><rect x="772" y="423" width="1" height="18" fill="#22a6dc"/><rect x="772" y="418" width="1" height="5" fill="#5878e4"/><rect x="773" y="470" width="1" height="2" fill="#1f8a1f"/><rect x="773" y="462" width="1" height="8" fill="#ec8434"/><rect x="773" y="460" width="1" height="2" fill="#4a80ee"/><rect x="773" y="449" width="1" height="11" fill="#c42cf0"/><rect x="773" y="439" width="1" height="10" fill="#22a6dc"/><rect x="773" y="432" width="1" height="7" fill="#5878e4"/><rect x="774" y="469" width="1" height="3" fill="#1f8a1f"/><rect x="774" y="460" width="1" height="9" fill="#4a80ee"/><rect x="774" y="439" width="1" height="21" fill="#c42cf0"/><rect x="774" y="422" width="1" height="17" fill="#22a6dc"/><rect x="774" y="414" width="1" height="8" fill="#5878e4"/><rect x="775" y="460" width="1" height="12" fill="#4a80ee"/><rect x="775" y="439" width="1" height="21" fill="#c42cf0"/><rect x="775" y="418" width="1" height="21" fill="#22a6dc"/><rect x="775" y="409" width="1" height="9" fill="#5878e4"/><rect x="776" y="471" width="1" height="1" fill="#1f8a1f"/><rect x="776" y="462" width="1" height="9" fill="#4a80ee"/><rect x="776" y="463" width="1" height="4" fill="#8090a8"/><rect x="776" y="448" width="1" height="14" fill="#c42cf0"/><rect x="776" y="435" width="1" height="13" fill="#22a6dc"/><rect x="776" y="429" width="1" height="6" fill="#5878e4"/><rect x="777" y="471" width="1" height="1" fill="#1f8a1f"/><rect x="777" y="461" width="1" height="10" fill="#4a80ee"/><rect x="777" y="441" width="1" height="20" fill="#c42cf0"/><rect x="777" y="423" width="1" height="18" fill="#22a6dc"/><rect x="777" y="416" width="1" height="7" fill="#5878e4"/><rect x="778" y="471" width="1" height="1" fill="#1f8a1f"/><rect x="778" y="462" width="1" height="9" fill="#4a80ee"/><rect x="778" y="446" width="1" height="16" fill="#c42cf0"/><rect x="778" y="433" width="1" height="13" fill="#22a6dc"/><rect x="778" y="428" width="1" height="5" fill="#5878e4"/><rect x="779" y="466" width="1" height="6" fill="#1f8a1f"/><rect x="779" y="461" width="1" height="5" fill="#4a80ee"/><rect x="779" y="465" width="1" height="1" fill="#22a6dc"/><rect x="779" y="444" width="1" height="17" fill="#c42cf0"/><rect x="779" y="434" width="1" height="10" fill="#22a6dc"/><rect x="779" y="432" width="1" height="2" fill="#5878e4"/><rect x="779" y="410" width="1" height="22" fill="#22a6dc"/><rect x="780" y="470" width="1" height="2" fill="#1f8a1f"/><rect x="780" y="460" width="1" height="10" fill="#4a80ee"/><rect x="780" y="463" width="1" height="2" fill="#22a6dc"/><rect x="780" y="445" width="1" height="15" fill="#c42cf0"/><rect x="780" y="432" width="1" height="13" fill="#22a6dc"/><rect x="780" y="429" width="1" height="3" fill="#5878e4"/><rect x="781" y="471" width="1" height="1" fill="#1f8a1f"/><rect x="781" y="461" width="1" height="10" fill="#4a80ee"/><rect x="781" y="470" width="1" height="1" fill="#22a6dc"/><rect x="781" y="448" width="1" height="13" fill="#c42cf0"/><rect x="781" y="437" width="1" height="11" fill="#22a6dc"/><rect x="781" y="433" width="1" height="4" fill="#5878e4"/><rect x="782" y="471" width="1" height="1" fill="#1f8a1f"/><rect x="782" y="462" width="1" height="9" fill="#4a80ee"/><rect x="782" y="451" width="1" height="11" fill="#c42cf0"/><rect x="782" y="442" width="1" height="9" fill="#22a6dc"/><rect x="782" y="438" width="1" height="4" fill="#5878e4"/><rect x="782" y="410" width="1" height="28" fill="#5878e4"/><rect x="783" y="466" width="1" height="6" fill="#1f8a1f"/><rect x="783" y="461" width="1" height="5" fill="#4a80ee"/><rect x="783" y="462" width="1" height="1" fill="#22a6dc"/><rect x="783" y="448" width="1" height="13" fill="#c42cf0"/><rect x="783" y="439" width="1" height="9" fill="#22a6dc"/><rect x="783" y="434" width="1" height="5" fill="#5878e4"/><rect x="784" y="461" width="1" height="11" fill="#4a80ee"/><rect x="784" y="467" width="1" height="3" fill="#8090a8"/><rect x="784" y="446" width="1" height="15" fill="#c42cf0"/><rect x="784" y="430" width="1" height="16" fill="#22a6dc"/><rect x="784" y="423" width="1" height="7" fill="#5878e4"/><rect x="784" y="411" width="1" height="12" fill="#5878e4"/><rect x="785" y="470" width="1" height="2" fill="#1f8a1f"/><rect x="785" y="461" width="1" height="9" fill="#4a80ee"/><rect x="785" y="441" width="1" height="20" fill="#c42cf0"/><rect x="785" y="421" width="1" height="20" fill="#22a6dc"/><rect x="785" y="415" width="1" height="6" fill="#5878e4"/><rect x="786" y="471" width="1" height="1" fill="#1f8a1f"/><rect x="786" y="461" width="1" height="10" fill="#4a80ee"/><rect x="786" y="447" width="1" height="14" fill="#c42cf0"/><rect x="786" y="436" width="1" height="11" fill="#22a6dc"/><rect x="786" y="428" width="1" height="8" fill="#5878e4"/><rect x="787" y="462" width="1" height="10" fill="#4a80ee"/><rect x="787" y="470" width="1" height="1" fill="#22a6dc"/><rect x="787" y="445" width="1" height="17" fill="#c42cf0"/><rect x="787" y="426" width="1" height="19" fill="#22a6dc"/><rect x="787" y="420" width="1" height="6" fill="#5878e4"/><rect x="787" y="409" width="1" height="11" fill="#22a6dc"/><rect x="788" y="469" width="1" height="3" fill="#1f8a1f"/><rect x="788" y="462" width="1" height="7" fill="#4a80ee"/><rect x="788" y="462" width="1" height="3" fill="#22a6dc"/><rect x="788" y="442" width="1" height="20" fill="#c42cf0"/><rect x="788" y="423" width="1" height="19" fill="#22a6dc"/><rect x="788" y="415" width="1" height="8" fill="#5878e4"/><rect x="789" y="462" width="1" height="10" fill="#4a80ee"/><rect x="789" y="448" width="1" height="14" fill="#c42cf0"/><rect x="789" y="438" width="1" height="10" fill="#22a6dc"/><rect x="789" y="432" width="1" height="6" fill="#5878e4"/><rect x="790" y="462" width="1" height="10" fill="#4a80ee"/><rect x="790" y="442" width="1" height="20" fill="#c42cf0"/><rect x="790" y="421" width="1" height="21" fill="#22a6dc"/><rect x="790" y="413" width="1" height="8" fill="#5878e4"/><rect x="791" y="462" width="1" height="10" fill="#4a80ee"/><rect x="791" y="442" width="1" height="20" fill="#c42cf0"/><rect x="791" y="420" width="1" height="22" fill="#22a6dc"/><rect x="791" y="411" width="1" height="9" fill="#5878e4"/><rect x="792" y="462" width="1" height="10" fill="#4a80ee"/><rect x="792" y="445" width="1" height="17" fill="#c42cf0"/><rect x="792" y="432" width="1" height="13" fill="#22a6dc"/><rect x="792" y="428" width="1" height="4" fill="#5878e4"/><rect x="793" y="462" width="1" height="10" fill="#4a80ee"/><rect x="793" y="451" width="1" height="11" fill="#c42cf0"/><rect x="793" y="443" width="1" height="8" fill="#22a6dc"/><rect x="793" y="438" width="1" height="5" fill="#5878e4"/><rect x="794" y="462" width="1" height="10" fill="#4a80ee"/><rect x="794" y="452" width="1" height="10" fill="#c42cf0"/><rect x="794" y="445" width="1" height="7" fill="#22a6dc"/><rect x="794" y="440" width="1" height="5" fill="#5878e4"/><rect x="795" y="462" width="1" height="10" fill="#4a80ee"/><rect x="795" y="451" width="1" height="11" fill="#c42cf0"/><rect x="795" y="441" width="1" height="10" fill="#22a6dc"/><rect x="795" y="436" width="1" height="5" fill="#5878e4"/><rect x="796" y="462" width="1" height="10" fill="#4a80ee"/><rect x="796" y="446" width="1" height="16" fill="#c42cf0"/><rect x="796" y="433" width="1" height="13" fill="#22a6dc"/><rect x="796" y="426" width="1" height="7" fill="#5878e4"/><rect x="796" y="414" width="1" height="12" fill="#5878e4"/><rect x="797" y="462" width="1" height="10" fill="#4a80ee"/><rect x="797" y="449" width="1" height="13" fill="#c42cf0"/><rect x="797" y="440" width="1" height="9" fill="#22a6dc"/><rect x="797" y="435" width="1" height="5" fill="#5878e4"/><rect x="798" y="462" width="1" height="10" fill="#4a80ee"/><rect x="798" y="449" width="1" height="13" fill="#c42cf0"/><rect x="798" y="441" width="1" height="8" fill="#22a6dc"/><rect x="798" y="434" width="1" height="7" fill="#5878e4"/><rect x="799" y="462" width="1" height="10" fill="#4a80ee"/><rect x="799" y="444" width="1" height="18" fill="#c42cf0"/><rect x="799" y="428" width="1" height="16" fill="#22a6dc"/><rect x="799" y="424" width="1" height="4" fill="#5878e4"/><rect x="800" y="462" width="1" height="10" fill="#4a80ee"/><rect x="800" y="445" width="1" height="17" fill="#c42cf0"/><rect x="800" y="425" width="1" height="20" fill="#22a6dc"/><rect x="800" y="419" width="1" height="6" fill="#5878e4"/><rect x="801" y="462" width="1" height="10" fill="#4a80ee"/><rect x="801" y="444" width="1" height="18" fill="#c42cf0"/><rect x="801" y="429" width="1" height="15" fill="#22a6dc"/><rect x="801" y="424" width="1" height="5" fill="#5878e4"/><rect x="802" y="462" width="1" height="10" fill="#4a80ee"/><rect x="802" y="448" width="1" height="14" fill="#c42cf0"/><rect x="802" y="436" width="1" height="12" fill="#22a6dc"/><rect x="802" y="431" width="1" height="5" fill="#5878e4"/><rect x="803" y="462" width="1" height="10" fill="#4a80ee"/><rect x="803" y="444" width="1" height="18" fill="#c42cf0"/><rect x="803" y="424" width="1" height="20" fill="#22a6dc"/><rect x="803" y="419" width="1" height="5" fill="#5878e4"/><rect x="804" y="462" width="1" height="10" fill="#4a80ee"/><rect x="804" y="446" width="1" height="16" fill="#c42cf0"/><rect x="804" y="433" width="1" height="13" fill="#22a6dc"/><rect x="804" y="427" width="1" height="6" fill="#5878e4"/><rect x="805" y="462" width="1" height="10" fill="#4a80ee"/><rect x="805" y="441" width="1" height="21" fill="#c42cf0"/><rect x="805" y="422" width="1" height="19" fill="#22a6dc"/><rect x="805" y="415" width="1" height="7" fill="#5878e4"/><rect x="806" y="462" width="1" height="10" fill="#4a80ee"/><rect x="806" y="451" width="1" height="11" fill="#c42cf0"/><rect x="806" y="439" width="1" height="12" fill="#22a6dc"/><rect x="806" y="436" width="1" height="3" fill="#5878e4"/><rect x="807" y="462" width="1" height="10" fill="#4a80ee"/><rect x="807" y="445" width="1" height="17" fill="#c42cf0"/><rect x="807" y="434" width="1" height="11" fill="#22a6dc"/><rect x="807" y="432" width="1" height="2" fill="#5878e4"/><rect x="808" y="462" width="1" height="10" fill="#4a80ee"/><rect x="808" y="449" width="1" height="13" fill="#c42cf0"/><rect x="808" y="433" width="1" height="16" fill="#22a6dc"/><rect x="808" y="429" width="1" height="4" fill="#5878e4"/><rect x="809" y="462" width="1" height="10" fill="#4a80ee"/><rect x="809" y="447" width="1" height="15" fill="#c42cf0"/><rect x="809" y="435" width="1" height="12" fill="#22a6dc"/><rect x="809" y="431" width="1" height="4" fill="#5878e4"/><rect x="810" y="462" width="1" height="10" fill="#4a80ee"/><rect x="810" y="448" width="1" height="14" fill="#c42cf0"/><rect x="810" y="436" width="1" height="12" fill="#22a6dc"/><rect x="810" y="433" width="1" height="3" fill="#5878e4"/><rect x="811" y="462" width="1" height="10" fill="#4a80ee"/><rect x="811" y="448" width="1" height="14" fill="#c42cf0"/><rect x="811" y="439" width="1" height="9" fill="#22a6dc"/><rect x="811" y="433" width="1" height="6" fill="#5878e4"/><rect x="812" y="462" width="1" height="10" fill="#4a80ee"/><rect x="812" y="448" width="1" height="14" fill="#c42cf0"/><rect x="812" y="430" width="1" height="18" fill="#22a6dc"/><rect x="812" y="426" width="1" height="4" fill="#5878e4"/><rect x="813" y="462" width="1" height="10" fill="#4a80ee"/><rect x="813" y="446" width="1" height="16" fill="#c42cf0"/><rect x="813" y="431" width="1" height="15" fill="#22a6dc"/><rect x="813" y="424" width="1" height="7" fill="#5878e4"/><rect x="814" y="462" width="1" height="10" fill="#4a80ee"/><rect x="814" y="441" width="1" height="21" fill="#c42cf0"/><rect x="814" y="423" width="1" height="18" fill="#22a6dc"/><rect x="814" y="418" width="1" height="5" fill="#5878e4"/><rect x="815" y="462" width="1" height="10" fill="#4a80ee"/><rect x="815" y="445" width="1" height="17" fill="#c42cf0"/><rect x="815" y="425" width="1" height="20" fill="#22a6dc"/><rect x="815" y="420" width="1" height="5" fill="#5878e4"/><rect x="816" y="462" width="1" height="10" fill="#4a80ee"/><rect x="816" y="442" width="1" height="20" fill="#c42cf0"/><rect x="816" y="420" width="1" height="22" fill="#22a6dc"/><rect x="816" y="416" width="1" height="4" fill="#5878e4"/><rect x="817" y="462" width="1" height="10" fill="#4a80ee"/><rect x="817" y="449" width="1" height="13" fill="#c42cf0"/><rect x="817" y="437" width="1" height="12" fill="#22a6dc"/><rect x="817" y="431" width="1" height="6" fill="#5878e4"/><rect x="817" y="408" width="1" height="23" fill="#5878e4"/><rect x="818" y="462" width="1" height="10" fill="#4a80ee"/><rect x="818" y="441" width="1" height="21" fill="#c42cf0"/><rect x="818" y="420" width="1" height="21" fill="#22a6dc"/><rect x="818" y="411" width="1" height="9" fill="#5878e4"/><rect x="819" y="462" width="1" height="10" fill="#4a80ee"/><rect x="819" y="446" width="1" height="16" fill="#c42cf0"/><rect x="819" y="434" width="1" height="12" fill="#22a6dc"/><rect x="819" y="427" width="1" height="7" fill="#5878e4"/><rect x="820" y="462" width="1" height="10" fill="#4a80ee"/><rect x="820" y="450" width="1" height="12" fill="#c42cf0"/><rect x="820" y="440" width="1" height="10" fill="#22a6dc"/><rect x="820" y="435" width="1" height="5" fill="#5878e4"/><rect x="821" y="462" width="1" height="10" fill="#4a80ee"/><rect x="821" y="447" width="1" height="15" fill="#c42cf0"/><rect x="821" y="436" width="1" height="11" fill="#22a6dc"/><rect x="821" y="433" width="1" height="3" fill="#5878e4"/><rect x="822" y="462" width="1" height="10" fill="#4a80ee"/><rect x="822" y="450" width="1" height="12" fill="#c42cf0"/><rect x="822" y="437" width="1" height="13" fill="#22a6dc"/><rect x="822" y="433" width="1" height="4" fill="#5878e4"/><rect x="823" y="462" width="1" height="10" fill="#4a80ee"/><rect x="823" y="449" width="1" height="13" fill="#c42cf0"/><rect x="823" y="437" width="1" height="12" fill="#22a6dc"/><rect x="823" y="433" width="1" height="4" fill="#5878e4"/><rect x="824" y="462" width="1" height="10" fill="#4a80ee"/><rect x="824" y="445" width="1" height="17" fill="#c42cf0"/><rect x="824" y="428" width="1" height="17" fill="#22a6dc"/><rect x="824" y="422" width="1" height="6" fill="#5878e4"/><rect x="824" y="408" width="1" height="14" fill="#5878e4"/><rect x="825" y="462" width="1" height="10" fill="#4a80ee"/><rect x="825" y="445" width="1" height="17" fill="#c42cf0"/><rect x="825" y="430" width="1" height="15" fill="#22a6dc"/><rect x="825" y="423" width="1" height="7" fill="#5878e4"/><rect x="826" y="462" width="1" height="10" fill="#4a80ee"/><rect x="826" y="446" width="1" height="16" fill="#c42cf0"/><rect x="826" y="427" width="1" height="19" fill="#22a6dc"/><rect x="826" y="421" width="1" height="6" fill="#5878e4"/><rect x="827" y="462" width="1" height="10" fill="#4a80ee"/><rect x="827" y="446" width="1" height="16" fill="#c42cf0"/><rect x="827" y="433" width="1" height="13" fill="#22a6dc"/><rect x="827" y="426" width="1" height="7" fill="#5878e4"/><rect x="827" y="410" width="1" height="16" fill="#22a6dc"/><rect x="828" y="462" width="1" height="10" fill="#4a80ee"/><rect x="828" y="443" width="1" height="19" fill="#c42cf0"/><rect x="828" y="428" width="1" height="15" fill="#22a6dc"/><rect x="828" y="422" width="1" height="6" fill="#5878e4"/><rect x="829" y="462" width="1" height="10" fill="#4a80ee"/><rect x="829" y="441" width="1" height="21" fill="#c42cf0"/><rect x="829" y="421" width="1" height="20" fill="#22a6dc"/><rect x="829" y="416" width="1" height="5" fill="#5878e4"/><rect x="830" y="462" width="1" height="10" fill="#4a80ee"/><rect x="830" y="441" width="1" height="21" fill="#c42cf0"/><rect x="830" y="425" width="1" height="16" fill="#22a6dc"/><rect x="830" y="418" width="1" height="7" fill="#5878e4"/><rect x="831" y="462" width="1" height="10" fill="#4a80ee"/><rect x="831" y="443" width="1" height="19" fill="#c42cf0"/><rect x="831" y="424" width="1" height="19" fill="#22a6dc"/><rect x="831" y="419" width="1" height="5" fill="#5878e4"/><rect x="832" y="462" width="1" height="10" fill="#4a80ee"/><rect x="832" y="442" width="1" height="20" fill="#c42cf0"/><rect x="832" y="420" width="1" height="22" fill="#22a6dc"/><rect x="832" y="412" width="1" height="8" fill="#5878e4"/><rect x="833" y="462" width="1" height="10" fill="#4a80ee"/><rect x="833" y="440" width="1" height="22" fill="#c42cf0"/><rect x="833" y="419" width="1" height="21" fill="#22a6dc"/><rect x="833" y="411" width="1" height="8" fill="#5878e4"/><rect x="834" y="462" width="1" height="10" fill="#4a80ee"/><rect x="834" y="449" width="1" height="13" fill="#c42cf0"/><rect x="834" y="434" width="1" height="15" fill="#22a6dc"/><rect x="834" y="430" width="1" height="4" fill="#5878e4"/><rect x="835" y="462" width="1" height="10" fill="#4a80ee"/><rect x="835" y="452" width="1" height="10" fill="#c42cf0"/><rect x="835" y="445" width="1" height="7" fill="#22a6dc"/><rect x="835" y="441" width="1" height="4" fill="#5878e4"/><rect x="836" y="462" width="1" height="10" fill="#4a80ee"/><rect x="836" y="449" width="1" height="13" fill="#c42cf0"/><rect x="836" y="439" width="1" height="10" fill="#22a6dc"/><rect x="836" y="437" width="1" height="2" fill="#5878e4"/><rect x="837" y="462" width="1" height="10" fill="#4a80ee"/><rect x="837" y="445" width="1" height="17" fill="#c42cf0"/><rect x="837" y="431" width="1" height="14" fill="#22a6dc"/><rect x="837" y="427" width="1" height="4" fill="#5878e4"/><rect x="838" y="462" width="1" height="10" fill="#4a80ee"/><rect x="838" y="449" width="1" height="13" fill="#c42cf0"/><rect x="838" y="442" width="1" height="7" fill="#22a6dc"/><rect x="838" y="438" width="1" height="4" fill="#5878e4"/><rect x="839" y="462" width="1" height="10" fill="#4a80ee"/><rect x="839" y="445" width="1" height="17" fill="#c42cf0"/><rect x="839" y="430" width="1" height="15" fill="#22a6dc"/><rect x="839" y="424" width="1" height="6" fill="#5878e4"/><rect x="840" y="462" width="1" height="10" fill="#4a80ee"/><rect x="840" y="445" width="1" height="17" fill="#c42cf0"/><rect x="840" y="426" width="1" height="19" fill="#22a6dc"/><rect x="840" y="420" width="1" height="6" fill="#5878e4"/><rect x="790" y="459" width="1" height="2" fill="#ec8434"/><rect x="795" y="457" width="1" height="4" fill="#ec8434"/><rect x="796" y="454" width="1" height="7" fill="#ec8434"/><rect x="797" y="456" width="1" height="5" fill="#1f8a1f"/><rect x="798" y="457" width="1" height="4" fill="#1f8a1f"/><rect x="800" y="452" width="1" height="9" fill="#ec8434"/><rect x="801" y="455" width="1" height="6" fill="#1f8a1f"/><rect x="805" y="455" width="1" height="6" fill="#ec8434"/><rect x="806" y="452" width="1" height="9" fill="#1f8a1f"/><rect x="808" y="446" width="1" height="15" fill="#ec8434"/><rect x="810" y="450" width="1" height="11" fill="#ec8434"/><rect x="811" y="454" width="1" height="7" fill="#1f8a1f"/><rect x="812" y="448" width="1" height="13" fill="#ec8434"/><rect x="815" y="451" width="1" height="10" fill="#1f8a1f"/><rect x="816" y="439" width="1" height="22" fill="#ec8434"/><rect x="817" y="443" width="1" height="18" fill="#ec8434"/><rect x="820" y="450" width="1" height="11" fill="#1f8a1f"/><rect x="822" y="443" width="1" height="18" fill="#1f8a1f"/><rect x="824" y="437" width="1" height="24" fill="#1f8a1f"/><rect x="825" y="435" width="1" height="26" fill="#1f8a1f"/><rect x="830" y="445" width="1" height="16" fill="#ec8434"/><rect x="831" y="433" width="1" height="28" fill="#ec8434"/><rect x="832" y="445" width="1" height="16" fill="#ec8434"/><rect x="836" y="439" width="1" height="22" fill="#1f8a1f"/><rect x="837" y="434" width="1" height="27" fill="#ec8434"/><rect x="600" y="459" width="1" height="1" fill="#1f8a1f"/><rect x="601" y="459" width="1" height="3" fill="#1f8a1f"/><rect x="602" y="459" width="1" height="1" fill="#1f8a1f"/><rect x="604" y="459" width="1" height="1" fill="#1f8a1f"/><rect x="607" y="459" width="1" height="3" fill="#1f8a1f"/><rect x="609" y="457" width="1" height="2" fill="#1f8a1f"/><rect x="611" y="460" width="1" height="2" fill="#1f8a1f"/><rect x="613" y="457" width="1" height="2" fill="#1f8a1f"/><rect x="615" y="458" width="1" height="3" fill="#1f8a1f"/><rect x="623" y="459" width="1" height="1" fill="#1f8a1f"/><rect x="627" y="458" width="1" height="2" fill="#1f8a1f"/><rect x="628" y="460" width="1" height="2" fill="#1f8a1f"/><rect x="629" y="459" width="1" height="2" fill="#1f8a1f"/><rect x="631" y="460" width="1" height="1" fill="#1f8a1f"/><rect x="637" y="459" width="1" height="1" fill="#1f8a1f"/><rect x="639" y="459" width="1" height="2" fill="#1f8a1f"/><rect x="644" y="457" width="1" height="1" fill="#1f8a1f"/><rect x="648" y="458" width="1" height="2" fill="#1f8a1f"/><rect x="650" y="460" width="1" height="2" fill="#1f8a1f"/><rect x="653" y="458" width="1" height="3" fill="#1f8a1f"/><rect x="659" y="458" width="1" height="1" fill="#1f8a1f"/><rect x="660" y="460" width="1" height="1" fill="#1f8a1f"/><rect x="662" y="458" width="1" height="1" fill="#1f8a1f"/><rect x="665" y="460" width="1" height="2" fill="#1f8a1f"/><rect x="666" y="457" width="1" height="3" fill="#1f8a1f"/><rect x="667" y="458" width="1" height="1" fill="#1f8a1f"/><rect x="669" y="457" width="1" height="2" fill="#1f8a1f"/><rect x="672" y="458" width="1" height="1" fill="#1f8a1f"/><rect x="673" y="458" width="1" height="3" fill="#1f8a1f"/><rect x="677" y="457" width="1" height="1" fill="#1f8a1f"/><rect x="679" y="457" width="1" height="3" fill="#1f8a1f"/><rect x="684" y="459" width="1" height="1" fill="#1f8a1f"/><rect x="686" y="458" width="1" height="1" fill="#1f8a1f"/><rect x="693" y="459" width="1" height="2" fill="#1f8a1f"/><rect x="695" y="458" width="1" height="3" fill="#1f8a1f"/><rect x="697" y="460" width="1" height="2" fill="#1f8a1f"/><rect x="705" y="458" width="1" height="2" fill="#1f8a1f"/><rect x="707" y="458" width="1" height="3" fill="#1f8a1f"/><rect x="711" y="458" width="1" height="3" fill="#1f8a1f"/><rect x="712" y="457" width="1" height="2" fill="#1f8a1f"/><rect x="714" y="459" width="1" height="2" fill="#1f8a1f"/><rect x="716" y="458" width="1" height="3" fill="#1f8a1f"/><rect x="717" y="458" width="1" height="2" fill="#1f8a1f"/><rect x="718" y="457" width="1" height="1" fill="#1f8a1f"/><rect x="719" y="458" width="1" height="2" fill="#1f8a1f"/><rect x="720" y="459" width="1" height="3" fill="#1f8a1f"/><rect x="724" y="460" width="1" height="2" fill="#1f8a1f"/><rect x="727" y="459" width="1" height="1" fill="#1f8a1f"/><rect x="729" y="458" width="1" height="3" fill="#1f8a1f"/><rect x="734" y="459" width="1" height="1" fill="#1f8a1f"/><rect x="736" y="460" width="1" height="2" fill="#1f8a1f"/><rect x="739" y="459" width="1" height="1" fill="#1f8a1f"/><rect x="740" y="459" width="1" height="3" fill="#1f8a1f"/><rect x="741" y="459" width="1" height="3" fill="#1f8a1f"/><rect x="743" y="458" width="1" height="3" fill="#1f8a1f"/><rect x="745" y="457" width="1" height="1" fill="#1f8a1f"/><rect x="749" y="457" width="1" height="3" fill="#1f8a1f"/><rect x="751" y="460" width="1" height="2" fill="#1f8a1f"/><rect x="752" y="460" width="1" height="1" fill="#1f8a1f"/><rect x="754" y="457" width="1" height="1" fill="#1f8a1f"/><rect x="755" y="458" width="1" height="2" fill="#1f8a1f"/><rect x="758" y="459" width="1" height="2" fill="#1f8a1f"/><rect x="761" y="458" width="1" height="2" fill="#1f8a1f"/><rect x="762" y="458" width="1" height="2" fill="#1f8a1f"/><rect x="764" y="457" width="1" height="2" fill="#1f8a1f"/><rect x="766" y="459" width="1" height="1" fill="#1f8a1f"/><rect x="767" y="458" width="1" height="3" fill="#1f8a1f"/><rect x="774" y="457" width="1" height="1" fill="#1f8a1f"/><rect x="775" y="458" width="1" height="2" fill="#1f8a1f"/><rect x="778" y="458" width="1" height="2" fill="#1f8a1f"/><rect x="779" y="457" width="1" height="3" fill="#1f8a1f"/><rect x="780" y="459" width="1" height="1" fill="#1f8a1f"/><rect x="782" y="458" width="1" height="3" fill="#1f8a1f"/><rect x="784" y="457" width="1" height="3" fill="#1f8a1f"/><rect x="786" y="457" width="1" height="1" fill="#1f8a1f"/><rect x="787" y="460" width="1" height="2" fill="#1f8a1f"/><rect x="788" y="460" width="1" height="2" fill="#1f8a1f"/><rect x="789" y="457" width="1" height="2" fill="#1f8a1f"/><rect x="520" y="460" width="1" height="5" fill="#ec8434"/><rect x="520" y="465" width="1" height="4" fill="#1f8a1f"/><rect x="521" y="460" width="1" height="5" fill="#ec8434"/><rect x="521" y="465" width="1" height="4" fill="#4a80ee"/><rect x="522" y="462" width="1" height="3" fill="#ec8434"/><rect x="522" y="465" width="1" height="4" fill="#ec8434"/><rect x="523" y="462" width="1" height="3" fill="#ec8434"/><rect x="523" y="465" width="1" height="4" fill="#ec8434"/><rect x="524" y="462" width="1" height="3" fill="#ec8434"/><rect x="524" y="465" width="1" height="4" fill="#ec8434"/><rect x="525" y="462" width="1" height="3" fill="#ec8434"/><rect x="525" y="465" width="1" height="4" fill="#ec8434"/><rect x="526" y="462" width="1" height="3" fill="#ec8434"/><rect x="526" y="465" width="1" height="4" fill="#1f8a1f"/><rect x="527" y="462" width="1" height="3" fill="#ec8434"/><rect x="527" y="465" width="1" height="4" fill="#ec8434"/><rect x="528" y="462" width="1" height="3" fill="#ec8434"/><rect x="528" y="465" width="1" height="4" fill="#4a80ee"/><rect x="529" y="462" width="1" height="3" fill="#ec8434"/><rect x="529" y="465" width="1" height="4" fill="#1f8a1f"/><rect x="530" y="462" width="1" height="3" fill="#ec8434"/><rect x="530" y="465" width="1" height="4" fill="#1f8a1f"/><rect x="531" y="462" width="1" height="3" fill="#ec8434"/><rect x="531" y="465" width="1" height="4" fill="#1f8a1f"/><rect x="532" y="462" width="1" height="3" fill="#ec8434"/><rect x="532" y="465" width="1" height="4" fill="#ec8434"/><rect x="533" y="462" width="1" height="3" fill="#ec8434"/><rect x="533" y="465" width="1" height="4" fill="#1f8a1f"/><rect x="534" y="462" width="1" height="3" fill="#ec8434"/><rect x="534" y="465" width="1" height="4" fill="#1f8a1f"/><rect x="535" y="462" width="1" height="3" fill="#ec8434"/><rect x="535" y="465" width="1" height="4" fill="#1f8a1f"/><rect x="536" y="462" width="1" height="3" fill="#ec8434"/><rect x="536" y="465" width="1" height="4" fill="#1f8a1f"/><rect x="537" y="462" width="1" height="3" fill="#ec8434"/><rect x="537" y="465" width="1" height="4" fill="#1f8a1f"/><rect x="538" y="462" width="1" height="3" fill="#ec8434"/><rect x="538" y="465" width="1" height="4" fill="#ec8434"/><rect x="539" y="462" width="1" height="3" fill="#ec8434"/><rect x="539" y="465" width="1" height="4" fill="#1f8a1f"/><rect x="540" y="462" width="1" height="3" fill="#ec8434"/><rect x="540" y="465" width="1" height="4" fill="#4a80ee"/><rect x="541" y="462" width="1" height="3" fill="#ec8434"/><rect x="541" y="465" width="1" height="4" fill="#1f8a1f"/><rect x="542" y="462" width="1" height="3" fill="#ec8434"/><rect x="542" y="465" width="1" height="4" fill="#1f8a1f"/><rect x="543" y="462" width="1" height="3" fill="#ec8434"/><rect x="543" y="465" width="1" height="4" fill="#1f8a1f"/><rect x="544" y="462" width="1" height="3" fill="#ec8434"/><rect x="544" y="465" width="1" height="4" fill="#1f8a1f"/><rect x="545" y="462" width="1" height="3" fill="#ec8434"/><rect x="545" y="465" width="1" height="4" fill="#1f8a1f"/><rect x="546" y="462" width="1" height="3" fill="#ec8434"/><rect x="546" y="465" width="1" height="4" fill="#ec8434"/><rect x="547" y="462" width="1" height="3" fill="#ec8434"/><rect x="547" y="465" width="1" height="4" fill="#4a80ee"/><rect x="548" y="462" width="1" height="3" fill="#ec8434"/><rect x="548" y="465" width="1" height="4" fill="#1f8a1f"/><rect x="549" y="462" width="1" height="3" fill="#ec8434"/><rect x="549" y="465" width="1" height="4" fill="#ec8434"/><rect x="550" y="462" width="1" height="3" fill="#ec8434"/><rect x="550" y="465" width="1" height="4" fill="#ec8434"/><rect x="551" y="462" width="1" height="3" fill="#ec8434"/><rect x="551" y="465" width="1" height="4" fill="#1f8a1f"/><rect x="552" y="462" width="1" height="3" fill="#ec8434"/><rect x="552" y="465" width="1" height="4" fill="#1f8a1f"/><rect x="553" y="462" width="1" height="3" fill="#ec8434"/><rect x="553" y="465" width="1" height="4" fill="#1f8a1f"/><rect x="554" y="462" width="1" height="3" fill="#ec8434"/><rect x="554" y="465" width="1" height="4" fill="#ec8434"/><rect x="555" y="462" width="1" height="3" fill="#ec8434"/><rect x="555" y="465" width="1" height="4" fill="#4a80ee"/><rect x="556" y="462" width="1" height="3" fill="#ec8434"/><rect x="556" y="465" width="1" height="4" fill="#1f8a1f"/><rect x="557" y="462" width="1" height="3" fill="#ec8434"/><rect x="557" y="465" width="1" height="4" fill="#ec8434"/><rect x="841" y="411" width="1" height="51" fill="#7897b0"/><rect x="841" y="462" width="1" height="10" fill="#4a80ee"/><rect x="841" y="467" width="1" height="2" fill="#c42cf0"/><rect x="842" y="411" width="1" height="51" fill="#7897b0"/><rect x="842" y="462" width="1" height="10" fill="#4a80ee"/><rect x="842" y="468" width="1" height="2" fill="#22a6dc"/><rect x="843" y="411" width="1" height="51" fill="#7897b0"/><rect x="843" y="462" width="1" height="10" fill="#4a80ee"/><rect x="843" y="466" width="1" height="2" fill="#c42cf0"/><rect x="844" y="411" width="1" height="51" fill="#7897b0"/><rect x="844" y="462" width="1" height="10" fill="#4a80ee"/><rect x="844" y="467" width="1" height="2" fill="#c42cf0"/><rect x="845" y="411" width="1" height="51" fill="#7897b0"/><rect x="845" y="462" width="1" height="10" fill="#4a80ee"/><rect x="845" y="468" width="1" height="2" fill="#ec8434"/><rect x="846" y="408" width="1" height="54" fill="#7897b0"/><rect x="846" y="462" width="1" height="10" fill="#4a80ee"/><rect x="846" y="466" width="1" height="2" fill="#ec8434"/><rect x="847" y="405" width="1" height="57" fill="#7897b0"/><rect x="847" y="462" width="1" height="10" fill="#4a80ee"/><rect x="847" y="467" width="1" height="2" fill="#ec8434"/><rect x="848" y="402" width="1" height="60" fill="#7897b0"/><rect x="848" y="462" width="1" height="10" fill="#4a80ee"/><rect x="848" y="468" width="1" height="2" fill="#ec8434"/><rect x="849" y="402" width="1" height="60" fill="#7897b0"/><rect x="849" y="462" width="1" height="10" fill="#4a80ee"/><rect x="849" y="466" width="1" height="2" fill="#c42cf0"/><rect x="850" y="402" width="1" height="60" fill="#7897b0"/><rect x="850" y="462" width="1" height="10" fill="#4a80ee"/><rect x="850" y="467" width="1" height="2" fill="#22a6dc"/><rect x="851" y="404" width="1" height="58" fill="#7897b0"/><rect x="851" y="462" width="1" height="10" fill="#4a80ee"/><rect x="851" y="468" width="1" height="2" fill="#c42cf0"/></svg>
<div class="abs" style="left:0;top:361px;width:1px;height:2px;background:#8a8a8a"></div><div class="abs" style="left:0;top:364px;width:1px;height:2px;background:#8a8a8a"></div><div class="abs" style="left:0;top:367px;width:1px;height:2px;background:#8a8a8a"></div><div class="abs" style="left:0;top:370px;width:1px;height:2px;background:#8a8a8a"></div><div class="abs" style="left:0;top:373px;width:1px;height:2px;background:#8a8a8a"></div><div class="abs" style="left:0;top:376px;width:1px;height:2px;background:#8a8a8a"></div>
<div class="abs" style="left:258px;top:90px;width:1px;height:398px;background:#f4f4f4"></div>
<div class="abs" style="left:308px;top:90px;width:1px;height:398px;background:#f4f4f4"></div>
<div class="abs" style="left:853px;top:90px;width:1px;height:398px;background:#f4f4f4"></div>
<div class="abs" style="left:2px;top:488px;width:852px;height:1px;background:#3e3e3e"></div>
<div class="abs" style="left:3px;top:489px;width:255px;height:27px;background:#2b2b2b"></div>
<div class="abs" style="left:259px;top:489px;width:594px;height:13px;background:#2b2b2b"></div>
<svg style="left:0;top:0" width="1" height="1"><path d="M239.5,502.5 H251 M245.2,497 V508" stroke="#4caf50" stroke-width="1.6"/></svg>
<div class="abs" style="left:259px;top:502px;width:594px;height:14px;background:#3b3b3b"></div>
<div class="abs" style="left:259px;top:502px;width:13px;height:14px;background:#444;border:1px solid #4f4f4f"></div>
<div class="abs" style="left:272px;top:502px;width:3px;height:14px;background:#363636"></div>
<div class="abs" style="left:838px;top:502px;width:14px;height:14px;background:#444;border:1px solid #4f4f4f"></div>
<div class="abs" style="left:658px;top:502px;width:159px;height:14px;background:#474747;border-top:1px solid #505050"></div>
<div class="abs" style="left:658px;top:502px;width:15px;height:14px;background:#424242;border:1px solid #5c5c5c;border-radius:3px"></div>
<div class="abs" style="left:802px;top:502px;width:15px;height:14px;background:#424242;border:1px solid #5c5c5c;border-radius:3px"></div>
<div class="abs" style="left:852px;top:502px;width:2px;height:14px;background:#303030"></div>
<div class="abs" style="left:259px;top:516px;width:595px;height:1px;background:#262626"></div>
<div class="abs" style="left:854px;top:62px;width:15px;height:427px;background:#3a3a3a"></div>
<div class="abs" style="left:855px;top:62px;width:13px;height:13px;background:#414141;border:1px solid #4f4f4f"></div>
<div class="abs" style="left:855px;top:77px;width:13px;height:135px;background:#444;border:1px solid #555"></div>
<div class="abs" style="left:855px;top:490px;width:13px;height:13px;background:#414141;border:1px solid #4f4f4f"></div>
<div class="abs" style="left:854px;top:503px;width:15px;height:13px;background:#333"></div>
<svg style="left:0;top:0" width="1" height="1"><path d="M857.7,70.7 H865.3 L861.5,66.6 Z" fill="#c4c4c4"/><path d="M857.8,494.3 H865.2 L861.5,498.2 Z" fill="#c4c4c4"/><path d="M268.2,505.2 V512.8 L264.2,509 Z" fill="#c8c8c8"/><path d="M843,505.2 V512.8 L847,509 Z" fill="#c8c8c8"/></svg>
</body></html>
